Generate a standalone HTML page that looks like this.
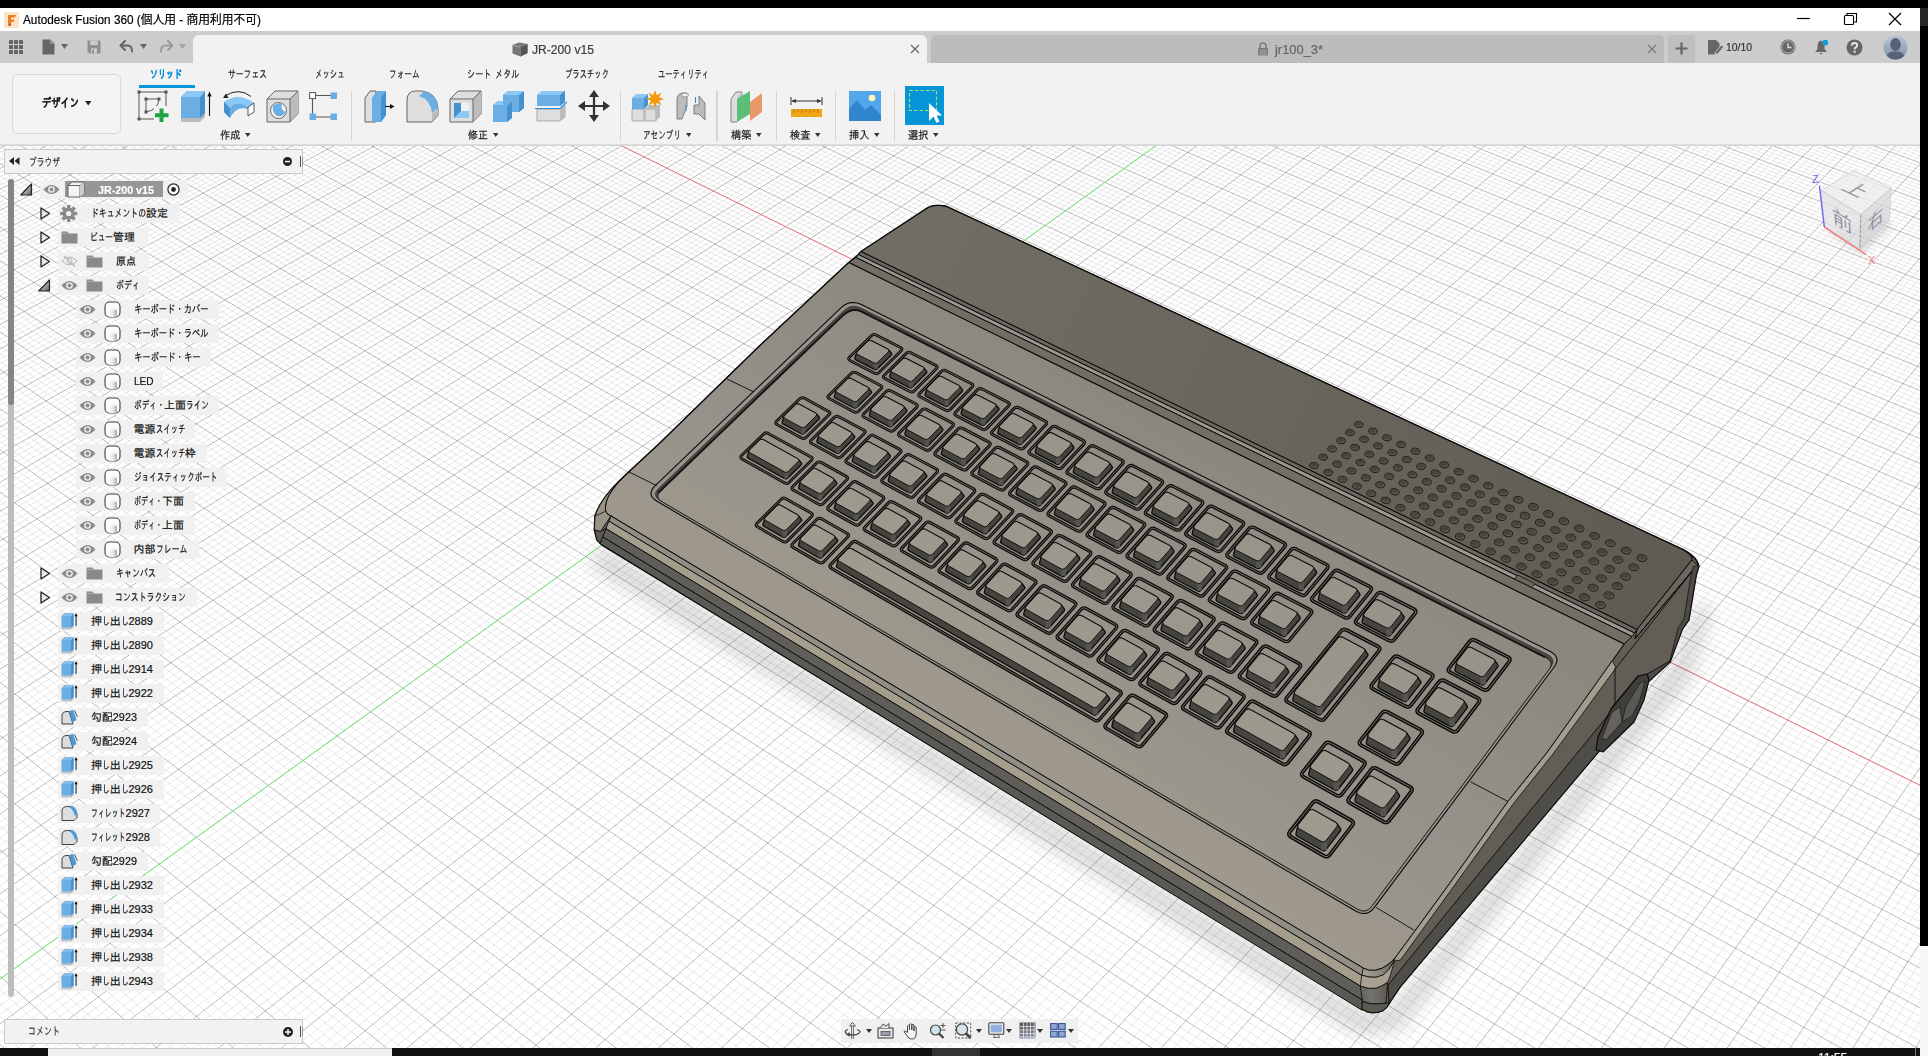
<!DOCTYPE html>
<html lang="ja"><head><meta charset="utf-8"><title>Autodesk Fusion 360</title>
<style>html,body{margin:0;padding:0}body{width:1928px;height:1056px;overflow:hidden;position:relative;background:#000;font-family:"Liberation Sans","Noto Sans CJK JP",sans-serif}
.t{position:absolute;white-space:nowrap;line-height:20px;height:20px;transform-origin:0 50%;letter-spacing:0;-webkit-text-stroke:0.2px currentColor}
#vp{position:absolute;left:0;top:0;width:1920px;height:1048px;overflow:hidden;background:#fff}
</style></head>
<body>
<svg width="0" height="0" style="position:absolute"><defs><linearGradient id="tg" x1="0" y1="0" x2="1" y2="1"><stop offset="0.3" stop-color="#ddd"/><stop offset="1" stop-color="#555"/></linearGradient><linearGradient id="bg1" x1="0" y1="0" x2="1" y2="0"><stop offset="0" stop-color="#fff"/><stop offset="0.55" stop-color="#e4e6ea"/><stop offset="1" stop-color="#a9adb6"/></linearGradient></defs></svg>
<div style="position:absolute;left:0px;top:0px;width:1928px;height:1056px;background:#000"></div>
<div style="position:absolute;left:1920px;top:0px;width:8px;height:26px;background:#262626"></div>
<div style="position:absolute;left:1920px;top:946px;width:8px;height:110px;background:#f7f7f7"></div>
<div style="position:absolute;left:0px;top:1048px;width:1920px;height:8px;background:#111"></div>
<div style="position:absolute;left:48px;top:1048px;width:344px;height:8px;background:#f0f0f0;border-top:1px solid #c8c8c8;box-sizing:border-box"></div>
<div style="position:absolute;left:932px;top:1048px;width:48px;height:8px;background:#333"></div>
<div style="position:absolute;left:1915px;top:1048px;width:1px;height:8px;background:#777"></div>
<div id="vp">
<svg width="1928" height="1056" viewBox="0 0 1928 1056" style="position:absolute;left:0;top:0">
<g shape-rendering="geometricPrecision">
<path d="M-803.4 471.5L801.7 -282.3M-800.3 474.7L805.2 -281.1M-797.2 477.8L808.8 -279.9M-794.0 481.0L812.3 -278.6M-787.7 487.3L819.4 -276.1M-784.5 490.5L823.0 -274.9M-781.3 493.7L826.5 -273.6M-778.1 496.9L830.1 -272.4M-771.6 503.3L837.3 -269.9M-768.4 506.5L840.9 -268.6M-765.1 509.7L844.5 -267.3M-761.9 513.0L848.1 -266.1M-755.3 519.5L855.3 -263.5M-752.1 522.8L859.0 -262.3M-748.8 526.1L862.6 -261.0M-745.5 529.4L866.3 -259.7M-738.8 536.0L873.6 -257.1M-735.5 539.4L877.2 -255.9M-732.1 542.7L880.9 -254.6M-728.8 546.0L884.6 -253.3M-722.0 552.8L892.0 -250.7M-718.6 556.2L895.7 -249.4M-715.2 559.6L899.4 -248.1M-711.8 563.0L903.1 -246.8M-704.9 569.8L910.6 -244.2M-701.5 573.3L914.3 -242.9M-698.0 576.7L918.1 -241.5M-694.5 580.2L921.8 -240.2M-687.6 587.1L929.4 -237.6M-684.1 590.6L933.2 -236.3M-680.5 594.1L936.9 -234.9M-677.0 597.7L940.7 -233.6M-669.9 604.7L948.4 -230.9M-666.4 608.3L952.2 -229.6M-662.8 611.9L956.0 -228.3M-659.2 615.4L959.8 -226.9M-652.0 622.6L967.5 -224.2M-648.4 626.2L971.4 -222.9M-644.7 629.9L975.2 -221.5M-641.1 633.5L979.1 -220.2M-633.8 640.8L986.9 -217.4M-630.1 644.5L990.8 -216.1M-626.4 648.2L994.7 -214.7M-622.7 651.9L998.6 -213.3M-615.2 659.3L1006.4 -210.6M-611.5 663.0L1010.4 -209.2M-607.7 666.8L1014.3 -207.8M-603.9 670.5L1018.3 -206.4M-596.4 678.1L1026.2 -203.7M-592.6 681.9L1030.2 -202.3M-588.7 685.7L1034.2 -200.9M-584.9 689.5L1038.2 -199.5M-577.2 697.2L1046.2 -196.7M-573.3 701.1L1050.2 -195.3M-569.4 705.0L1054.2 -193.8M-565.5 708.9L1058.2 -192.4M-557.7 716.7L1066.3 -189.6M-553.7 720.6L1070.4 -188.2M-549.8 724.6L1074.5 -186.7M-545.8 728.5L1078.5 -185.3M-537.8 736.5L1086.7 -182.5M-533.8 740.5L1090.8 -181.0M-529.8 744.5L1094.9 -179.6M-525.8 748.5L1099.0 -178.1M-517.6 756.6L1107.3 -175.2M-513.6 760.7L1111.5 -173.8M-509.5 764.8L1115.6 -172.3M-505.3 768.9L1119.8 -170.9M-497.1 777.1L1128.1 -167.9M-492.9 781.3L1132.3 -166.5M-488.8 785.4L1136.5 -165.0M-484.6 789.6L1140.7 -163.5M-476.2 798.0L1149.2 -160.6M-471.9 802.2L1153.4 -159.1M-467.7 806.5L1157.6 -157.6M-463.4 810.7L1161.9 -156.1M-454.9 819.3L1170.4 -153.1M-450.6 823.6L1174.7 -151.6M-446.2 827.9L1179.0 -150.1M-441.9 832.2L1183.3 -148.6M-433.2 840.9L1191.9 -145.6M-428.8 845.3L1196.2 -144.1M-424.4 849.7L1200.6 -142.6M-420.0 854.1L1204.9 -141.0M-411.1 862.9L1213.6 -138.0M-406.6 867.4L1218.0 -136.4M-402.1 871.8L1222.4 -134.9M-397.6 876.3L1226.8 -133.4M-388.6 885.4L1235.6 -130.3M-384.0 889.9L1240.0 -128.7M-379.5 894.4L1244.4 -127.2M-374.9 899.0L1248.9 -125.6M-365.7 908.2L1257.8 -122.5M-361.0 912.8L1262.2 -120.9M-356.4 917.5L1266.7 -119.4M-351.7 922.1L1271.2 -117.8M-342.3 931.5L1280.2 -114.6M-337.6 936.2L1284.7 -113.1M-332.9 940.9L1289.3 -111.5M-328.1 945.7L1293.8 -109.9M-318.5 955.2L1302.9 -106.7M-313.7 960.0L1307.5 -105.1M-308.9 964.9L1312.0 -103.5M-304.0 969.7L1316.6 -101.9M-294.3 979.4L1325.8 -98.7M-289.4 984.3L1330.4 -97.0M-284.5 989.2L1335.1 -95.4M-279.5 994.2L1339.7 -93.8M-269.6 1004.1L1349.0 -90.5M-264.6 1009.1L1353.7 -88.9M-259.5 1014.1L1358.4 -87.3M-254.5 1019.1L1363.1 -85.6M-244.4 1029.2L1372.5 -82.3M-239.3 1034.3L1377.2 -80.7M-234.1 1039.4L1381.9 -79.0M-229.0 1044.6L1386.7 -77.3M-218.7 1054.9L1396.2 -74.0M-213.5 1060.1L1401.0 -72.3M-208.2 1065.3L1405.7 -70.7M-203.0 1070.5L1410.5 -69.0M-192.4 1081.0L1420.2 -65.6M-187.1 1086.3L1425.0 -63.9M-181.8 1091.6L1429.8 -62.2M-176.4 1097.0L1434.7 -60.5M-165.7 1107.7L1444.4 -57.1M-160.3 1113.1L1449.3 -55.4M-154.8 1118.5L1454.2 -53.7M-149.4 1124.0L1459.1 -52.0M-138.4 1134.9L1469.0 -48.5M-132.9 1140.5L1473.9 -46.8M-127.3 1146.0L1478.8 -45.0M-121.7 1151.6L1483.8 -43.3M-110.5 1162.7L1493.8 -39.8M-104.9 1168.4L1498.8 -38.1M-99.2 1174.0L1503.8 -36.3M-93.5 1179.7L1508.8 -34.5M-82.1 1191.1L1518.9 -31.0M-76.3 1196.9L1523.9 -29.2M-70.5 1202.6L1529.0 -27.5M-64.7 1208.4L1534.1 -25.7M-53.0 1220.1L1544.3 -22.1M-47.2 1225.9L1549.4 -20.3M-41.2 1231.8L1554.5 -18.5M-35.3 1237.8L1559.7 -16.7M-23.4 1249.7L1570.0 -13.1M-17.4 1255.7L1575.1 -11.3M-11.3 1261.7L1580.3 -9.5M-5.3 1267.7L1585.5 -7.7M6.9 1279.9L1596.0 -4.0M13.1 1286.0L1601.2 -2.2M19.2 1292.2L1606.4 -0.3M25.4 1298.3L1611.7 1.5M37.9 1310.8L1622.3 5.2M44.2 1317.0L1627.6 7.1M50.5 1323.3L1632.9 8.9M56.8 1329.6L1638.2 10.8M69.5 1342.3L1648.9 14.5M75.9 1348.7L1654.3 16.4M82.4 1355.2L1659.6 18.3M88.9 1361.6L1665.0 20.2M101.9 1374.6L1675.8 24.0M108.4 1381.1L1681.3 25.9M115.0 1387.7L1686.7 27.8M121.6 1394.3L1692.2 29.7M134.9 1407.6L1703.1 33.5M141.7 1414.3L1708.6 35.5M148.4 1421.0L1714.1 37.4M155.2 1427.7L1719.6 39.3M168.8 1441.3L1730.7 43.2M175.6 1448.2L1736.3 45.2M182.5 1455.0L1741.8 47.1M189.4 1462.0L1747.4 49.1M203.4 1475.9L1758.6 53.0M210.4 1482.9L1764.3 55.0M217.4 1489.9L1769.9 57.0M224.5 1497.0L1775.6 58.9M238.8 1511.2L1786.9 62.9M246.0 1518.3L1792.6 64.9M253.2 1525.5L1798.3 66.9M260.4 1532.8L1804.0 68.9M275.0 1547.3L1815.5 72.9M282.4 1554.7L1821.3 75.0M289.8 1562.0L1827.1 77.0M297.2 1569.4L1832.9 79.0M312.1 1584.3L1844.5 83.1M319.7 1591.9L1850.4 85.1M327.2 1599.4L1856.2 87.2M334.8 1607.0L1862.1 89.3M350.1 1622.3L1873.9 93.4M357.9 1630.0L1879.8 95.5M365.6 1637.7L1885.7 97.5M373.4 1645.4L1891.7 99.6M389.1 1661.1L1903.6 103.8M397.0 1669.0L1909.6 105.9M404.9 1676.9L1915.6 108.0M412.9 1684.9L1921.6 110.1M429.0 1700.9L1933.7 114.3M437.1 1709.0L1939.7 116.5M445.2 1717.1L1945.8 118.6M453.4 1725.2L1951.9 120.7M469.9 1741.7L1964.2 125.0M478.2 1750.0L1970.3 127.2M486.5 1758.3L1976.5 129.3M494.9 1766.7L1982.6 131.5M511.8 1783.5L1995.0 135.8M520.3 1792.0L2001.3 138.0M528.9 1800.5L2007.5 140.2M537.5 1809.1L2013.7 142.4M554.8 1826.4L2026.3 146.8M563.5 1835.1L2032.6 149.0M572.3 1843.9L2038.9 151.2M581.1 1852.7L2045.3 153.4M598.9 1870.4L2058.0 157.9M607.9 1879.4L2064.4 160.1M616.9 1888.4L2070.8 162.4M626.0 1897.4L2077.2 164.6M644.2 1915.6L2090.1 169.2M653.4 1924.8L2096.6 171.4M662.7 1934.0L2103.0 173.7M672.0 1943.3L2109.5 176.0M690.7 1962.0L2122.6 180.5M700.2 1971.4L2129.2 182.8M709.7 1980.9L2135.7 185.1M719.2 1990.4L2142.3 187.5M738.5 2009.6L2155.5 192.1M748.2 2019.3L2162.2 194.4M757.9 2029.0L2168.9 196.8M767.8 2038.8L2175.5 199.1M787.6 2058.6L2188.9 203.8M797.5 2068.5L2195.7 206.2M807.6 2078.5L2202.4 208.5M817.6 2088.6L2209.2 210.9M838.0 2108.9L2222.8 215.7M848.2 2119.1L2229.6 218.0M858.6 2129.4L2236.4 220.4M868.9 2139.7L2243.3 222.8M889.8 2160.6L2257.1 227.7M900.4 2171.1L2264.0 230.1M911.0 2181.7L2270.9 232.5M921.7 2192.4L2277.9 235.0M943.2 2213.8L2291.8 239.9M954.0 2224.6L2298.9 242.3M964.9 2235.5L2305.9 244.8M975.9 2246.5L2312.9 247.2M998.1 2268.6L2327.1 252.2M1009.2 2279.7L2334.2 254.7M1020.5 2290.9L2341.3 257.2M1031.8 2302.2L2348.5 259.7M1054.6 2324.9L2362.8 264.7M1066.1 2336.4L2370.0 267.3M1077.7 2348.0L2377.3 269.8M1089.3 2359.6L2384.5 272.3M1112.8 2383.0L2399.1 277.4M1124.6 2394.8L2406.4 280.0M1136.5 2406.7L2413.7 282.6M1148.5 2418.7L2421.0 285.1M-798.5 464.6L1169.3 2416.1M-790.4 460.9L1177.9 2401.5M-782.4 457.1L1186.4 2387.1M-774.4 453.4L1194.9 2372.8M-758.5 445.9L1211.6 2344.4M-750.6 442.2L1219.9 2330.4M-742.8 438.5L1228.2 2316.5M-734.9 434.8L1236.3 2302.7M-719.3 427.5L1252.5 2275.3M-711.5 423.9L1260.5 2261.8M-703.8 420.3L1268.5 2248.4M-696.1 416.7L1276.3 2235.1M-680.8 409.5L1292.0 2208.7M-673.2 405.9L1299.7 2195.6M-665.6 402.4L1307.4 2182.6M-658.0 398.8L1315.0 2169.7M-643.0 391.8L1330.1 2144.3M-635.5 388.3L1337.5 2131.6M-628.0 384.8L1344.9 2119.1M-620.6 381.3L1352.3 2106.7M-605.8 374.4L1366.9 2082.0M-598.5 370.9L1374.1 2069.8M-591.1 367.5L1381.3 2057.7M-583.9 364.1L1388.4 2045.7M-569.3 357.3L1402.5 2021.8M-562.1 353.9L1409.5 2010.0M-554.9 350.5L1416.4 1998.3M-547.7 347.1L1423.3 1986.7M-533.5 340.5L1436.9 1963.6M-526.4 337.1L1443.7 1952.2M-519.3 333.8L1450.4 1940.8M-512.3 330.5L1457.1 1929.6M-498.3 323.9L1470.3 1907.2M-491.3 320.7L1476.8 1896.2M-484.3 317.4L1483.3 1885.2M-477.4 314.2L1489.8 1874.3M-463.6 307.7L1502.6 1852.6M-456.8 304.5L1508.9 1841.9M-450.0 301.3L1515.2 1831.3M-443.1 298.1L1521.5 1820.7M-429.6 291.8L1533.9 1799.7M-422.9 288.6L1540.0 1789.4M-416.2 285.5L1546.1 1779.0M-409.5 282.3L1552.2 1768.8M-396.2 276.1L1564.2 1748.5M-389.5 273.0L1570.2 1738.4M-382.9 269.9L1576.1 1728.4M-376.4 266.8L1582.0 1718.4M-363.3 260.7L1593.6 1698.7M-356.8 257.6L1599.4 1689.0M-350.3 254.6L1605.2 1679.2M-343.8 251.6L1610.9 1669.6M-330.9 245.5L1622.2 1650.5M-324.5 242.5L1627.8 1641.0M-318.1 239.5L1633.4 1631.6M-311.8 236.6L1638.9 1622.2M-299.1 230.6L1649.9 1603.6M-292.8 227.7L1655.4 1594.4M-286.5 224.7L1660.8 1585.2M-280.3 221.8L1666.2 1576.1M-267.8 216.0L1676.8 1558.1M-261.6 213.1L1682.1 1549.1M-255.5 210.2L1687.4 1540.3M-249.3 207.3L1692.6 1531.4M-237.0 201.5L1703.0 1513.9M-230.9 198.7L1708.1 1505.2M-224.9 195.8L1713.3 1496.5M-218.8 193.0L1718.3 1487.9M-206.8 187.4L1728.4 1470.9M-200.8 184.5L1733.4 1462.4M-194.8 181.7L1738.4 1454.0M-188.8 178.9L1743.3 1445.7M-177.0 173.4L1753.2 1429.1M-171.1 170.6L1758.0 1420.9M-165.2 167.9L1762.9 1412.7M-159.3 165.1L1767.7 1404.6M-147.6 159.6L1777.2 1388.4M-141.8 156.9L1781.9 1380.4M-136.0 154.2L1786.6 1372.5M-130.3 151.5L1791.3 1364.6M-118.8 146.1L1800.6 1348.9M-113.1 143.4L1805.2 1341.1M-107.4 140.8L1809.8 1333.3M-101.7 138.1L1814.4 1325.6M-90.4 132.8L1823.4 1310.4M-84.7 130.2L1827.9 1302.8M-79.1 127.5L1832.4 1295.2M-73.5 124.9L1836.8 1287.7M-62.4 119.7L1845.6 1272.8M-56.8 117.1L1850.0 1265.5M-51.3 114.5L1854.3 1258.1M-45.8 111.9L1858.6 1250.8M-34.8 106.8L1867.2 1236.3M-29.4 104.2L1871.5 1229.1M-23.9 101.7L1875.7 1221.9M-18.5 99.1L1879.9 1214.8M-7.7 94.1L1888.3 1200.7M-2.3 91.6L1892.4 1193.7M3.0 89.0L1896.6 1186.7M8.4 86.5L1900.7 1179.8M19.0 81.6L1908.8 1166.0M24.3 79.1L1912.9 1159.1M29.6 76.6L1916.9 1152.3M34.8 74.1L1920.9 1145.6M45.3 69.2L1928.9 1132.1M50.5 66.8L1932.8 1125.4M55.7 64.4L1936.7 1118.8M60.9 61.9L1940.6 1112.2M71.2 57.1L1948.4 1099.1M76.4 54.7L1952.2 1092.6M81.5 52.3L1956.1 1086.1M86.6 49.9L1959.9 1079.7M96.8 45.1L1967.5 1066.9M101.8 42.7L1971.2 1060.5M106.9 40.4L1974.9 1054.2M111.9 38.0L1978.7 1047.9M121.9 33.3L1986.1 1035.4M126.9 31.0L1989.7 1029.2M131.9 28.7L1993.4 1023.0M136.9 26.3L1997.0 1016.9M146.7 21.7L2004.2 1004.7M151.6 19.4L2007.8 998.7M156.5 17.1L2011.4 992.6M161.4 14.8L2014.9 986.6M171.2 10.3L2022.0 974.7M176.0 8.0L2025.5 968.8M180.8 5.7L2028.9 962.9M185.7 3.5L2032.4 957.1M195.2 -1.0L2039.3 945.4M200.0 -3.3L2042.7 939.6M204.8 -5.5L2046.1 933.9M209.5 -7.7L2049.5 928.2M219.0 -12.1L2056.2 916.8M223.7 -14.4L2059.6 911.1M228.4 -16.6L2062.9 905.5M233.1 -18.7L2066.2 899.9M242.4 -23.1L2072.8 888.8M247.0 -25.3L2076.1 883.3M251.7 -27.5L2079.3 877.8M256.3 -29.6L2082.5 872.3M265.5 -33.9L2089.0 861.5M270.0 -36.1L2092.2 856.1M274.6 -38.2L2095.3 850.7M279.1 -40.3L2098.5 845.3M288.2 -44.6L2104.8 834.7M292.7 -46.7L2107.9 829.4M297.2 -48.8L2111.0 824.2M301.7 -50.9L2114.1 818.9M310.6 -55.1L2120.3 808.5M315.1 -57.2L2123.3 803.4M319.5 -59.3L2126.4 798.2M324.0 -61.3L2129.4 793.1M332.8 -65.5L2135.4 782.9M337.2 -67.5L2138.4 777.9M341.5 -69.6L2141.4 772.9M345.9 -71.6L2144.4 767.9M354.6 -75.7L2150.2 757.9M358.9 -77.7L2153.2 752.9M363.2 -79.7L2156.1 748.0M367.5 -81.8L2159.0 743.1M376.1 -85.8L2164.7 733.4M380.4 -87.8L2167.6 728.5M384.7 -89.8L2170.5 723.7M388.9 -91.8L2173.3 718.9M397.4 -95.7L2179.0 709.4M401.6 -97.7L2181.8 704.6M405.8 -99.7L2184.6 699.9M410.0 -101.6L2187.3 695.2M418.3 -105.6L2192.9 685.9M422.5 -107.5L2195.6 681.2M426.6 -109.4L2198.3 676.6M430.7 -111.4L2201.1 672.0M439.0 -115.2L2206.5 662.8M443.1 -117.2L2209.2 658.3M447.2 -119.1L2211.9 653.7M451.3 -121.0L2214.5 649.2M459.4 -124.8L2219.8 640.3M463.4 -126.7L2222.5 635.8M467.5 -128.6L2225.1 631.4M471.5 -130.5L2227.7 626.9M479.5 -134.2L2232.9 618.2M483.5 -136.1L2235.5 613.8M487.5 -138.0L2238.1 609.4M491.5 -139.8L2240.6 605.1M499.4 -143.5L2245.7 596.5M503.3 -145.4L2248.3 592.2M507.3 -147.2L2250.8 587.9M511.2 -149.1L2253.3 583.7M519.0 -152.7L2258.3 575.3M522.9 -154.6L2260.8 571.1M526.8 -156.4L2263.3 566.9M530.6 -158.2L2265.7 562.7M538.3 -161.8L2270.6 554.4M542.2 -163.6L2273.1 550.3M546.0 -165.4L2275.5 546.2M549.8 -167.2L2277.9 542.1M557.5 -170.8L2282.7 534.0M561.2 -172.5L2285.1 530.0M565.0 -174.3L2287.5 525.9M568.8 -176.1L2289.8 521.9M576.3 -179.6L2294.6 514.0M580.1 -181.4L2296.9 510.0M583.8 -183.1L2299.2 506.1M587.5 -184.8L2301.6 502.1M594.9 -188.3L2306.2 494.3M598.6 -190.1L2308.5 490.4M602.3 -191.8L2310.8 486.6M606.0 -193.5L2313.0 482.7M613.3 -196.9L2317.6 475.0M617.0 -198.7L2319.8 471.2M620.6 -200.4L2322.1 467.4M624.3 -202.1L2324.3 463.6M631.5 -205.5L2328.8 456.1M635.1 -207.1L2331.0 452.4M638.7 -208.8L2333.2 448.6M642.3 -210.5L2335.4 444.9M649.4 -213.9L2339.8 437.5M653.0 -215.5L2341.9 433.9M656.6 -217.2L2344.1 430.2M660.1 -218.9L2346.3 426.5M667.2 -222.2L2350.6 419.3M670.7 -223.8L2352.7 415.7M674.2 -225.5L2354.8 412.1M677.7 -227.1L2356.9 408.5M684.7 -230.4L2361.2 401.4M688.1 -232.0L2363.3 397.8M691.6 -233.6L2365.3 394.3M695.1 -235.2L2367.4 390.8M701.9 -238.5L2371.6 383.8M705.4 -240.1L2373.6 380.3M708.8 -241.7L2375.7 376.9M712.2 -243.3L2377.7 373.4M719.0 -246.5L2381.8 366.5M722.4 -248.1L2383.8 363.1M725.8 -249.6L2385.8 359.7M729.2 -251.2L2387.8 356.3M735.9 -254.4L2391.8 349.6M739.2 -255.9L2393.8 346.2M742.6 -257.5L2395.8 342.9M745.9 -259.1L2397.8 339.5M752.6 -262.2L2401.7 332.9M755.9 -263.7L2403.6 329.6M759.2 -265.3L2405.6 326.3M762.5 -266.8L2407.5 323.0M769.0 -269.9L2411.4 316.5M772.3 -271.4L2413.3 313.3M775.6 -273.0L2415.2 310.0M778.8 -274.5L2417.1 306.8M785.3 -277.5L2420.9 300.4M788.5 -279.0L2422.8 297.2M791.8 -280.5L2424.7 294.0M795.0 -282.1L2426.5 290.9" stroke="#000" stroke-opacity="0.085" stroke-width="1" fill="none"/>
<path d="M-806.6 468.4L798.2 -283.6M-790.8 484.1L815.9 -277.4M-774.9 500.1L833.7 -271.1M-758.6 516.3L851.7 -264.8M-742.1 532.7L869.9 -258.4M-725.4 549.4L888.3 -252.0M-708.4 566.4L906.9 -245.5M-691.1 583.7L925.6 -238.9M-673.5 601.2L944.5 -232.3M-655.6 619.0L963.7 -225.6M-637.4 637.1L983.0 -218.8M-618.9 655.6L1002.5 -212.0M-600.2 674.3L1022.2 -205.0M-581.0 693.4L1042.2 -198.1M-561.6 712.8L1062.3 -191.0M-541.8 732.5L1082.6 -183.9M-521.7 752.6L1103.2 -176.7M-501.2 773.0L1123.9 -169.4M-480.4 793.8L1144.9 -162.0M-459.2 815.0L1166.2 -154.6M-437.5 836.5L1187.6 -147.1M-415.5 858.5L1209.3 -139.5M-393.1 880.8L1231.2 -131.8M-370.3 903.6L1253.3 -124.1M-347.0 926.8L1275.7 -116.2M-323.3 950.5L1298.3 -108.3M-299.2 974.5L1321.2 -100.3M-274.6 999.1L1344.4 -92.2M-249.4 1024.2L1367.8 -84.0M-223.8 1049.7L1391.4 -75.7M-197.7 1075.8L1415.3 -67.3M-171.1 1102.3L1439.5 -58.8M-143.9 1129.5L1464.0 -50.2M-116.1 1157.1L1488.8 -41.6M-87.8 1185.4L1513.8 -32.8M-58.9 1214.2L1539.2 -23.9M-29.4 1243.7L1564.8 -14.9M0.8 1273.8L1590.7 -5.8M31.6 1304.5L1617.0 3.4M63.1 1336.0L1643.5 12.7M95.3 1368.1L1670.4 22.1M128.3 1400.9L1697.6 31.6M161.9 1434.5L1725.1 41.3M196.4 1468.9L1753.0 51.0M231.6 1504.0L1781.2 60.9M267.7 1540.0L1809.8 70.9M304.6 1576.9L1838.7 81.1M342.5 1614.6L1868.0 91.3M381.2 1653.3L1897.6 101.7M420.9 1692.9L1927.6 112.2M461.6 1733.4L1958.0 122.9M503.3 1775.1L1988.8 133.7M546.1 1817.7L2020.0 144.6M590.0 1861.5L2051.6 155.7M635.1 1906.5L2083.6 166.9M681.3 1952.6L2116.1 178.3M728.8 2000.0L2148.9 189.8M777.6 2048.7L2182.2 201.4M827.8 2098.7L2216.0 213.3M879.4 2150.1L2250.2 225.3M932.4 2203.1L2284.9 237.4M987.0 2257.5L2320.0 249.7M1043.1 2313.5L2355.6 262.2M1101.0 2371.2L2391.8 274.9M1160.6 2430.7L2428.4 287.7M-806.6 468.4L1160.6 2430.7M-766.5 449.6L1203.3 2358.5M-727.1 431.2L1244.5 2289.0M-688.4 413.1L1284.2 2221.8M-650.5 395.3L1322.6 2157.0M-613.2 377.8L1359.6 2094.3M-576.6 360.6L1395.5 2033.7M-540.6 343.8L1430.1 1975.1M-505.3 327.2L1463.7 1918.4M-470.5 310.9L1496.2 1863.4M-436.4 294.9L1527.7 1810.2M-402.8 279.2L1558.2 1758.6M-369.8 263.8L1587.8 1708.6M-337.3 248.5L1616.6 1660.0M-305.4 233.6L1644.4 1612.9M-274.0 218.9L1671.5 1567.1M-243.2 204.4L1697.8 1522.6M-212.8 190.2L1723.4 1479.4M-182.9 176.2L1748.3 1437.4M-153.5 162.4L1772.4 1396.5M-124.5 148.8L1796.0 1356.7M-96.0 135.5L1818.9 1318.0M-67.9 122.3L1841.2 1280.3M-40.3 109.4L1862.9 1243.5M-13.1 96.6L1884.1 1207.7M13.7 84.0L1904.8 1172.8M40.1 71.7L1924.9 1138.8M66.1 59.5L1944.5 1105.6M91.7 47.5L1963.7 1073.2M116.9 35.7L1982.4 1041.6M141.8 24.0L2000.6 1010.8M166.3 12.5L2018.5 980.7M190.5 1.2L2035.9 951.2M214.3 -9.9L2052.9 922.5M237.7 -20.9L2069.5 894.4M260.9 -31.8L2085.8 866.9M283.7 -42.5L2101.7 840.0M306.2 -53.0L2117.2 813.7M328.4 -63.4L2132.4 788.0M350.3 -73.7L2147.3 762.9M371.8 -83.8L2161.9 738.2M393.1 -93.8L2176.1 714.1M414.1 -103.6L2190.1 690.5M434.9 -113.3L2203.8 667.4M455.3 -122.9L2217.2 644.7M475.5 -132.4L2230.3 622.5M495.4 -141.7L2243.2 600.8M515.1 -150.9L2255.8 579.5M534.5 -160.0L2268.2 558.6M553.7 -169.0L2280.3 538.1M572.6 -177.8L2292.2 517.9M591.2 -186.6L2303.9 498.2M609.7 -195.2L2315.3 478.9M627.9 -203.8L2326.6 459.9M645.9 -212.2L2337.6 441.2M663.6 -220.5L2348.4 422.9M681.2 -228.7L2359.1 404.9M698.5 -236.8L2369.5 387.3M715.6 -244.9L2379.7 370.0M732.5 -252.8L2389.8 352.9M749.2 -260.6L2399.7 336.2M765.7 -268.4L2409.4 319.8M782.1 -276.0L2419.0 303.6M798.2 -283.6L2428.4 287.7" stroke="#000" stroke-opacity="0.25" stroke-width="1" fill="none"/>
<line x1="260.9" y1="-31.8" x2="2085.8" y2="866.9" stroke="#f66" stroke-width="1.0" stroke-opacity="0.8"/>
<line x1="-171.1" y1="1102.3" x2="1439.5" y2="-58.8" stroke="#6e6" stroke-width="1.0" stroke-opacity="0.85"/>
<defs>
<linearGradient id="gBack" gradientUnits="userSpaceOnUse" x1="900" y1="230" x2="1680" y2="600"><stop offset="0" stop-color="#726d64"/><stop offset="0.45" stop-color="#6a655d"/><stop offset="1" stop-color="#5f5b53"/></linearGradient>
<linearGradient id="gTop" gradientUnits="userSpaceOnUse" x1="1240" y1="450" x2="1000" y2="860"><stop offset="0" stop-color="#8b877f"/><stop offset="0.5" stop-color="#96918a"/><stop offset="1" stop-color="#a59e8f"/></linearGradient>
<linearGradient id="gPlate" gradientUnits="userSpaceOnUse" x1="1240" y1="480" x2="1000" y2="860"><stop offset="0" stop-color="#8e8a82"/><stop offset="0.5" stop-color="#98938a"/><stop offset="1" stop-color="#a39c8e"/></linearGradient>
<linearGradient id="gKey" gradientUnits="userSpaceOnUse" x1="1240" y1="480" x2="1000" y2="860"><stop offset="0" stop-color="#979389"/><stop offset="1" stop-color="#a59f92"/></linearGradient>
<filter id="blur6" x="-20%" y="-20%" width="140%" height="140%"><feGaussianBlur stdDeviation="9"/></filter>
<filter id="blur1"><feGaussianBlur stdDeviation="0.8"/></filter><filter id="blur3" x="-30%" y="-30%" width="160%" height="160%"><feGaussianBlur stdDeviation="3"/></filter>
</defs>
<polygon points="600.0,545.0 1365.0,1012.0 1392.0,1005.0 1672.0,664.0 1700.0,600.0 1712.0,610.0 1690.0,680.0 1400.0,1030.0 1360.0,1036.0 590.0,566.0" fill="#000" opacity="0.14" filter="url(#blur6)"/>
<polygon points="926.2,208.8 926.2,208.8 929.1,207.2 932.3,206.1 935.7,205.5 939.4,205.5 943.3,205.9 947.5,206.9 1683.8,550.0 1683.8,550.0 1688.0,552.5 1691.5,555.1 1694.4,557.8 1696.5,560.6 1698.0,563.4 1698.8,566.2 1696.2,575.0 1688.8,620.0 1682.5,628.8 1670.0,662.0 1647.0,683.0 1600.0,750.0 1400.0,987.0 1389.0,1003.6 1386.5,1007.5 1383.0,1010.5 1378.0,1012.2 1372.4,1012.7 1367.0,1011.6 1361.8,1009.0 602.0,545.0 597.0,540.0 594.4,530.0 595.0,516.0 595.0,516.0 597.2,510.4 600.2,504.7 604.1,498.6 609.0,492.3 614.7,485.8 621.3,479.0 628.8,472.0 660.0,443.0 700.0,404.0 760.0,345.5 848.8,262.5 858.5,254.6 861.0,251.6" fill="#625e56" stroke="#0a0a0a" stroke-width="1.6" stroke-linejoin="round" />
<polygon points="926.2,208.8 926.2,208.8 929.1,207.2 932.3,206.1 935.7,205.5 939.4,205.5 943.3,205.9 947.5,206.9 1683.8,550.0 1683.8,550.0 1687.7,552.7 1690.4,555.2 1691.8,557.7 1691.9,560.0 1637.0,629.5 861.0,251.6" fill="url(#gBack)" stroke="#0a0a0a" stroke-width="1.1" stroke-linejoin="round" />
<polygon points="1691.9,560.0 1698.8,566.2 1696.2,575.0 1691.9,571.3 1635.0,638.8 1637.0,629.5" fill="#6b675f" stroke="#0a0a0a" stroke-width="1" stroke-linejoin="round" />
<line x1="1691.9" y1="571.3" x2="1635.0" y2="638.8" stroke="#0a0a0a" stroke-width="1" />
<polygon points="861.0,251.6 1637.0,629.5 1634.5,633.0 858.5,254.6" fill="#6b665d" stroke="#0a0a0a" stroke-width="1.0" stroke-linejoin="round" />
<polygon points="858.5,254.6 1634.5,633.0 1632.0,636.5 856.0,257.5" fill="#9a978e" stroke="#0a0a0a" stroke-width="1.0" stroke-linejoin="round" />
<polygon points="856.0,257.5 1632.0,636.5 1624.2,644.0 848.8,262.5" fill="#726e65" stroke="#0a0a0a" stroke-width="1.0" stroke-linejoin="round" />
<polygon points="848.8,262.5 760.0,345.5 700.0,404.0 660.0,443.0 628.8,472.0 622.0,478.4 616.3,484.6 611.9,490.4 608.5,496.0 606.4,501.3 605.4,506.3 605.5,511.0 607.5,514.2 611.0,516.0 1363.3,968.2 1369.0,970.2 1375.5,970.3 1382.0,968.4 1387.6,965.0 1391.5,962.0 1394.4,959.0 1445.0,890.0 1508.0,801.5 1547.5,752.0 1612.5,660.5 1624.2,644.0" fill="url(#gTop)" stroke="#0a0a0a" stroke-width="1.1" stroke-linejoin="round" />
<polygon points="611.0,516.0 1363.3,968.2 1363.1,976.2 608.9,521.2" fill="#908f85" stroke="#0a0a0a" stroke-width="0.9" stroke-linejoin="round" />
<polygon points="608.9,521.2 1363.1,976.2 1362.7,987.5 605.9,528.6" fill="#a69e8d" stroke="#0a0a0a" stroke-width="0.9" stroke-linejoin="round" />
<polygon points="605.9,528.6 1362.7,987.5 1362.3,1000.1 602.6,536.9" fill="#5f5e58" stroke="#0a0a0a" stroke-width="0.9" stroke-linejoin="round" />
<polygon points="602.6,536.9 1362.3,1000.1 1362.0,1010.2 600.0,543.5" fill="#5a5a54" stroke="#0a0a0a" stroke-width="0.9" stroke-linejoin="round" />
<polygon points="628.8,472.0 621.3,479.0 614.7,485.8 609.0,492.3 604.1,498.6 600.2,504.7 597.2,510.4 595.0,516.0 594.4,530.0 600.5,531.5 611.0,516.0 611.0,516.0 607.5,514.2 605.5,511.0 605.4,506.3 606.4,501.3 608.5,496.0 611.9,490.4 616.3,484.6 622.0,478.4 628.8,472.0" fill="#9a9486" stroke="#0a0a0a" stroke-width="0.9" stroke-linejoin="round" />
<polygon points="594.4,530.0 600.5,531.5 605.9,528.6 600.0,543.5 597.0,540.0" fill="#5b5952" stroke="#0a0a0a" stroke-width="0.8" stroke-linejoin="round" />
<line x1="595.0" y1="516.0" x2="605.2" y2="511.5" stroke="#0a0a0a" stroke-width="0.8" />
<defs><linearGradient id="gFil" gradientUnits="userSpaceOnUse" x1="1362" y1="972" x2="1392" y2="965"><stop offset="0" stop-color="#a5a398"/><stop offset="0.5" stop-color="#8c8a80"/><stop offset="1" stop-color="#6a6861"/></linearGradient><linearGradient id="gCor" gradientUnits="userSpaceOnUse" x1="1362" y1="995" x2="1388" y2="992"><stop offset="0" stop-color="#66655f"/><stop offset="0.35" stop-color="#74736c"/><stop offset="1" stop-color="#5c5a53"/></linearGradient></defs>
<polygon points="1363.3,968.2 1369.0,970.2 1375.5,970.3 1382.0,968.4 1387.6,965.0 1391.5,962.0 1394.4,959.0 1394.4,961.0 1388.5,970.0 1383.0,975.0 1376.0,977.3 1369.0,977.0 1361.8,975.2" fill="url(#gFil)" stroke="#0a0a0a" stroke-width="0.8" stroke-linejoin="round" />
<polygon points="1361.8,975.2 1369.0,977.0 1376.0,977.3 1383.0,975.0 1388.5,970.0 1394.4,961.0 1390.5,975.0 1387.6,982.4 1382.0,985.8 1376.0,988.3 1368.0,988.4 1360.3,986.2" fill="#a8a191" stroke="#0a0a0a" stroke-width="0.8" stroke-linejoin="round" />
<polygon points="1360.3,986.2 1368.0,988.4 1376.0,988.3 1382.0,985.8 1387.6,982.4 1386.0,1002.9 1382.0,1003.6 1376.0,1004.0 1369.0,1003.4 1362.6,1001.4" fill="url(#gCor)" stroke="#0a0a0a" stroke-width="0.8" stroke-linejoin="round" />
<polygon points="1362.6,1001.4 1369.0,1003.4 1376.0,1004.0 1382.0,1003.6 1386.0,1002.9 1389.0,1003.6 1386.5,1007.5 1383.0,1010.5 1378.0,1012.2 1372.4,1012.7 1367.0,1011.6 1361.8,1009.0" fill="#5a5851" stroke="#0a0a0a" stroke-width="0.8" stroke-linejoin="round" />
<polygon points="1394.4,959.0 1445.0,890.0 1508.0,801.5 1547.5,752.0 1612.5,660.5 1615.0,666.0 1616.0,668.0 1553.0,754.0 1513.5,803.5 1450.0,891.5 1400.5,960.0 1394.4,961.0" fill="#a39d8e" stroke="#0a0a0a" stroke-width="0.8" stroke-linejoin="round" />
<polygon points="1388.0,985.0 1614.0,708.0 1644.0,676.0 1670.0,661.0 1670.0,662.0 1647.0,683.0 1600.0,750.0 1400.0,987.0 1389.0,1003.6" fill="#4f4d47" stroke="#0a0a0a" stroke-width="0.9" stroke-linejoin="round" />
<polygon points="1698.8,566.2 1696.2,575.0 1688.8,620.0 1682.5,628.8 1670.0,662.0 1670.0,661.0 1678.0,628.0 1684.0,619.0 1691.0,575.0 1693.5,566.0" fill="#4d4b45" stroke="#0a0a0a" stroke-width="0.7" stroke-linejoin="round" />
<line x1="1692.0" y1="571.5" x2="1616.0" y2="668.0" stroke="#0a0a0a" stroke-width="0.9" />
<line x1="1615.0" y1="668.0" x2="1615.0" y2="706.0" stroke="#0a0a0a" stroke-width="0.9" />
<polygon points="1638.0,676.0 1647.0,674.0 1649.0,680.0 1644.0,700.0 1634.0,722.0 1603.0,752.0 1596.0,750.0 1598.0,737.0 1611.0,709.0" fill="#3f3e3a" stroke="#0a0a0a" stroke-width="1.2" stroke-linejoin="round" />
<polygon points="1640.0,683.0 1645.0,681.0 1640.0,700.0 1632.0,716.0 1622.0,722.0 1626.0,706.0" fill="#5a5852" stroke="#111" stroke-width="0.6" stroke-linejoin="round" />
<polygon points="1612.0,712.0 1620.0,707.0 1622.0,722.0 1606.0,740.0 1602.0,738.0" fill="#66635c" stroke="#111" stroke-width="0.6" stroke-linejoin="round" />
<polygon points="840.9,307.9 844.1,305.3 847.4,303.5 850.9,302.6 854.4,302.5 858.1,303.2 861.9,304.7 1550.0,651.3 1553.3,653.3 1555.6,655.7 1556.8,658.2 1556.8,661.1 1555.9,664.2 1553.8,667.5 1374.6,907.2 1371.9,910.2 1369.0,912.2 1365.9,913.4 1362.7,913.5 1359.2,912.7 1355.6,911.0 657.0,501.3 653.8,499.0 651.8,496.6 651.0,494.1 651.2,491.4 652.6,488.6 655.2,485.7" fill="#96948c" stroke="#0a0a0a" stroke-width="1.1" stroke-linejoin="round" />
<polygon points="844.0,310.6 846.6,308.5 849.3,307.1 852.0,306.4 854.9,306.3 857.9,306.9 861.0,308.1 1547.4,654.5 1550.1,656.1 1551.9,658.0 1552.9,660.1 1552.9,662.4 1552.1,664.9 1550.5,667.6 1372.2,905.7 1370.1,908.1 1367.7,909.8 1365.3,910.7 1362.6,910.8 1359.8,910.2 1356.9,908.8 660.4,500.7 657.8,498.9 656.2,497.0 655.5,494.9 655.7,492.8 656.8,490.5 658.9,488.2" fill="#4a4843" stroke="#2a2926" stroke-width="0.7" stroke-linejoin="round" />
<polygon points="844.7,313.7 847.2,311.7 849.7,310.4 852.4,309.7 855.1,309.6 857.9,310.1 860.9,311.3 1545.8,657.5 1548.3,659.1 1550.0,660.9 1551.0,662.9 1551.0,665.1 1550.3,667.4 1548.7,670.0 1371.9,906.1 1369.9,908.4 1367.6,910.0 1365.3,910.8 1362.8,911.0 1360.1,910.4 1357.3,909.0 662.6,502.0 660.1,500.3 658.6,498.4 657.9,496.5 658.1,494.4 659.2,492.3 661.1,490.0" fill="url(#gPlate)" stroke="#1a1917" stroke-width="0.9" stroke-linejoin="round" />
<polyline points="658.8,492.3 842.2,316.1 845.5,313.4 848.7,311.5 851.8,310.3 854.9,309.9 858.0,310.3 861.1,311.4 1544.4,656.8" fill="none" stroke="#151412" stroke-width="1.9" stroke-linejoin="round" stroke-linecap="round" />
<line x1="727.0" y1="379.0" x2="753.0" y2="391.5" stroke="#0a0a0a" stroke-width="0.9" />
<line x1="629.0" y1="472.0" x2="656.5" y2="485.5" stroke="#0a0a0a" stroke-width="0.9" />
<line x1="1470.6" y1="781.8" x2="1508.0" y2="801.5" stroke="#0a0a0a" stroke-width="0.9" />
<line x1="1376.2" y1="907.5" x2="1413.8" y2="930.0" stroke="#0a0a0a" stroke-width="0.9" />
<polygon points="871.6,335.6 873.0,334.7 874.4,334.5 876.0,335.0 900.7,347.5 901.8,348.4 902.0,349.5 901.2,350.7 879.0,372.6 877.6,373.5 876.2,373.7 874.6,373.2 849.9,360.4 848.8,359.5 848.6,358.4 849.5,357.2" fill="none" stroke="#0e0d0c" stroke-width="2.83" stroke-linejoin="round"/>
<polygon points="871.6,335.6 873.0,334.7 874.4,334.5 876.0,335.0 900.7,347.5 901.8,348.4 902.0,349.5 901.2,350.7 879.0,372.6 877.6,373.5 876.2,373.7 874.6,373.2 849.9,360.4 848.8,359.5 848.6,358.4 849.5,357.2" fill="none" stroke="#8a867c" stroke-width="0.64" stroke-linejoin="round"/>
<polygon points="854.9,358.3 856.6,352.7 857.4,351.5 867.6,341.6 868.9,340.7 870.3,340.5 871.7,340.9 887.7,349.1 888.8,350.0 891.6,353.5 891.7,354.3 891.1,355.3 877.5,368.7 876.4,369.4 875.3,369.6 874.0,369.2 855.9,359.8 855.0,359.1" fill="#45443f" stroke="#0c0c0b" stroke-width="1.3" stroke-linejoin="round" />
<polygon points="873.9,363.0 878.3,362.4 877.9,368.8 873.9,369.3" fill="#56544e" />
<polygon points="867.6,341.6 868.9,340.7 870.3,340.5 871.7,340.9 887.7,349.1 888.8,350.0 888.9,350.9 888.2,352.1 877.9,362.2 876.6,363.0 875.3,363.3 873.8,362.8 857.8,354.5 856.7,353.7 856.6,352.7 857.4,351.5" fill="url(#gKey)" stroke="#121110" stroke-width="1.0" stroke-linejoin="round" />
<polygon points="906.3,353.4 907.6,352.4 909.1,352.2 910.7,352.7 935.8,365.4 937.0,366.4 937.2,367.5 936.3,368.7 914.3,390.8 912.9,391.8 911.4,392.0 909.8,391.5 884.7,378.4 883.5,377.5 883.4,376.4 884.2,375.2" fill="none" stroke="#0e0d0c" stroke-width="2.88" stroke-linejoin="round"/>
<polygon points="906.3,353.4 907.6,352.4 909.1,352.2 910.7,352.7 935.8,365.4 937.0,366.4 937.2,367.5 936.3,368.7 914.3,390.8 912.9,391.8 911.4,392.0 909.8,391.5 884.7,378.4 883.5,377.5 883.4,376.4 884.2,375.2" fill="none" stroke="#8a867c" stroke-width="0.65" stroke-linejoin="round"/>
<polygon points="889.7,376.3 891.3,370.6 892.1,369.5 902.3,359.4 903.6,358.5 905.0,358.3 906.5,358.7 922.8,367.0 923.8,367.9 926.7,371.5 926.8,372.4 926.2,373.3 912.6,386.9 911.5,387.7 910.4,387.8 909.1,387.5 890.7,377.9 889.8,377.2" fill="#45443f" stroke="#0c0c0b" stroke-width="1.3" stroke-linejoin="round" />
<polygon points="908.9,381.1 913.5,380.6 913.1,387.1 909.0,387.6" fill="#56544e" />
<polygon points="902.3,359.4 903.6,358.5 905.0,358.3 906.5,358.7 922.8,367.0 923.8,367.9 924.0,368.9 923.2,370.1 913.0,380.3 911.8,381.2 910.4,381.4 908.9,380.9 892.6,372.5 891.5,371.6 891.3,370.6 892.1,369.5" fill="url(#gKey)" stroke="#121110" stroke-width="1.0" stroke-linejoin="round" />
<polygon points="941.5,371.4 942.9,370.4 944.5,370.2 946.1,370.7 971.6,383.7 972.8,384.6 973.0,385.8 972.2,387.0 950.2,409.4 948.8,410.4 947.3,410.7 945.7,410.2 920.1,396.8 918.9,395.9 918.7,394.8 919.5,393.5" fill="none" stroke="#0e0d0c" stroke-width="2.93" stroke-linejoin="round"/>
<polygon points="941.5,371.4 942.9,370.4 944.5,370.2 946.1,370.7 971.6,383.7 972.8,384.6 973.0,385.8 972.2,387.0 950.2,409.4 948.8,410.4 947.3,410.7 945.7,410.2 920.1,396.8 918.9,395.9 918.7,394.8 919.5,393.5" fill="none" stroke="#8a867c" stroke-width="0.67" stroke-linejoin="round"/>
<polygon points="925.1,394.7 926.7,388.9 927.5,387.7 937.6,377.5 938.9,376.6 940.4,376.3 941.9,376.8 958.5,385.3 959.6,386.2 962.5,389.9 962.6,390.7 961.9,391.7 948.4,405.5 947.3,406.2 946.2,406.4 944.9,406.0 926.1,396.3 925.2,395.6" fill="#45443f" stroke="#0c0c0b" stroke-width="1.3" stroke-linejoin="round" />
<polygon points="944.6,399.6 949.3,399.0 948.9,405.6 944.8,406.2" fill="#56544e" />
<polygon points="937.6,377.5 938.9,376.6 940.4,376.3 941.9,376.8 958.5,385.3 959.6,386.2 959.7,387.2 959.0,388.4 948.8,398.7 947.5,399.6 946.1,399.9 944.6,399.4 928.0,390.8 926.9,389.9 926.7,388.9 927.5,387.7" fill="url(#gKey)" stroke="#121110" stroke-width="1.0" stroke-linejoin="round" />
<polygon points="977.5,389.8 978.9,388.8 980.4,388.5 982.1,389.0 1008.1,402.3 1009.3,403.3 1009.5,404.4 1008.7,405.7 986.8,428.4 985.4,429.4 983.9,429.7 982.2,429.1 956.1,415.6 954.9,414.6 954.7,413.5 955.6,412.2" fill="none" stroke="#0e0d0c" stroke-width="2.99" stroke-linejoin="round"/>
<polygon points="977.5,389.8 978.9,388.8 980.4,388.5 982.1,389.0 1008.1,402.3 1009.3,403.3 1009.5,404.4 1008.7,405.7 986.8,428.4 985.4,429.4 983.9,429.7 982.2,429.1 956.1,415.6 954.9,414.6 954.7,413.5 955.6,412.2" fill="none" stroke="#8a867c" stroke-width="0.68" stroke-linejoin="round"/>
<polygon points="961.1,413.4 962.8,407.5 963.6,406.3 973.6,396.0 975.0,395.0 976.4,394.8 977.9,395.3 994.8,403.9 996.0,404.8 998.9,408.5 999.0,409.4 998.4,410.5 984.9,424.4 983.8,425.2 982.6,425.4 981.3,425.0 962.2,415.1 961.2,414.3" fill="#45443f" stroke="#0c0c0b" stroke-width="1.3" stroke-linejoin="round" />
<polygon points="981.0,418.4 985.7,417.8 985.4,424.6 981.2,425.1" fill="#56544e" />
<polygon points="973.6,396.0 975.0,395.0 976.4,394.8 977.9,395.3 994.8,403.9 996.0,404.8 996.1,405.9 995.3,407.1 985.3,417.5 984.0,418.4 982.5,418.7 981.0,418.2 964.1,409.5 962.9,408.5 962.8,407.5 963.6,406.3" fill="url(#gKey)" stroke="#121110" stroke-width="1.0" stroke-linejoin="round" />
<polygon points="1014.1,408.5 1015.5,407.5 1017.1,407.2 1018.8,407.7 1045.3,421.2 1046.5,422.2 1046.7,423.4 1045.9,424.7 1024.1,447.7 1022.7,448.8 1021.1,449.0 1019.4,448.5 992.8,434.7 991.6,433.7 991.4,432.5 992.3,431.2" fill="none" stroke="#0e0d0c" stroke-width="3.04" stroke-linejoin="round"/>
<polygon points="1014.1,408.5 1015.5,407.5 1017.1,407.2 1018.8,407.7 1045.3,421.2 1046.5,422.2 1046.7,423.4 1045.9,424.7 1024.1,447.7 1022.7,448.8 1021.1,449.0 1019.4,448.5 992.8,434.7 991.6,433.7 991.4,432.5 992.3,431.2" fill="none" stroke="#8a867c" stroke-width="0.69" stroke-linejoin="round"/>
<polygon points="997.8,432.5 999.5,426.4 1000.3,425.2 1010.3,414.8 1011.6,413.8 1013.1,413.6 1014.7,414.0 1031.9,422.8 1033.0,423.8 1036.0,427.6 1036.1,428.5 1035.5,429.5 1022.0,443.6 1020.9,444.5 1019.7,444.7 1018.4,444.3 998.9,434.2 998.0,433.4" fill="#45443f" stroke="#0c0c0b" stroke-width="1.3" stroke-linejoin="round" />
<polygon points="1018.1,437.5 1022.9,437.0 1022.6,443.8 1018.3,444.4" fill="#56544e" />
<polygon points="1010.3,414.8 1011.6,413.8 1013.1,413.6 1014.7,414.0 1031.9,422.8 1033.0,423.8 1033.2,424.9 1032.4,426.1 1022.4,436.6 1021.1,437.6 1019.6,437.8 1018.0,437.4 1000.8,428.5 999.7,427.5 999.5,426.4 1000.3,425.2" fill="url(#gKey)" stroke="#121110" stroke-width="1.0" stroke-linejoin="round" />
<polygon points="1051.4,427.6 1052.8,426.5 1054.4,426.2 1056.1,426.8 1083.2,440.5 1084.4,441.5 1084.6,442.7 1083.8,444.1 1062.1,467.4 1060.6,468.5 1059.1,468.7 1057.4,468.2 1030.3,454.1 1029.0,453.1 1028.8,451.9 1029.7,450.5" fill="none" stroke="#0e0d0c" stroke-width="3.10" stroke-linejoin="round"/>
<polygon points="1051.4,427.6 1052.8,426.5 1054.4,426.2 1056.1,426.8 1083.2,440.5 1084.4,441.5 1084.6,442.7 1083.8,444.1 1062.1,467.4 1060.6,468.5 1059.1,468.7 1057.4,468.2 1030.3,454.1 1029.0,453.1 1028.8,451.9 1029.7,450.5" fill="none" stroke="#8a867c" stroke-width="0.71" stroke-linejoin="round"/>
<polygon points="1035.2,451.9 1036.9,445.8 1037.7,444.5 1047.6,433.9 1049.0,432.9 1050.5,432.7 1052.1,433.2 1069.6,442.1 1070.8,443.1 1073.7,447.0 1073.9,447.9 1073.3,449.0 1059.9,463.3 1058.8,464.1 1057.6,464.3 1056.2,463.9 1036.4,453.6 1035.4,452.8" fill="#45443f" stroke="#0c0c0b" stroke-width="1.3" stroke-linejoin="round" />
<polygon points="1055.9,457.1 1060.8,456.5 1060.5,463.5 1056.1,464.1" fill="#56544e" />
<polygon points="1047.6,433.9 1049.0,432.9 1050.5,432.7 1052.1,433.2 1069.6,442.1 1070.8,443.1 1071.0,444.2 1070.2,445.5 1060.2,456.1 1058.9,457.1 1057.4,457.4 1055.8,456.9 1038.3,447.8 1037.1,446.9 1036.9,445.8 1037.7,444.5" fill="url(#gKey)" stroke="#121110" stroke-width="1.0" stroke-linejoin="round" />
<polygon points="1089.4,447.0 1090.9,445.9 1092.5,445.6 1094.2,446.2 1121.8,460.2 1123.1,461.2 1123.3,462.4 1122.4,463.9 1100.8,487.5 1099.4,488.6 1097.8,488.8 1096.0,488.3 1068.4,473.9 1067.1,472.9 1066.9,471.7 1067.8,470.3" fill="none" stroke="#0e0d0c" stroke-width="3.16" stroke-linejoin="round"/>
<polygon points="1089.4,447.0 1090.9,445.9 1092.5,445.6 1094.2,446.2 1121.8,460.2 1123.1,461.2 1123.3,462.4 1122.4,463.9 1100.8,487.5 1099.4,488.6 1097.8,488.8 1096.0,488.3 1068.4,473.9 1067.1,472.9 1066.9,471.7 1067.8,470.3" fill="none" stroke="#8a867c" stroke-width="0.72" stroke-linejoin="round"/>
<polygon points="1073.3,471.7 1075.0,465.4 1075.8,464.1 1085.7,453.5 1087.1,452.5 1088.6,452.2 1090.2,452.7 1108.1,461.8 1109.3,462.8 1112.3,466.8 1112.4,467.7 1111.8,468.8 1098.5,483.3 1097.4,484.1 1096.1,484.4 1094.8,483.9 1074.5,473.5 1073.5,472.6" fill="#45443f" stroke="#0c0c0b" stroke-width="1.3" stroke-linejoin="round" />
<polygon points="1094.4,477.0 1099.4,476.4 1099.1,483.5 1094.6,484.1" fill="#56544e" />
<polygon points="1085.7,453.5 1087.1,452.5 1088.6,452.2 1090.2,452.7 1108.1,461.8 1109.3,462.8 1109.5,463.9 1108.7,465.3 1098.8,476.0 1097.4,477.0 1096.0,477.3 1094.3,476.8 1076.4,467.5 1075.2,466.6 1075.0,465.4 1075.8,464.1" fill="url(#gKey)" stroke="#121110" stroke-width="1.0" stroke-linejoin="round" />
<polygon points="1128.1,466.8 1129.6,465.7 1131.3,465.4 1133.0,465.9 1161.1,480.3 1162.4,481.3 1162.7,482.5 1161.8,484.0 1140.3,507.9 1138.8,509.0 1137.2,509.3 1135.4,508.8 1107.3,494.2 1106.0,493.1 1105.7,491.8 1106.6,490.4" fill="none" stroke="#0e0d0c" stroke-width="3.22" stroke-linejoin="round"/>
<polygon points="1128.1,466.8 1129.6,465.7 1131.3,465.4 1133.0,465.9 1161.1,480.3 1162.4,481.3 1162.7,482.5 1161.8,484.0 1140.3,507.9 1138.8,509.0 1137.2,509.3 1135.4,508.8 1107.3,494.2 1106.0,493.1 1105.7,491.8 1106.6,490.4" fill="none" stroke="#8a867c" stroke-width="0.73" stroke-linejoin="round"/>
<polygon points="1112.2,491.9 1113.9,485.5 1114.7,484.1 1124.5,473.4 1125.9,472.3 1127.4,472.1 1129.1,472.6 1147.3,481.9 1148.5,482.9 1151.5,486.9 1151.7,487.9 1151.0,489.0 1137.8,503.7 1136.7,504.6 1135.4,504.8 1134.0,504.4 1113.4,493.7 1112.4,492.8" fill="#45443f" stroke="#0c0c0b" stroke-width="1.3" stroke-linejoin="round" />
<polygon points="1133.6,497.3 1138.7,496.7 1138.5,503.9 1133.9,504.5" fill="#56544e" />
<polygon points="1124.5,473.4 1125.9,472.3 1127.4,472.1 1129.1,472.6 1147.3,481.9 1148.5,482.9 1148.7,484.0 1147.9,485.4 1138.1,496.3 1136.7,497.3 1135.2,497.6 1133.6,497.1 1115.3,487.6 1114.1,486.7 1113.9,485.5 1114.7,484.1" fill="url(#gKey)" stroke="#121110" stroke-width="1.0" stroke-linejoin="round" />
<polygon points="1167.6,487.0 1169.1,485.9 1170.8,485.6 1172.6,486.1 1201.2,500.7 1202.6,501.8 1202.8,503.0 1201.9,504.5 1180.6,528.8 1179.1,529.9 1177.4,530.2 1175.6,529.7 1146.9,514.8 1145.6,513.7 1145.3,512.4 1146.2,510.9" fill="none" stroke="#0e0d0c" stroke-width="3.29" stroke-linejoin="round"/>
<polygon points="1167.6,487.0 1169.1,485.9 1170.8,485.6 1172.6,486.1 1201.2,500.7 1202.6,501.8 1202.8,503.0 1201.9,504.5 1180.6,528.8 1179.1,529.9 1177.4,530.2 1175.6,529.7 1146.9,514.8 1145.6,513.7 1145.3,512.4 1146.2,510.9" fill="none" stroke="#8a867c" stroke-width="0.75" stroke-linejoin="round"/>
<polygon points="1151.8,512.4 1153.5,505.9 1154.3,504.5 1164.0,493.7 1165.4,492.6 1167.0,492.3 1168.7,492.8 1187.2,502.3 1188.5,503.3 1191.6,507.5 1191.7,508.5 1191.1,509.6 1178.0,524.5 1176.8,525.4 1175.5,525.6 1174.1,525.2 1153.1,514.3 1152.0,513.4" fill="#45443f" stroke="#0c0c0b" stroke-width="1.3" stroke-linejoin="round" />
<polygon points="1173.6,517.9 1178.8,517.3 1178.6,524.7 1174.0,525.3" fill="#56544e" />
<polygon points="1164.0,493.7 1165.4,492.6 1167.0,492.3 1168.7,492.8 1187.2,502.3 1188.5,503.3 1188.7,504.5 1187.9,505.9 1178.2,516.9 1176.8,518.0 1175.3,518.3 1173.6,517.8 1155.0,508.1 1153.7,507.1 1153.5,505.9 1154.3,504.5" fill="url(#gKey)" stroke="#121110" stroke-width="1.0" stroke-linejoin="round" />
<polygon points="1207.9,507.6 1209.4,506.4 1211.1,506.1 1212.9,506.7 1242.1,521.5 1243.5,522.6 1243.7,523.9 1242.9,525.5 1221.6,550.0 1220.1,551.2 1218.4,551.5 1216.6,551.0 1187.3,535.8 1186.0,534.7 1185.7,533.3 1186.6,531.8" fill="none" stroke="#0e0d0c" stroke-width="3.35" stroke-linejoin="round"/>
<polygon points="1207.9,507.6 1209.4,506.4 1211.1,506.1 1212.9,506.7 1242.1,521.5 1243.5,522.6 1243.7,523.9 1242.9,525.5 1221.6,550.0 1220.1,551.2 1218.4,551.5 1216.6,551.0 1187.3,535.8 1186.0,534.7 1185.7,533.3 1186.6,531.8" fill="none" stroke="#8a867c" stroke-width="0.76" stroke-linejoin="round"/>
<polygon points="1192.2,533.4 1193.9,526.8 1194.7,525.4 1204.4,514.4 1205.8,513.3 1207.4,513.0 1209.1,513.5 1228.0,523.2 1229.3,524.2 1232.4,528.4 1232.6,529.5 1231.9,530.7 1218.9,545.7 1217.7,546.6 1216.4,546.9 1214.9,546.4 1193.5,535.3 1192.4,534.4" fill="#45443f" stroke="#0c0c0b" stroke-width="1.3" stroke-linejoin="round" />
<polygon points="1214.4,539.0 1219.7,538.4 1219.6,546.0 1214.8,546.6" fill="#56544e" />
<polygon points="1204.4,514.4 1205.8,513.3 1207.4,513.0 1209.1,513.5 1228.0,523.2 1229.3,524.2 1229.5,525.4 1228.7,526.9 1219.1,538.0 1217.7,539.1 1216.1,539.4 1214.4,538.9 1195.4,529.1 1194.1,528.0 1193.9,526.8 1194.7,525.4" fill="url(#gKey)" stroke="#121110" stroke-width="1.0" stroke-linejoin="round" />
<polygon points="1248.9,528.6 1250.5,527.4 1252.2,527.1 1254.1,527.6 1283.8,542.8 1285.2,543.9 1285.5,545.3 1284.6,546.8 1263.5,571.7 1262.0,572.9 1260.3,573.3 1258.4,572.7 1228.5,557.2 1227.1,556.1 1226.9,554.7 1227.8,553.1" fill="none" stroke="#0e0d0c" stroke-width="3.42" stroke-linejoin="round"/>
<polygon points="1248.9,528.6 1250.5,527.4 1252.2,527.1 1254.1,527.6 1283.8,542.8 1285.2,543.9 1285.5,545.3 1284.6,546.8 1263.5,571.7 1262.0,572.9 1260.3,573.3 1258.4,572.7 1228.5,557.2 1227.1,556.1 1226.9,554.7 1227.8,553.1" fill="none" stroke="#8a867c" stroke-width="0.78" stroke-linejoin="round"/>
<polygon points="1233.4,554.8 1235.1,548.1 1235.9,546.6 1245.5,535.5 1246.9,534.3 1248.5,534.0 1250.3,534.6 1269.6,544.4 1270.9,545.5 1274.0,549.8 1274.2,550.9 1273.5,552.1 1260.6,567.3 1259.4,568.3 1258.1,568.5 1256.6,568.1 1234.7,556.7 1233.6,555.9" fill="#45443f" stroke="#0c0c0b" stroke-width="1.3" stroke-linejoin="round" />
<polygon points="1256.1,560.6 1261.5,559.9 1261.3,567.6 1256.5,568.2" fill="#56544e" />
<polygon points="1245.5,535.5 1246.9,534.3 1248.5,534.0 1250.3,534.6 1269.6,544.4 1270.9,545.5 1271.1,546.7 1270.3,548.2 1260.8,559.4 1259.3,560.6 1257.8,560.9 1256.0,560.4 1236.7,550.4 1235.4,549.3 1235.1,548.1 1235.9,546.6" fill="url(#gKey)" stroke="#121110" stroke-width="1.0" stroke-linejoin="round" />
<polygon points="1290.8,550.0 1292.4,548.8 1294.1,548.4 1296.0,549.0 1326.4,564.5 1327.8,565.6 1328.1,567.0 1327.2,568.6 1306.2,593.8 1304.7,595.1 1303.0,595.5 1301.1,594.9 1270.6,579.0 1269.2,577.9 1268.9,576.5 1269.8,574.9" fill="none" stroke="#0e0d0c" stroke-width="3.49" stroke-linejoin="round"/>
<polygon points="1290.8,550.0 1292.4,548.8 1294.1,548.4 1296.0,549.0 1326.4,564.5 1327.8,565.6 1328.1,567.0 1327.2,568.6 1306.2,593.8 1304.7,595.1 1303.0,595.5 1301.1,594.9 1270.6,579.0 1269.2,577.9 1268.9,576.5 1269.8,574.9" fill="none" stroke="#8a867c" stroke-width="0.79" stroke-linejoin="round"/>
<polygon points="1275.4,576.6 1277.1,569.7 1278.0,568.2 1287.4,557.0 1288.9,555.8 1290.5,555.5 1292.3,556.0 1312.0,566.1 1313.3,567.2 1316.5,571.6 1316.7,572.7 1316.0,574.0 1303.1,589.4 1301.9,590.4 1300.6,590.6 1299.1,590.2 1276.8,578.6 1275.7,577.7" fill="#45443f" stroke="#0c0c0b" stroke-width="1.3" stroke-linejoin="round" />
<polygon points="1298.5,582.5 1304.0,581.9 1303.9,589.7 1299.0,590.3" fill="#56544e" />
<polygon points="1287.4,557.0 1288.9,555.8 1290.5,555.5 1292.3,556.0 1312.0,566.1 1313.3,567.2 1313.6,568.5 1312.8,570.0 1303.3,581.3 1301.9,582.5 1300.2,582.9 1298.5,582.3 1278.7,572.1 1277.4,571.0 1277.1,569.7 1278.0,568.2" fill="url(#gKey)" stroke="#121110" stroke-width="1.0" stroke-linejoin="round" />
<polygon points="1333.5,571.9 1335.1,570.6 1336.8,570.2 1338.8,570.8 1369.8,586.6 1371.2,587.8 1371.5,589.2 1370.7,590.8 1349.8,616.4 1348.3,617.7 1346.5,618.1 1344.6,617.5 1313.5,601.3 1312.0,600.2 1311.7,598.7 1312.6,597.1" fill="none" stroke="#0e0d0c" stroke-width="3.56" stroke-linejoin="round"/>
<polygon points="1333.5,571.9 1335.1,570.6 1336.8,570.2 1338.8,570.8 1369.8,586.6 1371.2,587.8 1371.5,589.2 1370.7,590.8 1349.8,616.4 1348.3,617.7 1346.5,618.1 1344.6,617.5 1313.5,601.3 1312.0,600.2 1311.7,598.7 1312.6,597.1" fill="none" stroke="#8a867c" stroke-width="0.81" stroke-linejoin="round"/>
<polygon points="1318.3,598.9 1320.0,591.9 1320.8,590.3 1330.2,579.0 1331.7,577.8 1333.3,577.4 1335.2,578.0 1355.2,588.2 1356.6,589.3 1359.8,593.9 1360.0,595.0 1359.3,596.3 1346.6,611.9 1345.4,612.9 1344.0,613.2 1342.5,612.7 1319.7,600.9 1318.5,600.0" fill="#45443f" stroke="#0c0c0b" stroke-width="1.3" stroke-linejoin="round" />
<polygon points="1341.8,604.9 1347.5,604.3 1347.4,612.2 1342.4,612.9" fill="#56544e" />
<polygon points="1330.2,579.0 1331.7,577.8 1333.3,577.4 1335.2,578.0 1355.2,588.2 1356.6,589.3 1356.9,590.7 1356.1,592.2 1346.7,603.7 1345.2,604.9 1343.6,605.3 1341.8,604.7 1321.6,594.3 1320.3,593.2 1320.0,591.9 1320.8,590.3" fill="url(#gKey)" stroke="#121110" stroke-width="1.0" stroke-linejoin="round" />
<polygon points="1377.1,594.2 1378.7,592.8 1380.5,592.5 1382.5,593.1 1414.1,609.2 1415.6,610.4 1415.9,611.8 1415.0,613.5 1394.3,639.5 1392.8,640.8 1391.0,641.2 1389.0,640.6 1357.3,624.1 1355.8,622.9 1355.5,621.4 1356.4,619.7" fill="none" stroke="#0e0d0c" stroke-width="3.63" stroke-linejoin="round"/>
<polygon points="1377.1,594.2 1378.7,592.8 1380.5,592.5 1382.5,593.1 1414.1,609.2 1415.6,610.4 1415.9,611.8 1415.0,613.5 1394.3,639.5 1392.8,640.8 1391.0,641.2 1389.0,640.6 1357.3,624.1 1355.8,622.9 1355.5,621.4 1356.4,619.7" fill="none" stroke="#8a867c" stroke-width="0.83" stroke-linejoin="round"/>
<polygon points="1362.1,621.6 1363.8,614.4 1364.6,612.9 1373.9,601.4 1375.4,600.1 1377.0,599.8 1378.9,600.3 1399.4,610.8 1400.8,612.0 1404.0,616.6 1404.2,617.7 1403.5,619.0 1390.9,634.9 1389.7,635.9 1388.3,636.2 1386.7,635.7 1363.5,623.7 1362.3,622.7" fill="#45443f" stroke="#0c0c0b" stroke-width="1.3" stroke-linejoin="round" />
<polygon points="1386.1,627.8 1391.8,627.1 1391.8,635.2 1386.6,635.9" fill="#56544e" />
<polygon points="1373.9,601.4 1375.4,600.1 1377.0,599.8 1378.9,600.3 1399.4,610.8 1400.8,612.0 1401.1,613.3 1400.3,614.9 1391.0,626.5 1389.5,627.8 1387.9,628.1 1386.0,627.6 1365.4,616.9 1364.0,615.8 1363.8,614.4 1364.6,612.9" fill="url(#gKey)" stroke="#121110" stroke-width="1.0" stroke-linejoin="round" />
<polygon points="1469.6,641.5 1471.2,640.1 1473.1,639.7 1475.1,640.3 1508.1,657.1 1509.7,658.3 1510.0,659.9 1509.2,661.7 1488.8,688.4 1487.2,689.8 1485.4,690.2 1483.3,689.6 1450.2,672.4 1448.6,671.1 1448.3,669.6 1449.2,667.8" fill="none" stroke="#0e0d0c" stroke-width="3.79" stroke-linejoin="round"/>
<polygon points="1469.6,641.5 1471.2,640.1 1473.1,639.7 1475.1,640.3 1508.1,657.1 1509.7,658.3 1510.0,659.9 1509.2,661.7 1488.8,688.4 1487.2,689.8 1485.4,690.2 1483.3,689.6 1450.2,672.4 1448.6,671.1 1448.3,669.6 1449.2,667.8" fill="none" stroke="#8a867c" stroke-width="0.86" stroke-linejoin="round"/>
<polygon points="1455.0,669.8 1456.6,662.4 1457.5,660.7 1466.5,649.0 1468.0,647.6 1469.8,647.2 1471.7,647.8 1493.1,658.8 1494.6,659.9 1497.8,664.8 1498.1,666.0 1497.4,667.4 1485.0,683.6 1483.8,684.8 1482.3,685.1 1480.7,684.6 1456.4,672.0 1455.2,671.0" fill="#45443f" stroke="#0c0c0b" stroke-width="1.3" stroke-linejoin="round" />
<polygon points="1479.9,676.3 1485.9,675.6 1486.0,684.1 1480.6,684.8" fill="#56544e" />
<polygon points="1466.5,649.0 1468.0,647.6 1469.8,647.2 1471.7,647.8 1493.1,658.8 1494.6,659.9 1494.9,661.4 1494.1,663.1 1485.0,674.9 1483.5,676.3 1481.8,676.7 1479.9,676.1 1458.4,665.0 1456.9,663.8 1456.6,662.4 1457.5,660.7" fill="url(#gKey)" stroke="#121110" stroke-width="1.0" stroke-linejoin="round" />
<polygon points="851.3,373.2 852.7,372.3 854.2,372.1 855.8,372.6 880.6,385.5 881.8,386.5 881.9,387.5 881.1,388.8 858.5,411.2 857.1,412.1 855.7,412.4 854.1,411.9 829.2,398.6 828.1,397.7 827.9,396.6 828.7,395.4" fill="none" stroke="#0e0d0c" stroke-width="2.86" stroke-linejoin="round"/>
<polygon points="851.3,373.2 852.7,372.3 854.2,372.1 855.8,372.6 880.6,385.5 881.8,386.5 881.9,387.5 881.1,388.8 858.5,411.2 857.1,412.1 855.7,412.4 854.1,411.9 829.2,398.6 828.1,397.7 827.9,396.6 828.7,395.4" fill="none" stroke="#8a867c" stroke-width="0.65" stroke-linejoin="round"/>
<polygon points="834.3,396.5 836.0,390.7 836.8,389.6 847.2,379.3 848.5,378.5 849.9,378.2 851.4,378.7 867.5,387.2 868.5,388.0 871.4,391.6 871.6,392.5 870.9,393.4 857.0,407.2 855.9,407.9 854.8,408.1 853.5,407.7 835.3,398.0 834.4,397.3" fill="#45443f" stroke="#0c0c0b" stroke-width="1.3" stroke-linejoin="round" />
<polygon points="853.4,401.4 857.9,400.8 857.5,407.3 853.4,407.9" fill="#56544e" />
<polygon points="847.2,379.3 848.5,378.5 849.9,378.2 851.4,378.7 867.5,387.2 868.5,388.0 868.7,389.0 867.9,390.2 857.5,400.6 856.2,401.5 854.8,401.7 853.3,401.2 837.2,392.6 836.1,391.8 836.0,390.7 836.8,389.6" fill="url(#gKey)" stroke="#121110" stroke-width="1.0" stroke-linejoin="round" />
<polygon points="886.2,391.5 887.6,390.6 889.1,390.3 890.7,390.8 916.0,404.0 917.2,405.0 917.4,406.1 916.6,407.4 894.0,430.1 892.6,431.0 891.1,431.3 889.5,430.7 864.2,417.2 863.0,416.3 862.9,415.2 863.7,413.9" fill="none" stroke="#0e0d0c" stroke-width="2.92" stroke-linejoin="round"/>
<polygon points="886.2,391.5 887.6,390.6 889.1,390.3 890.7,390.8 916.0,404.0 917.2,405.0 917.4,406.1 916.6,407.4 894.0,430.1 892.6,431.0 891.1,431.3 889.5,430.7 864.2,417.2 863.0,416.3 862.9,415.2 863.7,413.9" fill="none" stroke="#8a867c" stroke-width="0.66" stroke-linejoin="round"/>
<polygon points="869.3,415.1 871.0,409.3 871.8,408.1 882.2,397.7 883.5,396.8 884.9,396.6 886.4,397.1 902.8,405.7 903.9,406.6 906.8,410.2 906.9,411.1 906.3,412.1 892.4,426.0 891.3,426.8 890.1,426.9 888.9,426.5 870.3,416.7 869.4,415.9" fill="#45443f" stroke="#0c0c0b" stroke-width="1.3" stroke-linejoin="round" />
<polygon points="888.7,420.1 893.3,419.6 892.9,426.2 888.8,426.7" fill="#56544e" />
<polygon points="882.2,397.7 883.5,396.8 884.9,396.6 886.4,397.1 902.8,405.7 903.9,406.6 904.0,407.6 903.3,408.8 892.8,419.3 891.5,420.2 890.1,420.4 888.6,419.9 872.2,411.2 871.1,410.3 871.0,409.3 871.8,408.1" fill="url(#gKey)" stroke="#121110" stroke-width="1.0" stroke-linejoin="round" />
<polygon points="921.8,410.1 923.2,409.2 924.7,408.9 926.4,409.4 952.1,422.9 953.3,423.9 953.5,425.0 952.7,426.3 930.2,449.3 928.8,450.3 927.3,450.5 925.7,450.0 899.9,436.2 898.7,435.3 898.5,434.1 899.3,432.8" fill="none" stroke="#0e0d0c" stroke-width="2.97" stroke-linejoin="round"/>
<polygon points="921.8,410.1 923.2,409.2 924.7,408.9 926.4,409.4 952.1,422.9 953.3,423.9 953.5,425.0 952.7,426.3 930.2,449.3 928.8,450.3 927.3,450.5 925.7,450.0 899.9,436.2 898.7,435.3 898.5,434.1 899.3,432.8" fill="none" stroke="#8a867c" stroke-width="0.68" stroke-linejoin="round"/>
<polygon points="904.9,434.0 906.6,428.1 907.4,426.9 917.8,416.4 919.1,415.5 920.5,415.3 922.1,415.8 938.8,424.5 939.9,425.4 942.8,429.2 942.9,430.0 942.3,431.0 928.5,445.2 927.4,446.0 926.2,446.1 924.9,445.7 906.0,435.7 905.1,434.9" fill="#45443f" stroke="#0c0c0b" stroke-width="1.3" stroke-linejoin="round" />
<polygon points="924.7,439.2 929.4,438.6 929.0,445.4 924.8,445.9" fill="#56544e" />
<polygon points="917.8,416.4 919.1,415.5 920.5,415.3 922.1,415.8 938.8,424.5 939.9,425.4 940.0,426.5 939.3,427.7 928.9,438.3 927.6,439.2 926.2,439.5 924.6,439.0 907.9,430.1 906.8,429.2 906.6,428.1 907.4,426.9" fill="url(#gKey)" stroke="#121110" stroke-width="1.0" stroke-linejoin="round" />
<polygon points="958.0,429.1 959.4,428.1 961.0,427.9 962.7,428.4 988.9,442.1 990.1,443.1 990.3,444.2 989.5,445.6 967.1,468.9 965.7,469.9 964.2,470.1 962.5,469.6 936.2,455.6 935.0,454.6 934.8,453.4 935.6,452.1" fill="none" stroke="#0e0d0c" stroke-width="3.03" stroke-linejoin="round"/>
<polygon points="958.0,429.1 959.4,428.1 961.0,427.9 962.7,428.4 988.9,442.1 990.1,443.1 990.3,444.2 989.5,445.6 967.1,468.9 965.7,469.9 964.2,470.1 962.5,469.6 936.2,455.6 935.0,454.6 934.8,453.4 935.6,452.1" fill="none" stroke="#8a867c" stroke-width="0.69" stroke-linejoin="round"/>
<polygon points="941.3,453.4 943.0,447.3 943.8,446.1 954.0,435.5 955.4,434.6 956.8,434.3 958.4,434.8 975.4,443.7 976.5,444.7 979.5,448.5 979.7,449.4 979.0,450.4 965.2,464.7 964.1,465.5 962.9,465.7 961.6,465.3 942.3,455.1 941.4,454.3" fill="#45443f" stroke="#0c0c0b" stroke-width="1.3" stroke-linejoin="round" />
<polygon points="961.3,458.6 966.1,458.0 965.8,464.9 961.5,465.4" fill="#56544e" />
<polygon points="954.0,435.5 955.4,434.6 956.8,434.3 958.4,434.8 975.4,443.7 976.5,444.7 976.7,445.8 975.9,447.0 965.6,457.7 964.3,458.7 962.9,458.9 961.3,458.4 944.3,449.4 943.1,448.4 943.0,447.3 943.8,446.1" fill="url(#gKey)" stroke="#121110" stroke-width="1.0" stroke-linejoin="round" />
<polygon points="994.9,448.5 996.4,447.4 997.9,447.2 999.6,447.7 1026.4,461.7 1027.6,462.7 1027.8,463.9 1027.0,465.2 1004.7,488.8 1003.3,489.9 1001.7,490.1 1000.0,489.6 973.2,475.3 972.0,474.3 971.8,473.1 972.6,471.8" fill="none" stroke="#0e0d0c" stroke-width="3.09" stroke-linejoin="round"/>
<polygon points="994.9,448.5 996.4,447.4 997.9,447.2 999.6,447.7 1026.4,461.7 1027.6,462.7 1027.8,463.9 1027.0,465.2 1004.7,488.8 1003.3,489.9 1001.7,490.1 1000.0,489.6 973.2,475.3 972.0,474.3 971.8,473.1 972.6,471.8" fill="none" stroke="#8a867c" stroke-width="0.70" stroke-linejoin="round"/>
<polygon points="978.3,473.1 980.0,466.9 980.8,465.7 991.0,454.9 992.3,454.0 993.8,453.7 995.4,454.2 1012.8,463.3 1013.9,464.3 1016.9,468.1 1017.1,469.1 1016.4,470.1 1002.7,484.6 1001.6,485.4 1000.4,485.6 999.0,485.2 979.4,474.8 978.4,474.0" fill="#45443f" stroke="#0c0c0b" stroke-width="1.3" stroke-linejoin="round" />
<polygon points="998.7,478.4 1003.6,477.8 1003.3,484.8 998.9,485.4" fill="#56544e" />
<polygon points="991.0,454.9 992.3,454.0 993.8,453.7 995.4,454.2 1012.8,463.3 1013.9,464.3 1014.1,465.4 1013.3,466.7 1003.1,477.5 1001.7,478.5 1000.3,478.7 998.7,478.2 981.3,469.0 980.1,468.0 980.0,466.9 980.8,465.7" fill="url(#gKey)" stroke="#121110" stroke-width="1.0" stroke-linejoin="round" />
<polygon points="1032.5,468.2 1034.0,467.1 1035.6,466.8 1037.3,467.4 1064.6,481.6 1065.8,482.6 1066.1,483.9 1065.2,485.2 1043.0,509.2 1041.6,510.3 1040.0,510.5 1038.3,510.0 1010.9,495.4 1009.7,494.4 1009.5,493.2 1010.3,491.8" fill="none" stroke="#0e0d0c" stroke-width="3.14" stroke-linejoin="round"/>
<polygon points="1032.5,468.2 1034.0,467.1 1035.6,466.8 1037.3,467.4 1064.6,481.6 1065.8,482.6 1066.1,483.9 1065.2,485.2 1043.0,509.2 1041.6,510.3 1040.0,510.5 1038.3,510.0 1010.9,495.4 1009.7,494.4 1009.5,493.2 1010.3,491.8" fill="none" stroke="#8a867c" stroke-width="0.71" stroke-linejoin="round"/>
<polygon points="1016.0,493.1 1017.7,486.9 1018.5,485.6 1028.7,474.8 1030.0,473.7 1031.5,473.5 1033.1,474.0 1050.8,483.3 1052.0,484.2 1055.0,488.2 1055.2,489.1 1054.5,490.2 1040.9,504.9 1039.7,505.7 1038.5,506.0 1037.2,505.5 1017.1,494.9 1016.1,494.1" fill="#45443f" stroke="#0c0c0b" stroke-width="1.3" stroke-linejoin="round" />
<polygon points="1036.8,498.6 1041.8,498.0 1041.5,505.1 1037.0,505.7" fill="#56544e" />
<polygon points="1028.7,474.8 1030.0,473.7 1031.5,473.5 1033.1,474.0 1050.8,483.3 1052.0,484.2 1052.2,485.4 1051.4,486.7 1041.2,497.6 1039.9,498.6 1038.4,498.9 1036.8,498.4 1019.1,489.0 1017.9,488.0 1017.7,486.9 1018.5,485.6" fill="url(#gKey)" stroke="#121110" stroke-width="1.0" stroke-linejoin="round" />
<polygon points="1070.9,488.3 1072.3,487.2 1074.0,486.9 1075.7,487.4 1103.5,501.9 1104.8,503.0 1105.0,504.2 1104.2,505.7 1082.1,529.9 1080.6,531.0 1079.0,531.3 1077.3,530.8 1049.4,515.9 1048.1,514.8 1047.9,513.6 1048.8,512.2" fill="none" stroke="#0e0d0c" stroke-width="3.21" stroke-linejoin="round"/>
<polygon points="1070.9,488.3 1072.3,487.2 1074.0,486.9 1075.7,487.4 1103.5,501.9 1104.8,503.0 1105.0,504.2 1104.2,505.7 1082.1,529.9 1080.6,531.0 1079.0,531.3 1077.3,530.8 1049.4,515.9 1048.1,514.8 1047.9,513.6 1048.8,512.2" fill="none" stroke="#8a867c" stroke-width="0.73" stroke-linejoin="round"/>
<polygon points="1054.4,513.6 1056.1,507.2 1057.0,505.9 1067.0,494.9 1068.4,493.9 1069.9,493.6 1071.6,494.2 1089.6,503.6 1090.8,504.6 1093.9,508.6 1094.0,509.6 1093.4,510.7 1079.8,525.6 1078.7,526.4 1077.4,526.7 1076.0,526.2 1055.6,515.4 1054.6,514.6" fill="#45443f" stroke="#0c0c0b" stroke-width="1.3" stroke-linejoin="round" />
<polygon points="1075.6,519.2 1080.7,518.6 1080.4,525.8 1075.9,526.4" fill="#56544e" />
<polygon points="1067.0,494.9 1068.4,493.9 1069.9,493.6 1071.6,494.2 1089.6,503.6 1090.8,504.6 1091.0,505.8 1090.2,507.1 1080.1,518.2 1078.8,519.2 1077.2,519.5 1075.6,519.0 1057.5,509.4 1056.3,508.4 1056.1,507.2 1057.0,505.9" fill="url(#gKey)" stroke="#121110" stroke-width="1.0" stroke-linejoin="round" />
<polygon points="1109.9,508.7 1111.4,507.6 1113.1,507.3 1114.9,507.9 1143.2,522.7 1144.5,523.7 1144.8,525.0 1143.9,526.5 1121.9,551.1 1120.4,552.2 1118.8,552.5 1117.0,551.9 1088.6,536.8 1087.3,535.7 1087.1,534.4 1087.9,533.0" fill="none" stroke="#0e0d0c" stroke-width="3.27" stroke-linejoin="round"/>
<polygon points="1109.9,508.7 1111.4,507.6 1113.1,507.3 1114.9,507.9 1143.2,522.7 1144.5,523.7 1144.8,525.0 1143.9,526.5 1121.9,551.1 1120.4,552.2 1118.8,552.5 1117.0,551.9 1088.6,536.8 1087.3,535.7 1087.1,534.4 1087.9,533.0" fill="none" stroke="#8a867c" stroke-width="0.74" stroke-linejoin="round"/>
<polygon points="1093.6,534.4 1095.3,528.0 1096.2,526.6 1106.2,515.5 1107.6,514.5 1109.1,514.2 1110.8,514.7 1129.2,524.3 1130.4,525.3 1133.5,529.5 1133.7,530.5 1133.0,531.6 1119.5,546.7 1118.3,547.6 1117.1,547.8 1115.7,547.3 1094.8,536.3 1093.8,535.4" fill="#45443f" stroke="#0c0c0b" stroke-width="1.3" stroke-linejoin="round" />
<polygon points="1115.2,540.1 1120.4,539.5 1120.2,546.9 1115.5,547.5" fill="#56544e" />
<polygon points="1106.2,515.5 1107.6,514.5 1109.1,514.2 1110.8,514.7 1129.2,524.3 1130.4,525.3 1130.6,526.5 1129.8,527.9 1119.8,539.1 1118.4,540.2 1116.9,540.5 1115.2,539.9 1096.8,530.2 1095.6,529.2 1095.3,528.0 1096.2,526.6" fill="url(#gKey)" stroke="#121110" stroke-width="1.0" stroke-linejoin="round" />
<polygon points="1149.8,529.6 1151.3,528.5 1153.0,528.1 1154.8,528.7 1183.7,543.8 1185.0,544.9 1185.3,546.2 1184.4,547.7 1162.6,572.6 1161.1,573.8 1159.4,574.1 1157.6,573.5 1128.6,558.1 1127.3,557.0 1127.0,555.7 1127.9,554.2" fill="none" stroke="#0e0d0c" stroke-width="3.33" stroke-linejoin="round"/>
<polygon points="1149.8,529.6 1151.3,528.5 1153.0,528.1 1154.8,528.7 1183.7,543.8 1185.0,544.9 1185.3,546.2 1184.4,547.7 1162.6,572.6 1161.1,573.8 1159.4,574.1 1157.6,573.5 1128.6,558.1 1127.3,557.0 1127.0,555.7 1127.9,554.2" fill="none" stroke="#8a867c" stroke-width="0.76" stroke-linejoin="round"/>
<polygon points="1133.6,555.7 1135.3,549.1 1136.1,547.7 1146.1,536.5 1147.5,535.4 1149.1,535.1 1150.8,535.7 1169.5,545.5 1170.8,546.5 1173.9,550.7 1174.1,551.7 1173.4,552.9 1160.0,568.2 1158.8,569.1 1157.5,569.3 1156.1,568.9 1134.8,557.6 1133.8,556.7" fill="#45443f" stroke="#0c0c0b" stroke-width="1.3" stroke-linejoin="round" />
<polygon points="1155.6,561.5 1160.9,560.9 1160.7,568.4 1155.9,569.1" fill="#56544e" />
<polygon points="1146.1,536.5 1147.5,535.4 1149.1,535.1 1150.8,535.7 1169.5,545.5 1170.8,546.5 1171.0,547.7 1170.2,549.2 1160.2,560.5 1158.8,561.6 1157.3,561.9 1155.6,561.3 1136.8,551.4 1135.5,550.3 1135.3,549.1 1136.1,547.7" fill="url(#gKey)" stroke="#121110" stroke-width="1.0" stroke-linejoin="round" />
<polygon points="1190.4,550.9 1191.9,549.7 1193.6,549.4 1195.5,550.0 1225.0,565.4 1226.4,566.5 1226.6,567.8 1225.7,569.4 1204.0,594.6 1202.5,595.9 1200.8,596.2 1199.0,595.6 1169.4,579.8 1168.0,578.7 1167.8,577.4 1168.6,575.8" fill="none" stroke="#0e0d0c" stroke-width="3.40" stroke-linejoin="round"/>
<polygon points="1190.4,550.9 1191.9,549.7 1193.6,549.4 1195.5,550.0 1225.0,565.4 1226.4,566.5 1226.6,567.8 1225.7,569.4 1204.0,594.6 1202.5,595.9 1200.8,596.2 1199.0,595.6 1169.4,579.8 1168.0,578.7 1167.8,577.4 1168.6,575.8" fill="none" stroke="#8a867c" stroke-width="0.77" stroke-linejoin="round"/>
<polygon points="1174.4,577.4 1176.1,570.7 1176.9,569.2 1186.8,557.9 1188.2,556.8 1189.8,556.5 1191.5,557.0 1210.6,567.0 1211.9,568.1 1215.1,572.4 1215.3,573.4 1214.6,574.7 1201.3,590.1 1200.1,591.1 1198.8,591.3 1197.3,590.8 1175.6,579.3 1174.6,578.5" fill="#45443f" stroke="#0c0c0b" stroke-width="1.3" stroke-linejoin="round" />
<polygon points="1196.8,583.4 1202.2,582.7 1202.0,590.4 1197.2,591.0" fill="#56544e" />
<polygon points="1186.8,557.9 1188.2,556.8 1189.8,556.5 1191.5,557.0 1210.6,567.0 1211.9,568.1 1212.2,569.4 1211.4,570.8 1201.5,582.3 1200.1,583.4 1198.5,583.7 1196.8,583.1 1177.6,573.0 1176.3,571.9 1176.1,570.7 1176.9,569.2" fill="url(#gKey)" stroke="#121110" stroke-width="1.0" stroke-linejoin="round" />
<polygon points="1231.8,572.6 1233.4,571.4 1235.1,571.1 1237.0,571.7 1267.1,587.3 1268.5,588.5 1268.8,589.9 1267.9,591.5 1246.3,617.1 1244.8,618.3 1243.1,618.7 1241.2,618.1 1211.0,602.0 1209.6,600.8 1209.3,599.5 1210.2,597.9" fill="none" stroke="#0e0d0c" stroke-width="3.47" stroke-linejoin="round"/>
<polygon points="1231.8,572.6 1233.4,571.4 1235.1,571.1 1237.0,571.7 1267.1,587.3 1268.5,588.5 1268.8,589.9 1267.9,591.5 1246.3,617.1 1244.8,618.3 1243.1,618.7 1241.2,618.1 1211.0,602.0 1209.6,600.8 1209.3,599.5 1210.2,597.9" fill="none" stroke="#8a867c" stroke-width="0.79" stroke-linejoin="round"/>
<polygon points="1216.0,599.5 1217.7,592.7 1218.5,591.2 1228.3,579.8 1229.7,578.6 1231.4,578.3 1233.1,578.8 1252.6,589.0 1253.9,590.1 1257.1,594.5 1257.3,595.6 1256.6,596.8 1243.4,612.5 1242.2,613.5 1240.9,613.7 1239.4,613.3 1217.3,601.5 1216.2,600.6" fill="#45443f" stroke="#0c0c0b" stroke-width="1.3" stroke-linejoin="round" />
<polygon points="1238.8,605.6 1244.3,605.0 1244.2,612.8 1239.2,613.4" fill="#56544e" />
<polygon points="1228.3,579.8 1229.7,578.6 1231.4,578.3 1233.1,578.8 1252.6,589.0 1253.9,590.1 1254.2,591.4 1253.4,592.9 1243.6,604.5 1242.2,605.7 1240.6,606.0 1238.8,605.4 1219.2,595.1 1217.9,594.0 1217.7,592.7 1218.5,591.2" fill="url(#gKey)" stroke="#121110" stroke-width="1.0" stroke-linejoin="round" />
<polygon points="1274.1,594.8 1275.7,593.5 1277.4,593.2 1279.4,593.8 1310.1,609.8 1311.5,611.0 1311.8,612.4 1310.9,614.0 1289.5,640.0 1287.9,641.3 1286.2,641.6 1284.2,641.0 1253.5,624.6 1252.0,623.4 1251.7,622.0 1252.6,620.4" fill="none" stroke="#0e0d0c" stroke-width="3.54" stroke-linejoin="round"/>
<polygon points="1274.1,594.8 1275.7,593.5 1277.4,593.2 1279.4,593.8 1310.1,609.8 1311.5,611.0 1311.8,612.4 1310.9,614.0 1289.5,640.0 1287.9,641.3 1286.2,641.6 1284.2,641.0 1253.5,624.6 1252.0,623.4 1251.7,622.0 1252.6,620.4" fill="none" stroke="#8a867c" stroke-width="0.80" stroke-linejoin="round"/>
<polygon points="1258.4,622.1 1260.1,615.1 1261.0,613.6 1270.6,602.0 1272.1,600.8 1273.7,600.5 1275.6,601.1 1295.4,611.5 1296.8,612.6 1300.0,617.1 1300.2,618.2 1299.5,619.5 1286.4,635.3 1285.2,636.3 1283.8,636.6 1282.3,636.1 1259.7,624.2 1258.6,623.2" fill="#45443f" stroke="#0c0c0b" stroke-width="1.3" stroke-linejoin="round" />
<polygon points="1281.7,628.4 1287.3,627.7 1287.2,635.7 1282.2,636.3" fill="#56544e" />
<polygon points="1270.6,602.0 1272.1,600.8 1273.7,600.5 1275.6,601.1 1295.4,611.5 1296.8,612.6 1297.1,613.9 1296.2,615.5 1286.6,627.2 1285.1,628.4 1283.5,628.7 1281.7,628.1 1261.7,617.6 1260.4,616.4 1260.1,615.1 1261.0,613.6" fill="url(#gKey)" stroke="#121110" stroke-width="1.0" stroke-linejoin="round" />
<polygon points="1393.1,657.9 1394.7,656.5 1396.5,656.1 1398.6,656.7 1431.0,673.6 1432.6,674.9 1432.9,676.4 1432.0,678.2 1411.0,705.2 1409.4,706.6 1407.6,707.0 1405.5,706.3 1373.0,689.0 1371.4,687.7 1371.1,686.2 1372.0,684.4" fill="none" stroke="#0e0d0c" stroke-width="3.75" stroke-linejoin="round"/>
<polygon points="1393.1,657.9 1394.7,656.5 1396.5,656.1 1398.6,656.7 1431.0,673.6 1432.6,674.9 1432.9,676.4 1432.0,678.2 1411.0,705.2 1409.4,706.6 1407.6,707.0 1405.5,706.3 1373.0,689.0 1371.4,687.7 1371.1,686.2 1372.0,684.4" fill="none" stroke="#8a867c" stroke-width="0.85" stroke-linejoin="round"/>
<polygon points="1377.9,686.4 1379.6,679.0 1380.4,677.3 1389.8,665.4 1391.3,664.1 1393.1,663.7 1395.0,664.3 1416.0,675.4 1417.4,676.5 1420.7,681.3 1421.0,682.5 1420.3,683.9 1407.4,700.3 1406.2,701.4 1404.8,701.7 1403.2,701.2 1379.3,688.6 1378.1,687.6" fill="#45443f" stroke="#0c0c0b" stroke-width="1.3" stroke-linejoin="round" />
<polygon points="1402.4,693.0 1408.3,692.3 1408.3,700.7 1403.0,701.4" fill="#56544e" />
<polygon points="1389.8,665.4 1391.3,664.1 1393.1,663.7 1395.0,664.3 1416.0,675.4 1417.4,676.5 1417.7,678.0 1416.9,679.6 1407.5,691.7 1406.0,693.0 1404.3,693.4 1402.4,692.8 1381.3,681.6 1379.9,680.4 1379.6,679.0 1380.4,677.3" fill="url(#gKey)" stroke="#121110" stroke-width="1.0" stroke-linejoin="round" />
<polygon points="1438.9,681.9 1440.6,680.5 1442.4,680.1 1444.5,680.7 1477.6,698.0 1479.2,699.3 1479.6,700.8 1478.7,702.7 1457.8,730.1 1456.2,731.5 1454.4,731.9 1452.3,731.3 1419.0,713.5 1417.5,712.2 1417.1,710.7 1418.0,708.9" fill="none" stroke="#0e0d0c" stroke-width="3.83" stroke-linejoin="round"/>
<polygon points="1438.9,681.9 1440.6,680.5 1442.4,680.1 1444.5,680.7 1477.6,698.0 1479.2,699.3 1479.6,700.8 1478.7,702.7 1457.8,730.1 1456.2,731.5 1454.4,731.9 1452.3,731.3 1419.0,713.5 1417.5,712.2 1417.1,710.7 1418.0,708.9" fill="none" stroke="#8a867c" stroke-width="0.87" stroke-linejoin="round"/>
<polygon points="1423.9,710.9 1425.6,703.3 1426.4,701.6 1435.7,689.6 1437.3,688.2 1439.0,687.8 1441.0,688.4 1462.4,699.7 1463.9,700.9 1467.2,705.8 1467.5,707.0 1466.8,708.4 1454.1,725.1 1452.8,726.2 1451.4,726.6 1449.7,726.1 1425.4,713.1 1424.1,712.1" fill="#45443f" stroke="#0c0c0b" stroke-width="1.3" stroke-linejoin="round" />
<polygon points="1449.0,717.7 1455.0,717.0 1455.0,725.6 1449.6,726.3" fill="#56544e" />
<polygon points="1435.7,689.6 1437.3,688.2 1439.0,687.8 1441.0,688.4 1462.4,699.7 1463.9,700.9 1464.2,702.4 1463.4,704.1 1454.1,716.3 1452.6,717.7 1450.8,718.0 1448.9,717.4 1427.4,706.0 1425.9,704.8 1425.6,703.3 1426.4,701.6" fill="url(#gKey)" stroke="#121110" stroke-width="1.0" stroke-linejoin="round" />
<polygon points="799.7,398.8 801.0,397.8 802.5,397.6 804.1,398.1 828.7,411.4 829.9,412.3 830.0,413.4 829.2,414.6 806.0,437.4 804.7,438.3 803.2,438.6 801.6,438.0 777.0,424.5 775.8,423.6 775.7,422.5 776.5,421.3" fill="none" stroke="#0e0d0c" stroke-width="2.86" stroke-linejoin="round"/>
<polygon points="799.7,398.8 801.0,397.8 802.5,397.6 804.1,398.1 828.7,411.4 829.9,412.3 830.0,413.4 829.2,414.6 806.0,437.4 804.7,438.3 803.2,438.6 801.6,438.0 777.0,424.5 775.8,423.6 775.7,422.5 776.5,421.3" fill="none" stroke="#8a867c" stroke-width="0.65" stroke-linejoin="round"/>
<polygon points="782.1,422.3 783.9,416.6 784.6,415.5 795.4,405.0 796.7,404.1 798.1,403.9 799.5,404.4 815.5,413.0 816.6,413.9 819.5,417.5 819.6,418.3 818.9,419.3 804.7,433.3 803.6,434.0 802.5,434.2 801.2,433.8 783.1,423.9 782.3,423.2" fill="#45443f" stroke="#0c0c0b" stroke-width="1.3" stroke-linejoin="round" />
<polygon points="801.1,427.4 805.6,426.9 805.2,433.4 801.1,434.0" fill="#56544e" />
<polygon points="795.4,405.0 796.7,404.1 798.1,403.9 799.5,404.4 815.5,413.0 816.6,413.9 816.7,414.9 815.9,416.1 805.2,426.7 803.9,427.5 802.5,427.7 801.0,427.2 785.1,418.5 784.0,417.6 783.9,416.6 784.6,415.5" fill="url(#gKey)" stroke="#121110" stroke-width="1.0" stroke-linejoin="round" />
<polygon points="834.3,417.4 835.7,416.4 837.2,416.2 838.8,416.8 863.9,430.2 865.1,431.2 865.2,432.3 864.4,433.5 841.3,456.6 839.9,457.6 838.4,457.8 836.8,457.3 811.7,443.5 810.5,442.6 810.4,441.4 811.2,440.2" fill="none" stroke="#0e0d0c" stroke-width="2.91" stroke-linejoin="round"/>
<polygon points="834.3,417.4 835.7,416.4 837.2,416.2 838.8,416.8 863.9,430.2 865.1,431.2 865.2,432.3 864.4,433.5 841.3,456.6 839.9,457.6 838.4,457.8 836.8,457.3 811.7,443.5 810.5,442.6 810.4,441.4 811.2,440.2" fill="none" stroke="#8a867c" stroke-width="0.66" stroke-linejoin="round"/>
<polygon points="816.9,441.3 818.6,435.5 819.4,434.3 830.1,423.7 831.4,422.8 832.8,422.6 834.3,423.1 850.5,431.9 851.6,432.8 854.6,436.4 854.7,437.3 854.0,438.3 839.8,452.5 838.7,453.2 837.6,453.4 836.3,453.0 817.9,442.9 817.0,442.2" fill="#45443f" stroke="#0c0c0b" stroke-width="1.3" stroke-linejoin="round" />
<polygon points="836.1,446.5 840.7,446.0 840.3,452.6 836.2,453.2" fill="#56544e" />
<polygon points="830.1,423.7 831.4,422.8 832.8,422.6 834.3,423.1 850.5,431.9 851.6,432.8 851.8,433.8 851.0,435.0 840.3,445.7 839.0,446.6 837.6,446.8 836.1,446.3 819.8,437.4 818.7,436.5 818.6,435.5 819.4,434.3" fill="url(#gKey)" stroke="#121110" stroke-width="1.0" stroke-linejoin="round" />
<polygon points="869.6,436.4 871.0,435.4 872.5,435.2 874.1,435.7 899.7,449.4 900.9,450.4 901.1,451.5 900.2,452.8 877.2,476.2 875.8,477.2 874.3,477.4 872.7,476.9 847.1,462.9 845.9,461.9 845.7,460.8 846.6,459.5" fill="none" stroke="#0e0d0c" stroke-width="2.97" stroke-linejoin="round"/>
<polygon points="869.6,436.4 871.0,435.4 872.5,435.2 874.1,435.7 899.7,449.4 900.9,450.4 901.1,451.5 900.2,452.8 877.2,476.2 875.8,477.2 874.3,477.4 872.7,476.9 847.1,462.9 845.9,461.9 845.7,460.8 846.6,459.5" fill="none" stroke="#8a867c" stroke-width="0.67" stroke-linejoin="round"/>
<polygon points="852.2,460.6 854.0,454.7 854.8,453.5 865.4,442.8 866.7,441.9 868.1,441.7 869.7,442.2 886.2,451.1 887.3,452.0 890.3,455.7 890.4,456.6 889.8,457.6 875.6,472.0 874.5,472.8 873.3,472.9 872.1,472.5 853.3,462.3 852.4,461.5" fill="#45443f" stroke="#0c0c0b" stroke-width="1.3" stroke-linejoin="round" />
<polygon points="871.8,466.0 876.5,465.4 876.1,472.2 871.9,472.7" fill="#56544e" />
<polygon points="865.4,442.8 866.7,441.9 868.1,441.7 869.7,442.2 886.2,451.1 887.3,452.0 887.5,453.1 886.7,454.3 876.1,465.1 874.8,466.0 873.3,466.2 871.8,465.7 855.2,456.7 854.1,455.8 854.0,454.7 854.8,453.5" fill="url(#gKey)" stroke="#121110" stroke-width="1.0" stroke-linejoin="round" />
<polygon points="905.5,455.7 907.0,454.7 908.5,454.5 910.2,455.0 936.2,469.0 937.4,470.0 937.6,471.2 936.8,472.5 913.8,496.2 912.4,497.2 910.9,497.4 909.2,496.9 883.1,482.6 881.9,481.6 881.7,480.4 882.6,479.1" fill="none" stroke="#0e0d0c" stroke-width="3.02" stroke-linejoin="round"/>
<polygon points="905.5,455.7 907.0,454.7 908.5,454.5 910.2,455.0 936.2,469.0 937.4,470.0 937.6,471.2 936.8,472.5 913.8,496.2 912.4,497.2 910.9,497.4 909.2,496.9 883.1,482.6 881.9,481.6 881.7,480.4 882.6,479.1" fill="none" stroke="#8a867c" stroke-width="0.69" stroke-linejoin="round"/>
<polygon points="888.3,480.3 890.0,474.3 890.8,473.1 901.4,462.2 902.7,461.3 904.2,461.1 905.7,461.6 922.6,470.7 923.7,471.6 926.7,475.4 926.9,476.3 926.2,477.3 912.1,491.9 911.0,492.7 909.8,492.9 908.5,492.5 889.3,482.0 888.4,481.2" fill="#45443f" stroke="#0c0c0b" stroke-width="1.3" stroke-linejoin="round" />
<polygon points="908.2,485.8 913.0,485.2 912.6,492.1 908.3,492.6" fill="#56544e" />
<polygon points="901.4,462.2 902.7,461.3 904.2,461.1 905.7,461.6 922.6,470.7 923.7,471.6 923.9,472.7 923.1,474.0 912.5,484.9 911.2,485.8 909.7,486.1 908.2,485.5 891.3,476.3 890.2,475.4 890.0,474.3 890.8,473.1" fill="url(#gKey)" stroke="#121110" stroke-width="1.0" stroke-linejoin="round" />
<polygon points="942.2,475.4 943.6,474.4 945.2,474.1 946.9,474.7 973.4,488.9 974.6,490.0 974.8,491.1 974.0,492.5 951.1,516.5 949.7,517.6 948.1,517.8 946.4,517.3 919.8,502.7 918.6,501.7 918.4,500.5 919.3,499.1" fill="none" stroke="#0e0d0c" stroke-width="3.08" stroke-linejoin="round"/>
<polygon points="942.2,475.4 943.6,474.4 945.2,474.1 946.9,474.7 973.4,488.9 974.6,490.0 974.8,491.1 974.0,492.5 951.1,516.5 949.7,517.6 948.1,517.8 946.4,517.3 919.8,502.7 918.6,501.7 918.4,500.5 919.3,499.1" fill="none" stroke="#8a867c" stroke-width="0.70" stroke-linejoin="round"/>
<polygon points="925.0,500.4 926.7,494.3 927.5,493.0 938.1,482.0 939.4,481.1 940.9,480.8 942.5,481.4 959.7,490.6 960.8,491.6 963.8,495.4 964.0,496.4 963.3,497.4 949.3,512.2 948.1,513.0 946.9,513.2 945.6,512.8 926.1,502.1 925.1,501.3" fill="#45443f" stroke="#0c0c0b" stroke-width="1.3" stroke-linejoin="round" />
<polygon points="945.3,505.9 950.2,505.4 949.8,512.4 945.5,512.9" fill="#56544e" />
<polygon points="938.1,482.0 939.4,481.1 940.9,480.8 942.5,481.4 959.7,490.6 960.8,491.6 961.0,492.7 960.2,494.0 949.7,505.0 948.3,506.0 946.9,506.2 945.3,505.7 928.1,496.3 926.9,495.4 926.7,494.3 927.5,493.0" fill="url(#gKey)" stroke="#121110" stroke-width="1.0" stroke-linejoin="round" />
<polygon points="979.5,495.5 980.9,494.4 982.5,494.2 984.3,494.7 1011.3,509.3 1012.6,510.3 1012.8,511.5 1011.9,512.9 989.2,537.3 987.7,538.3 986.1,538.6 984.4,538.0 957.3,523.2 956.0,522.1 955.8,520.9 956.7,519.5" fill="none" stroke="#0e0d0c" stroke-width="3.14" stroke-linejoin="round"/>
<polygon points="979.5,495.5 980.9,494.4 982.5,494.2 984.3,494.7 1011.3,509.3 1012.6,510.3 1012.8,511.5 1011.9,512.9 989.2,537.3 987.7,538.3 986.1,538.6 984.4,538.0 957.3,523.2 956.0,522.1 955.8,520.9 956.7,519.5" fill="none" stroke="#8a867c" stroke-width="0.71" stroke-linejoin="round"/>
<polygon points="962.4,520.8 964.2,514.6 965.0,513.3 975.4,502.2 976.8,501.2 978.3,501.0 979.9,501.5 997.5,511.0 998.6,511.9 1001.7,515.9 1001.8,516.8 1001.2,517.9 987.2,532.9 986.0,533.7 984.8,533.9 983.4,533.5 963.6,522.6 962.6,521.8" fill="#45443f" stroke="#0c0c0b" stroke-width="1.3" stroke-linejoin="round" />
<polygon points="983.1,526.5 988.1,525.9 987.8,533.1 983.3,533.7" fill="#56544e" />
<polygon points="975.4,502.2 976.8,501.2 978.3,501.0 979.9,501.5 997.5,511.0 998.6,511.9 998.8,513.1 998.0,514.4 987.5,525.6 986.2,526.6 984.7,526.8 983.1,526.3 965.5,516.7 964.3,515.7 964.2,514.6 965.0,513.3" fill="url(#gKey)" stroke="#121110" stroke-width="1.0" stroke-linejoin="round" />
<polygon points="1017.5,516.0 1019.0,514.9 1020.6,514.6 1022.4,515.2 1050.0,530.0 1051.3,531.0 1051.5,532.3 1050.6,533.7 1027.9,558.4 1026.5,559.5 1024.9,559.8 1023.1,559.2 995.5,544.1 994.2,543.0 994.0,541.7 994.9,540.3" fill="none" stroke="#0e0d0c" stroke-width="3.20" stroke-linejoin="round"/>
<polygon points="1017.5,516.0 1019.0,514.9 1020.6,514.6 1022.4,515.2 1050.0,530.0 1051.3,531.0 1051.5,532.3 1050.6,533.7 1027.9,558.4 1026.5,559.5 1024.9,559.8 1023.1,559.2 995.5,544.1 994.2,543.0 994.0,541.7 994.9,540.3" fill="none" stroke="#8a867c" stroke-width="0.73" stroke-linejoin="round"/>
<polygon points="1000.6,541.7 1002.3,535.3 1003.1,534.0 1013.5,522.8 1014.9,521.8 1016.5,521.5 1018.1,522.1 1036.0,531.7 1037.2,532.7 1040.2,536.7 1040.4,537.7 1039.7,538.8 1025.8,554.0 1024.6,554.8 1023.4,555.0 1022.0,554.6 1001.8,543.5 1000.8,542.7" fill="#45443f" stroke="#0c0c0b" stroke-width="1.3" stroke-linejoin="round" />
<polygon points="1021.7,547.5 1026.7,546.9 1026.4,554.2 1021.9,554.8" fill="#56544e" />
<polygon points="1013.5,522.8 1014.9,521.8 1016.5,521.5 1018.1,522.1 1036.0,531.7 1037.2,532.7 1037.4,533.9 1036.6,535.2 1026.2,546.5 1024.8,547.6 1023.3,547.8 1021.6,547.3 1003.7,537.5 1002.5,536.5 1002.3,535.3 1003.1,534.0" fill="url(#gKey)" stroke="#121110" stroke-width="1.0" stroke-linejoin="round" />
<polygon points="1056.3,536.9 1057.8,535.7 1059.5,535.5 1061.3,536.0 1089.4,551.1 1090.7,552.2 1090.9,553.5 1090.1,555.0 1067.5,580.0 1066.0,581.1 1064.4,581.4 1062.6,580.8 1034.4,565.4 1033.1,564.3 1032.9,563.0 1033.7,561.5" fill="none" stroke="#0e0d0c" stroke-width="3.27" stroke-linejoin="round"/>
<polygon points="1056.3,536.9 1057.8,535.7 1059.5,535.5 1061.3,536.0 1089.4,551.1 1090.7,552.2 1090.9,553.5 1090.1,555.0 1067.5,580.0 1066.0,581.1 1064.4,581.4 1062.6,580.8 1034.4,565.4 1033.1,564.3 1032.9,563.0 1033.7,561.5" fill="none" stroke="#8a867c" stroke-width="0.74" stroke-linejoin="round"/>
<polygon points="1039.5,563.0 1041.2,556.5 1042.1,555.1 1052.4,543.8 1053.8,542.7 1055.3,542.5 1057.0,543.0 1075.2,552.8 1076.5,553.9 1079.6,558.0 1079.7,559.0 1079.1,560.1 1065.2,575.5 1064.0,576.3 1062.8,576.6 1061.4,576.1 1040.7,564.8 1039.7,564.0" fill="#45443f" stroke="#0c0c0b" stroke-width="1.3" stroke-linejoin="round" />
<polygon points="1061.0,568.9 1066.1,568.3 1065.9,575.7 1061.2,576.3" fill="#56544e" />
<polygon points="1052.4,543.8 1053.8,542.7 1055.3,542.5 1057.0,543.0 1075.2,552.8 1076.5,553.9 1076.7,555.1 1075.9,556.4 1065.5,567.9 1064.1,568.9 1062.6,569.2 1060.9,568.7 1042.7,558.7 1041.5,557.7 1041.2,556.5 1042.1,555.1" fill="url(#gKey)" stroke="#121110" stroke-width="1.0" stroke-linejoin="round" />
<polygon points="1095.9,558.2 1097.4,557.0 1099.1,556.7 1100.9,557.3 1129.6,572.7 1130.9,573.8 1131.2,575.1 1130.3,576.6 1107.8,602.0 1106.3,603.1 1104.7,603.4 1102.9,602.8 1074.1,587.1 1072.8,586.0 1072.5,584.7 1073.4,583.1" fill="none" stroke="#0e0d0c" stroke-width="3.33" stroke-linejoin="round"/>
<polygon points="1095.9,558.2 1097.4,557.0 1099.1,556.7 1100.9,557.3 1129.6,572.7 1130.9,573.8 1131.2,575.1 1130.3,576.6 1107.8,602.0 1106.3,603.1 1104.7,603.4 1102.9,602.8 1074.1,587.1 1072.8,586.0 1072.5,584.7 1073.4,583.1" fill="none" stroke="#8a867c" stroke-width="0.76" stroke-linejoin="round"/>
<polygon points="1079.2,584.7 1080.9,578.0 1081.8,576.6 1092.0,565.2 1093.4,564.1 1095.0,563.8 1096.7,564.4 1115.3,574.4 1116.6,575.4 1119.7,579.6 1119.9,580.7 1119.2,581.8 1105.4,597.4 1104.2,598.3 1102.9,598.5 1101.5,598.1 1080.4,586.6 1079.4,585.7" fill="#45443f" stroke="#0c0c0b" stroke-width="1.3" stroke-linejoin="round" />
<polygon points="1101.1,590.7 1106.3,590.1 1106.1,597.7 1101.4,598.3" fill="#56544e" />
<polygon points="1092.0,565.2 1093.4,564.1 1095.0,563.8 1096.7,564.4 1115.3,574.4 1116.6,575.4 1116.8,576.7 1116.0,578.1 1105.7,589.7 1104.3,590.8 1102.7,591.0 1101.0,590.5 1082.4,580.3 1081.2,579.3 1080.9,578.0 1081.8,576.6" fill="url(#gKey)" stroke="#121110" stroke-width="1.0" stroke-linejoin="round" />
<polygon points="1136.2,579.9 1137.8,578.7 1139.5,578.4 1141.3,579.0 1170.6,594.7 1172.0,595.8 1172.2,597.1 1171.3,598.7 1149.0,624.4 1147.5,625.6 1145.8,625.9 1143.9,625.3 1114.6,609.3 1113.2,608.1 1113.0,606.8 1113.9,605.2" fill="none" stroke="#0e0d0c" stroke-width="3.40" stroke-linejoin="round"/>
<polygon points="1136.2,579.9 1137.8,578.7 1139.5,578.4 1141.3,579.0 1170.6,594.7 1172.0,595.8 1172.2,597.1 1171.3,598.7 1149.0,624.4 1147.5,625.6 1145.8,625.9 1143.9,625.3 1114.6,609.3 1113.2,608.1 1113.0,606.8 1113.9,605.2" fill="none" stroke="#8a867c" stroke-width="0.77" stroke-linejoin="round"/>
<polygon points="1119.7,606.8 1121.4,600.0 1122.3,598.6 1132.4,587.0 1133.9,585.9 1135.5,585.6 1137.2,586.2 1156.2,596.4 1157.5,597.5 1160.6,601.7 1160.8,602.8 1160.1,604.0 1146.4,619.8 1145.2,620.7 1143.9,620.9 1142.5,620.5 1120.9,608.7 1119.9,607.8" fill="#45443f" stroke="#0c0c0b" stroke-width="1.3" stroke-linejoin="round" />
<polygon points="1142.0,613.0 1147.3,612.4 1147.1,620.0 1142.3,620.7" fill="#56544e" />
<polygon points="1132.4,587.0 1133.9,585.9 1135.5,585.6 1137.2,586.2 1156.2,596.4 1157.5,597.5 1157.7,598.7 1156.9,600.2 1146.7,611.9 1145.2,613.0 1143.7,613.3 1141.9,612.7 1122.9,602.4 1121.6,601.3 1121.4,600.0 1122.3,598.6" fill="url(#gKey)" stroke="#121110" stroke-width="1.0" stroke-linejoin="round" />
<polygon points="1177.4,602.0 1179.0,600.8 1180.7,600.5 1182.6,601.1 1212.4,617.1 1213.8,618.2 1214.1,619.6 1213.2,621.2 1191.0,647.3 1189.5,648.6 1187.8,648.9 1185.9,648.3 1155.9,631.9 1154.5,630.7 1154.3,629.3 1155.2,627.7" fill="none" stroke="#0e0d0c" stroke-width="3.47" stroke-linejoin="round"/>
<polygon points="1177.4,602.0 1179.0,600.8 1180.7,600.5 1182.6,601.1 1212.4,617.1 1213.8,618.2 1214.1,619.6 1213.2,621.2 1191.0,647.3 1189.5,648.6 1187.8,648.9 1185.9,648.3 1155.9,631.9 1154.5,630.7 1154.3,629.3 1155.2,627.7" fill="none" stroke="#8a867c" stroke-width="0.79" stroke-linejoin="round"/>
<polygon points="1161.0,629.4 1162.7,622.5 1163.6,621.0 1173.7,609.3 1175.1,608.1 1176.7,607.8 1178.5,608.4 1197.9,618.8 1199.2,619.9 1202.3,624.3 1202.5,625.4 1201.9,626.6 1188.2,642.6 1187.0,643.6 1185.7,643.8 1184.2,643.3 1162.3,631.4 1161.2,630.4" fill="#45443f" stroke="#0c0c0b" stroke-width="1.3" stroke-linejoin="round" />
<polygon points="1183.7,635.7 1189.2,635.1 1189.0,642.9 1184.1,643.5" fill="#56544e" />
<polygon points="1173.7,609.3 1175.1,608.1 1176.7,607.8 1178.5,608.4 1197.9,618.8 1199.2,619.9 1199.4,621.2 1198.6,622.7 1188.5,634.5 1187.0,635.7 1185.4,636.0 1183.7,635.4 1164.3,624.9 1163.0,623.8 1162.7,622.5 1163.6,621.0" fill="url(#gKey)" stroke="#121110" stroke-width="1.0" stroke-linejoin="round" />
<polygon points="1219.4,624.6 1221.0,623.4 1222.7,623.0 1224.6,623.6 1255.1,640.0 1256.6,641.2 1256.8,642.6 1255.9,644.2 1233.9,670.7 1232.3,672.0 1230.6,672.3 1228.7,671.7 1198.1,654.9 1196.7,653.7 1196.4,652.3 1197.3,650.7" fill="none" stroke="#0e0d0c" stroke-width="3.54" stroke-linejoin="round"/>
<polygon points="1219.4,624.6 1221.0,623.4 1222.7,623.0 1224.6,623.6 1255.1,640.0 1256.6,641.2 1256.8,642.6 1255.9,644.2 1233.9,670.7 1232.3,672.0 1230.6,672.3 1228.7,671.7 1198.1,654.9 1196.7,653.7 1196.4,652.3 1197.3,650.7" fill="none" stroke="#8a867c" stroke-width="0.80" stroke-linejoin="round"/>
<polygon points="1203.1,652.4 1204.9,645.4 1205.7,643.8 1215.7,632.0 1217.2,630.8 1218.8,630.5 1220.6,631.1 1240.4,641.7 1241.7,642.8 1244.9,647.3 1245.2,648.4 1244.5,649.7 1230.9,665.9 1229.7,666.9 1228.4,667.1 1226.9,666.7 1204.5,654.4 1203.3,653.5" fill="#45443f" stroke="#0c0c0b" stroke-width="1.3" stroke-linejoin="round" />
<polygon points="1226.3,658.9 1231.9,658.2 1231.7,666.2 1226.7,666.9" fill="#56544e" />
<polygon points="1215.7,632.0 1217.2,630.8 1218.8,630.5 1220.6,631.1 1240.4,641.7 1241.7,642.8 1242.0,644.2 1241.2,645.7 1231.2,657.7 1229.7,658.9 1228.1,659.2 1226.3,658.6 1206.5,647.8 1205.1,646.7 1204.9,645.4 1205.7,643.8" fill="url(#gKey)" stroke="#121110" stroke-width="1.0" stroke-linejoin="round" />
<polygon points="1262.3,647.7 1263.9,646.4 1265.6,646.0 1267.6,646.7 1298.7,663.3 1300.2,664.6 1300.5,666.0 1299.6,667.7 1277.6,694.5 1276.1,695.9 1274.3,696.2 1272.3,695.6 1241.1,678.5 1239.7,677.3 1239.4,675.8 1240.3,674.1" fill="none" stroke="#0e0d0c" stroke-width="3.61" stroke-linejoin="round"/>
<polygon points="1262.3,647.7 1263.9,646.4 1265.6,646.0 1267.6,646.7 1298.7,663.3 1300.2,664.6 1300.5,666.0 1299.6,667.7 1277.6,694.5 1276.1,695.9 1274.3,696.2 1272.3,695.6 1241.1,678.5 1239.7,677.3 1239.4,675.8 1240.3,674.1" fill="none" stroke="#8a867c" stroke-width="0.82" stroke-linejoin="round"/>
<polygon points="1246.2,675.9 1247.9,668.7 1248.7,667.2 1258.7,655.2 1260.2,654.0 1261.8,653.7 1263.7,654.2 1283.8,665.1 1285.2,666.2 1288.4,670.8 1288.7,671.9 1288.0,673.3 1274.5,689.7 1273.3,690.7 1271.9,691.0 1270.4,690.5 1247.5,678.0 1246.4,677.0" fill="#45443f" stroke="#0c0c0b" stroke-width="1.3" stroke-linejoin="round" />
<polygon points="1269.8,682.5 1275.5,681.9 1275.4,690.0 1270.2,690.7" fill="#56544e" />
<polygon points="1258.7,655.2 1260.2,654.0 1261.8,653.7 1263.7,654.2 1283.8,665.1 1285.2,666.2 1285.5,667.6 1284.6,669.2 1274.7,681.3 1273.2,682.5 1271.6,682.9 1269.7,682.3 1249.5,671.3 1248.2,670.1 1247.9,668.7 1248.7,667.2" fill="url(#gKey)" stroke="#121110" stroke-width="1.0" stroke-linejoin="round" />
<polygon points="1341.0,631.1 1342.6,629.7 1344.4,629.4 1346.5,630.0 1378.0,646.5 1379.5,647.7 1379.8,649.2 1378.9,650.9 1324.9,718.5 1323.3,719.9 1321.5,720.3 1319.5,719.6 1287.7,702.2 1286.2,700.9 1285.9,699.4 1286.8,697.7" fill="none" stroke="#0e0d0c" stroke-width="3.67" stroke-linejoin="round"/>
<polygon points="1341.0,631.1 1342.6,629.7 1344.4,629.4 1346.5,630.0 1378.0,646.5 1379.5,647.7 1379.8,649.2 1378.9,650.9 1324.9,718.5 1323.3,719.9 1321.5,720.3 1319.5,719.6 1287.7,702.2 1286.2,700.9 1285.9,699.4 1286.8,697.7" fill="none" stroke="#8a867c" stroke-width="0.83" stroke-linejoin="round"/>
<polygon points="1321.6,713.6 1320.4,714.6 1319.0,714.9 1317.4,714.4 1294.1,701.7 1293.0,700.7 1292.7,699.6 1294.5,692.3 1295.3,690.7 1337.7,638.5 1339.2,637.2 1340.8,636.9 1342.7,637.4 1363.1,648.2 1364.6,649.3 1367.8,654.0 1368.0,655.1 1367.3,656.5" fill="#45443f" stroke="#0c0c0b" stroke-width="1.3" stroke-linejoin="round" />
<polygon points="1316.8,706.3 1322.6,705.7 1322.5,714.0 1317.3,714.6" fill="#56544e" />
<polygon points="1337.7,638.5 1339.2,637.2 1340.8,636.9 1342.7,637.4 1363.1,648.2 1364.6,649.3 1364.8,650.7 1364.0,652.3 1321.8,705.1 1320.3,706.3 1318.6,706.7 1316.7,706.1 1296.1,694.9 1294.7,693.7 1294.5,692.3 1295.3,690.7" fill="url(#gKey)" stroke="#121110" stroke-width="1.0" stroke-linejoin="round" />
<polygon points="1381.9,713.1 1383.5,711.7 1385.4,711.3 1387.5,712.0 1420.4,729.6 1421.9,730.9 1422.3,732.5 1421.4,734.3 1399.9,762.3 1398.2,763.7 1396.4,764.1 1394.3,763.4 1361.3,745.3 1359.7,744.0 1359.4,742.4 1360.3,740.6" fill="none" stroke="#0e0d0c" stroke-width="3.82" stroke-linejoin="round"/>
<polygon points="1381.9,713.1 1383.5,711.7 1385.4,711.3 1387.5,712.0 1420.4,729.6 1421.9,730.9 1422.3,732.5 1421.4,734.3 1399.9,762.3 1398.2,763.7 1396.4,764.1 1394.3,763.4 1361.3,745.3 1359.7,744.0 1359.4,742.4 1360.3,740.6" fill="none" stroke="#8a867c" stroke-width="0.87" stroke-linejoin="round"/>
<polygon points="1366.3,742.6 1368.0,735.1 1368.8,733.4 1378.5,721.0 1380.0,719.7 1381.8,719.3 1383.7,719.9 1405.0,731.4 1406.5,732.6 1409.8,737.5 1410.1,738.7 1409.4,740.1 1396.3,757.2 1395.0,758.3 1393.6,758.6 1391.9,758.1 1367.7,744.9 1366.5,743.8" fill="#45443f" stroke="#0c0c0b" stroke-width="1.3" stroke-linejoin="round" />
<polygon points="1391.2,749.7 1397.2,749.0 1397.2,757.6 1391.8,758.3" fill="#56544e" />
<polygon points="1378.5,721.0 1380.0,719.7 1381.8,719.3 1383.7,719.9 1405.0,731.4 1406.5,732.6 1406.8,734.1 1406.0,735.8 1396.3,748.3 1394.8,749.7 1393.1,750.0 1391.2,749.4 1369.8,737.8 1368.3,736.5 1368.0,735.1 1368.8,733.4" fill="url(#gKey)" stroke="#121110" stroke-width="1.0" stroke-linejoin="round" />
<polygon points="763.7,434.0 765.1,433.0 766.6,432.8 768.2,433.4 811.0,456.9 812.1,457.9 812.3,459.0 811.5,460.3 789.2,482.3 787.9,483.3 786.4,483.5 784.8,482.9 742.0,458.9 740.8,457.9 740.7,456.8 741.5,455.5" fill="none" stroke="#0e0d0c" stroke-width="2.89" stroke-linejoin="round"/>
<polygon points="763.7,434.0 765.1,433.0 766.6,432.8 768.2,433.4 811.0,456.9 812.1,457.9 812.3,459.0 811.5,460.3 789.2,482.3 787.9,483.3 786.4,483.5 784.8,482.9 742.0,458.9 740.8,457.9 740.7,456.8 741.5,455.5" fill="none" stroke="#8a867c" stroke-width="0.66" stroke-linejoin="round"/>
<polygon points="747.2,456.6 748.9,450.8 749.7,449.7 759.3,440.4 760.6,439.5 762.0,439.3 763.5,439.8 797.6,458.7 798.6,459.6 801.6,463.2 801.7,464.0 801.0,465.0 787.9,478.0 786.8,478.8 785.7,478.9 784.4,478.5 748.2,458.2 747.3,457.5" fill="#45443f" stroke="#0c0c0b" stroke-width="1.3" stroke-linejoin="round" />
<polygon points="784.3,472.1 788.8,471.5 788.4,478.2 784.3,478.7" fill="#56544e" />
<polygon points="759.3,440.4 760.6,439.5 762.0,439.3 763.5,439.8 797.6,458.7 798.6,459.6 798.8,460.6 798.0,461.8 788.4,471.3 787.1,472.2 785.7,472.3 784.3,471.8 750.2,452.8 749.1,451.9 748.9,450.8 749.7,449.7" fill="url(#gKey)" stroke="#121110" stroke-width="1.0" stroke-linejoin="round" />
<polygon points="816.4,463.1 817.8,462.1 819.3,461.9 821.0,462.4 846.3,476.4 847.5,477.4 847.7,478.5 846.8,479.8 823.2,503.6 821.8,504.6 820.3,504.8 818.7,504.3 793.3,490.0 792.1,489.0 792.0,487.8 792.8,486.5" fill="none" stroke="#0e0d0c" stroke-width="2.96" stroke-linejoin="round"/>
<polygon points="816.4,463.1 817.8,462.1 819.3,461.9 821.0,462.4 846.3,476.4 847.5,477.4 847.7,478.5 846.8,479.8 823.2,503.6 821.8,504.6 820.3,504.8 818.7,504.3 793.3,490.0 792.1,489.0 792.0,487.8 792.8,486.5" fill="none" stroke="#8a867c" stroke-width="0.67" stroke-linejoin="round"/>
<polygon points="798.6,487.7 800.3,481.7 801.1,480.5 812.1,469.6 813.4,468.7 814.8,468.5 816.3,469.0 832.7,478.1 833.8,479.1 836.8,482.7 836.9,483.6 836.3,484.6 821.7,499.3 820.6,500.0 819.5,500.2 818.2,499.8 799.6,489.3 798.7,488.6" fill="#45443f" stroke="#0c0c0b" stroke-width="1.3" stroke-linejoin="round" />
<polygon points="818.0,493.2 822.7,492.7 822.3,499.4 818.1,500.0" fill="#56544e" />
<polygon points="812.1,469.6 813.4,468.7 814.8,468.5 816.3,469.0 832.7,478.1 833.8,479.1 834.0,480.1 833.2,481.3 822.2,492.4 820.9,493.3 819.5,493.5 818.0,493.0 801.5,483.8 800.5,482.8 800.3,481.7 801.1,480.5" fill="url(#gKey)" stroke="#121110" stroke-width="1.0" stroke-linejoin="round" />
<polygon points="852.1,482.8 853.5,481.8 855.0,481.5 856.7,482.1 882.5,496.3 883.7,497.3 883.9,498.5 883.0,499.8 859.5,524.0 858.1,525.0 856.6,525.2 854.9,524.6 829.0,510.1 827.8,509.0 827.7,507.9 828.5,506.6" fill="none" stroke="#0e0d0c" stroke-width="3.02" stroke-linejoin="round"/>
<polygon points="852.1,482.8 853.5,481.8 855.0,481.5 856.7,482.1 882.5,496.3 883.7,497.3 883.9,498.5 883.0,499.8 859.5,524.0 858.1,525.0 856.6,525.2 854.9,524.6 829.0,510.1 827.8,509.0 827.7,507.9 828.5,506.6" fill="none" stroke="#8a867c" stroke-width="0.69" stroke-linejoin="round"/>
<polygon points="834.3,507.7 836.1,501.7 836.9,500.5 847.8,489.4 849.1,488.5 850.5,488.3 852.1,488.8 868.8,498.1 870.0,499.0 873.0,502.8 873.1,503.7 872.4,504.7 857.9,519.6 856.8,520.3 855.6,520.5 854.3,520.1 835.4,509.5 834.4,508.7" fill="#45443f" stroke="#0c0c0b" stroke-width="1.3" stroke-linejoin="round" />
<polygon points="854.1,513.4 858.9,512.8 858.5,519.7 854.2,520.3" fill="#56544e" />
<polygon points="847.8,489.4 849.1,488.5 850.5,488.3 852.1,488.8 868.8,498.1 870.0,499.0 870.1,500.1 869.3,501.4 858.4,512.5 857.1,513.5 855.6,513.7 854.1,513.1 837.3,503.8 836.2,502.8 836.1,501.7 836.9,500.5" fill="url(#gKey)" stroke="#121110" stroke-width="1.0" stroke-linejoin="round" />
<polygon points="888.4,502.9 889.8,501.8 891.4,501.6 893.1,502.2 919.4,516.7 920.7,517.7 920.8,518.9 920.0,520.3 896.5,544.7 895.1,545.7 893.5,546.0 891.9,545.4 865.5,530.6 864.3,529.5 864.1,528.3 865.0,527.0" fill="none" stroke="#0e0d0c" stroke-width="3.08" stroke-linejoin="round"/>
<polygon points="888.4,502.9 889.8,501.8 891.4,501.6 893.1,502.2 919.4,516.7 920.7,517.7 920.8,518.9 920.0,520.3 896.5,544.7 895.1,545.7 893.5,546.0 891.9,545.4 865.5,530.6 864.3,529.5 864.1,528.3 865.0,527.0" fill="none" stroke="#8a867c" stroke-width="0.70" stroke-linejoin="round"/>
<polygon points="870.7,528.2 872.5,522.0 873.3,520.8 884.1,509.6 885.5,508.7 887.0,508.4 888.5,509.0 905.6,518.4 906.7,519.4 909.8,523.2 909.9,524.2 909.2,525.2 894.8,540.2 893.7,541.0 892.5,541.2 891.2,540.8 871.8,529.9 870.9,529.1" fill="#45443f" stroke="#0c0c0b" stroke-width="1.3" stroke-linejoin="round" />
<polygon points="890.9,534.0 895.7,533.4 895.4,540.4 891.0,541.0" fill="#56544e" />
<polygon points="884.1,509.6 885.5,508.7 887.0,508.4 888.5,509.0 905.6,518.4 906.7,519.4 906.9,520.5 906.1,521.8 895.3,533.1 893.9,534.0 892.5,534.3 890.9,533.7 873.8,524.2 872.7,523.2 872.5,522.0 873.3,520.8" fill="url(#gKey)" stroke="#121110" stroke-width="1.0" stroke-linejoin="round" />
<polygon points="925.4,523.3 926.9,522.3 928.5,522.0 930.2,522.6 957.1,537.4 958.3,538.4 958.5,539.7 957.6,541.1 934.3,565.9 932.8,566.9 931.2,567.2 929.5,566.6 902.6,551.4 901.4,550.4 901.2,549.1 902.1,547.8" fill="none" stroke="#0e0d0c" stroke-width="3.14" stroke-linejoin="round"/>
<polygon points="925.4,523.3 926.9,522.3 928.5,522.0 930.2,522.6 957.1,537.4 958.3,538.4 958.5,539.7 957.6,541.1 934.3,565.9 932.8,566.9 931.2,567.2 929.5,566.6 902.6,551.4 901.4,550.4 901.2,549.1 902.1,547.8" fill="none" stroke="#8a867c" stroke-width="0.71" stroke-linejoin="round"/>
<polygon points="907.9,549.0 909.6,542.8 910.4,541.5 921.2,530.2 922.6,529.2 924.1,529.0 925.7,529.5 943.1,539.1 944.3,540.1 947.3,544.0 947.5,545.0 946.8,546.1 932.4,561.3 931.3,562.2 930.0,562.3 928.7,561.9 909.0,550.8 908.0,550.0" fill="#45443f" stroke="#0c0c0b" stroke-width="1.3" stroke-linejoin="round" />
<polygon points="928.4,554.9 933.4,554.4 933.0,561.5 928.6,562.1" fill="#56544e" />
<polygon points="921.2,530.2 922.6,529.2 924.1,529.0 925.7,529.5 943.1,539.1 944.3,540.1 944.4,541.3 943.6,542.6 932.8,554.0 931.5,555.0 930.0,555.2 928.4,554.7 911.0,544.9 909.8,543.9 909.6,542.8 910.4,541.5" fill="url(#gKey)" stroke="#121110" stroke-width="1.0" stroke-linejoin="round" />
<polygon points="963.2,544.2 964.7,543.1 966.3,542.9 968.0,543.4 995.4,558.5 996.7,559.6 996.9,560.9 996.0,562.3 972.8,587.4 971.3,588.5 969.7,588.8 967.9,588.2 940.5,572.7 939.2,571.6 939.0,570.4 939.9,569.0" fill="none" stroke="#0e0d0c" stroke-width="3.20" stroke-linejoin="round"/>
<polygon points="963.2,544.2 964.7,543.1 966.3,542.9 968.0,543.4 995.4,558.5 996.7,559.6 996.9,560.9 996.0,562.3 972.8,587.4 971.3,588.5 969.7,588.8 967.9,588.2 940.5,572.7 939.2,571.6 939.0,570.4 939.9,569.0" fill="none" stroke="#8a867c" stroke-width="0.73" stroke-linejoin="round"/>
<polygon points="945.7,570.3 947.5,563.9 948.3,562.6 959.0,551.2 960.4,550.1 961.9,549.9 963.6,550.5 981.3,560.3 982.5,561.3 985.6,565.3 985.8,566.3 985.1,567.4 970.8,582.8 969.6,583.7 968.4,583.9 967.0,583.4 946.9,572.1 945.9,571.3" fill="#45443f" stroke="#0c0c0b" stroke-width="1.3" stroke-linejoin="round" />
<polygon points="966.7,576.3 971.7,575.8 971.4,583.0 966.8,583.6" fill="#56544e" />
<polygon points="959.0,551.2 960.4,550.1 961.9,549.9 963.6,550.5 981.3,560.3 982.5,561.3 982.7,562.5 981.9,563.8 971.2,575.4 969.8,576.4 968.3,576.6 966.6,576.1 948.9,566.1 947.7,565.1 947.5,563.9 948.3,562.6" fill="url(#gKey)" stroke="#121110" stroke-width="1.0" stroke-linejoin="round" />
<polygon points="1001.7,565.5 1003.2,564.4 1004.8,564.1 1006.6,564.7 1034.5,580.1 1035.8,581.2 1036.1,582.5 1035.2,583.9 1012.0,609.4 1010.5,610.5 1008.9,610.8 1007.1,610.2 979.1,594.5 977.8,593.3 977.6,592.0 978.5,590.6" fill="none" stroke="#0e0d0c" stroke-width="3.26" stroke-linejoin="round"/>
<polygon points="1001.7,565.5 1003.2,564.4 1004.8,564.1 1006.6,564.7 1034.5,580.1 1035.8,581.2 1036.1,582.5 1035.2,583.9 1012.0,609.4 1010.5,610.5 1008.9,610.8 1007.1,610.2 979.1,594.5 977.8,593.3 977.6,592.0 978.5,590.6" fill="none" stroke="#8a867c" stroke-width="0.74" stroke-linejoin="round"/>
<polygon points="984.4,592.0 986.1,585.5 986.9,584.1 997.6,572.6 999.0,571.5 1000.5,571.3 1002.2,571.8 1020.3,581.8 1021.5,582.9 1024.6,587.0 1024.8,588.0 1024.1,589.1 1009.9,604.7 1008.7,605.6 1007.4,605.8 1006.0,605.4 985.5,593.9 984.5,593.0" fill="#45443f" stroke="#0c0c0b" stroke-width="1.3" stroke-linejoin="round" />
<polygon points="1005.7,598.1 1010.8,597.6 1010.5,605.0 1005.9,605.6" fill="#56544e" />
<polygon points="997.6,572.6 999.0,571.5 1000.5,571.3 1002.2,571.8 1020.3,581.8 1021.5,582.9 1021.7,584.1 1020.9,585.5 1010.2,597.1 1008.8,598.2 1007.3,598.4 1005.7,597.9 987.5,587.7 986.3,586.7 986.1,585.5 986.9,584.1" fill="url(#gKey)" stroke="#121110" stroke-width="1.0" stroke-linejoin="round" />
<polygon points="1041.0,587.2 1042.5,586.0 1044.2,585.8 1046.0,586.4 1074.4,602.0 1075.8,603.2 1076.0,604.5 1075.1,606.0 1052.0,631.8 1050.5,633.0 1048.9,633.3 1047.1,632.7 1018.5,616.6 1017.2,615.5 1017.0,614.1 1017.9,612.6" fill="none" stroke="#0e0d0c" stroke-width="3.33" stroke-linejoin="round"/>
<polygon points="1041.0,587.2 1042.5,586.0 1044.2,585.8 1046.0,586.4 1074.4,602.0 1075.8,603.2 1076.0,604.5 1075.1,606.0 1052.0,631.8 1050.5,633.0 1048.9,633.3 1047.1,632.7 1018.5,616.6 1017.2,615.5 1017.0,614.1 1017.9,612.6" fill="none" stroke="#8a867c" stroke-width="0.76" stroke-linejoin="round"/>
<polygon points="1023.7,614.1 1025.5,607.5 1026.3,606.1 1036.9,594.4 1038.3,593.3 1039.9,593.0 1041.6,593.6 1060.1,603.8 1061.3,604.9 1064.4,609.1 1064.6,610.1 1063.9,611.3 1049.8,627.1 1048.6,628.0 1047.3,628.2 1045.9,627.8 1024.9,616.0 1023.9,615.1" fill="#45443f" stroke="#0c0c0b" stroke-width="1.3" stroke-linejoin="round" />
<polygon points="1045.5,620.4 1050.7,619.8 1050.4,627.4 1045.7,628.0" fill="#56544e" />
<polygon points="1036.9,594.4 1038.3,593.3 1039.9,593.0 1041.6,593.6 1060.1,603.8 1061.3,604.9 1061.5,606.1 1060.7,607.5 1050.1,619.4 1048.7,620.4 1047.1,620.7 1045.4,620.1 1027.0,609.8 1025.7,608.7 1025.5,607.5 1026.3,606.1" fill="url(#gKey)" stroke="#121110" stroke-width="1.0" stroke-linejoin="round" />
<polygon points="1081.0,609.3 1082.6,608.1 1084.3,607.9 1086.1,608.5 1115.2,624.5 1116.5,625.6 1116.8,627.0 1115.9,628.5 1092.9,654.7 1091.4,655.9 1089.7,656.2 1087.9,655.6 1058.7,639.2 1057.4,638.0 1057.1,636.7 1058.0,635.1" fill="none" stroke="#0e0d0c" stroke-width="3.39" stroke-linejoin="round"/>
<polygon points="1081.0,609.3 1082.6,608.1 1084.3,607.9 1086.1,608.5 1115.2,624.5 1116.5,625.6 1116.8,627.0 1115.9,628.5 1092.9,654.7 1091.4,655.9 1089.7,656.2 1087.9,655.6 1058.7,639.2 1057.4,638.0 1057.1,636.7 1058.0,635.1" fill="none" stroke="#8a867c" stroke-width="0.77" stroke-linejoin="round"/>
<polygon points="1063.9,636.7 1065.7,629.9 1066.5,628.5 1077.0,616.6 1078.5,615.5 1080.1,615.3 1081.8,615.8 1100.6,626.3 1101.9,627.3 1105.1,631.6 1105.3,632.7 1104.6,633.9 1090.5,649.9 1089.3,650.9 1088.0,651.1 1086.5,650.6 1065.2,638.6 1064.1,637.7" fill="#45443f" stroke="#0c0c0b" stroke-width="1.3" stroke-linejoin="round" />
<polygon points="1086.1,643.1 1091.4,642.5 1091.2,650.2 1086.4,650.8" fill="#56544e" />
<polygon points="1077.0,616.6 1078.5,615.5 1080.1,615.3 1081.8,615.8 1100.6,626.3 1101.9,627.3 1102.1,628.6 1101.3,630.1 1090.8,642.0 1089.3,643.1 1087.8,643.4 1086.0,642.8 1067.2,632.3 1065.9,631.2 1065.7,629.9 1066.5,628.5" fill="url(#gKey)" stroke="#121110" stroke-width="1.0" stroke-linejoin="round" />
<polygon points="1121.9,631.9 1123.4,630.7 1125.2,630.4 1127.0,631.0 1156.7,647.3 1158.1,648.5 1158.3,649.9 1157.4,651.5 1134.6,678.1 1133.1,679.3 1131.4,679.6 1129.5,679.0 1099.7,662.3 1098.4,661.1 1098.1,659.7 1099.0,658.1" fill="none" stroke="#0e0d0c" stroke-width="3.46" stroke-linejoin="round"/>
<polygon points="1121.9,631.9 1123.4,630.7 1125.2,630.4 1127.0,631.0 1156.7,647.3 1158.1,648.5 1158.3,649.9 1157.4,651.5 1134.6,678.1 1133.1,679.3 1131.4,679.6 1129.5,679.0 1099.7,662.3 1098.4,661.1 1098.1,659.7 1099.0,658.1" fill="none" stroke="#8a867c" stroke-width="0.79" stroke-linejoin="round"/>
<polygon points="1104.9,659.7 1106.7,652.8 1107.5,651.3 1118.0,639.4 1119.4,638.2 1121.0,637.9 1122.8,638.5 1142.0,649.1 1143.3,650.3 1146.5,654.6 1146.7,655.7 1146.0,656.9 1132.0,673.2 1130.8,674.2 1129.5,674.4 1128.0,673.9 1106.2,661.7 1105.1,660.8" fill="#45443f" stroke="#0c0c0b" stroke-width="1.3" stroke-linejoin="round" />
<polygon points="1127.5,666.3 1133.0,665.6 1132.7,673.5 1127.8,674.2" fill="#56544e" />
<polygon points="1118.0,639.4 1119.4,638.2 1121.0,637.9 1122.8,638.5 1142.0,649.1 1143.3,650.3 1143.5,651.6 1142.7,653.1 1132.3,665.2 1130.8,666.3 1129.2,666.6 1127.5,666.0 1108.2,655.2 1106.9,654.1 1106.7,652.8 1107.5,651.3" fill="url(#gKey)" stroke="#121110" stroke-width="1.0" stroke-linejoin="round" />
<polygon points="1163.6,655.0 1165.2,653.7 1166.9,653.4 1168.8,654.0 1199.1,670.7 1200.5,671.9 1200.8,673.3 1199.9,675.0 1177.2,701.9 1175.6,703.2 1173.9,703.5 1172.0,702.9 1141.6,685.8 1140.2,684.6 1139.9,683.2 1140.8,681.5" fill="none" stroke="#0e0d0c" stroke-width="3.54" stroke-linejoin="round"/>
<polygon points="1163.6,655.0 1165.2,653.7 1166.9,653.4 1168.8,654.0 1199.1,670.7 1200.5,671.9 1200.8,673.3 1199.9,675.0 1177.2,701.9 1175.6,703.2 1173.9,703.5 1172.0,702.9 1141.6,685.8 1140.2,684.6 1139.9,683.2 1140.8,681.5" fill="none" stroke="#8a867c" stroke-width="0.80" stroke-linejoin="round"/>
<polygon points="1146.8,683.2 1148.5,676.2 1149.4,674.6 1159.7,662.5 1161.2,661.4 1162.8,661.1 1164.6,661.6 1184.3,672.5 1185.6,673.6 1188.8,678.1 1189.0,679.2 1188.3,680.5 1174.4,697.0 1173.2,698.0 1171.8,698.2 1170.3,697.7 1148.1,685.3 1147.0,684.3" fill="#45443f" stroke="#0c0c0b" stroke-width="1.3" stroke-linejoin="round" />
<polygon points="1169.8,689.9 1175.4,689.3 1175.2,697.3 1170.2,698.0" fill="#56544e" />
<polygon points="1159.7,662.5 1161.2,661.4 1162.8,661.1 1164.6,661.6 1184.3,672.5 1185.6,673.6 1185.8,675.0 1185.0,676.5 1174.7,688.8 1173.2,690.0 1171.6,690.2 1169.8,689.6 1150.1,678.6 1148.8,677.5 1148.5,676.2 1149.4,674.6" fill="url(#gKey)" stroke="#121110" stroke-width="1.0" stroke-linejoin="round" />
<polygon points="1206.2,678.5 1207.8,677.2 1209.5,676.9 1211.5,677.5 1242.4,694.5 1243.8,695.8 1244.1,697.2 1243.2,698.9 1220.6,726.3 1219.1,727.6 1217.3,727.9 1215.4,727.3 1184.3,709.8 1182.9,708.6 1182.6,707.1 1183.5,705.4" fill="none" stroke="#0e0d0c" stroke-width="3.61" stroke-linejoin="round"/>
<polygon points="1206.2,678.5 1207.8,677.2 1209.5,676.9 1211.5,677.5 1242.4,694.5 1243.8,695.8 1244.1,697.2 1243.2,698.9 1220.6,726.3 1219.1,727.6 1217.3,727.9 1215.4,727.3 1184.3,709.8 1182.9,708.6 1182.6,707.1 1183.5,705.4" fill="none" stroke="#8a867c" stroke-width="0.82" stroke-linejoin="round"/>
<polygon points="1189.5,707.2 1191.3,700.0 1192.1,698.4 1202.4,686.2 1203.9,685.0 1205.5,684.7 1207.4,685.3 1227.4,696.4 1228.7,697.5 1232.0,702.1 1232.2,703.2 1231.5,704.5 1217.7,721.3 1216.5,722.3 1215.1,722.5 1213.6,722.0 1190.8,709.3 1189.7,708.3" fill="#45443f" stroke="#0c0c0b" stroke-width="1.3" stroke-linejoin="round" />
<polygon points="1213.0,714.1 1218.7,713.4 1218.5,721.6 1213.4,722.3" fill="#56544e" />
<polygon points="1202.4,686.2 1203.9,685.0 1205.5,684.7 1207.4,685.3 1227.4,696.4 1228.7,697.5 1229.0,698.9 1228.2,700.5 1217.9,712.9 1216.4,714.1 1214.8,714.4 1212.9,713.8 1192.9,702.6 1191.5,701.4 1191.3,700.0 1192.1,698.4" fill="url(#gKey)" stroke="#121110" stroke-width="1.0" stroke-linejoin="round" />
<polygon points="1249.1,702.8 1250.8,701.5 1252.6,701.1 1254.6,701.8 1308.4,731.5 1309.9,732.7 1310.2,734.2 1309.3,736.0 1287.9,762.8 1286.3,764.2 1284.5,764.6 1282.5,763.9 1228.5,733.5 1227.0,732.3 1226.7,730.7 1227.6,729.0" fill="none" stroke="#0e0d0c" stroke-width="3.70" stroke-linejoin="round"/>
<polygon points="1249.1,702.8 1250.8,701.5 1252.6,701.1 1254.6,701.8 1308.4,731.5 1309.9,732.7 1310.2,734.2 1309.3,736.0 1287.9,762.8 1286.3,764.2 1284.5,764.6 1282.5,763.9 1228.5,733.5 1227.0,732.3 1226.7,730.7 1227.6,729.0" fill="none" stroke="#8a867c" stroke-width="0.84" stroke-linejoin="round"/>
<polygon points="1233.6,730.8 1235.3,723.5 1236.2,721.9 1245.4,710.6 1246.9,709.4 1248.6,709.0 1250.5,709.7 1293.2,733.3 1294.6,734.5 1297.9,739.2 1298.1,740.3 1297.4,741.7 1284.6,757.7 1283.4,758.7 1282.0,759.0 1280.4,758.5 1234.9,733.0 1233.8,732.0" fill="#45443f" stroke="#0c0c0b" stroke-width="1.3" stroke-linejoin="round" />
<polygon points="1279.8,750.3 1285.6,749.7 1285.5,758.1 1280.3,758.8" fill="#56544e" />
<polygon points="1245.4,710.6 1246.9,709.4 1248.6,709.0 1250.5,709.7 1293.2,733.3 1294.6,734.5 1294.9,735.9 1294.0,737.6 1284.8,749.1 1283.3,750.3 1281.6,750.7 1279.8,750.0 1237.0,726.1 1235.6,724.9 1235.3,723.5 1236.2,721.9" fill="url(#gKey)" stroke="#121110" stroke-width="1.0" stroke-linejoin="round" />
<polygon points="1324.9,744.1 1326.5,742.7 1328.4,742.4 1330.4,743.0 1363.1,761.0 1364.7,762.3 1365.0,763.9 1364.1,765.7 1341.9,794.2 1340.3,795.6 1338.4,796.0 1336.4,795.3 1303.6,776.9 1302.0,775.5 1301.7,774.0 1302.6,772.1" fill="none" stroke="#0e0d0c" stroke-width="3.82" stroke-linejoin="round"/>
<polygon points="1324.9,744.1 1326.5,742.7 1328.4,742.4 1330.4,743.0 1363.1,761.0 1364.7,762.3 1365.0,763.9 1364.1,765.7 1341.9,794.2 1340.3,795.6 1338.4,796.0 1336.4,795.3 1303.6,776.9 1302.0,775.5 1301.7,774.0 1302.6,772.1" fill="none" stroke="#8a867c" stroke-width="0.87" stroke-linejoin="round"/>
<polygon points="1308.7,774.1 1310.4,766.5 1311.3,764.8 1321.3,752.2 1322.8,750.9 1324.6,750.5 1326.5,751.1 1347.7,762.9 1349.1,764.1 1352.5,768.9 1352.7,770.2 1352.0,771.6 1338.5,789.0 1337.2,790.1 1335.8,790.4 1334.2,789.8 1310.1,776.4 1308.9,775.3" fill="#45443f" stroke="#0c0c0b" stroke-width="1.3" stroke-linejoin="round" />
<polygon points="1333.4,781.4 1339.4,780.7 1339.4,789.4 1334.0,790.1" fill="#56544e" />
<polygon points="1321.3,752.2 1322.8,750.9 1324.6,750.5 1326.5,751.1 1347.7,762.9 1349.1,764.1 1349.4,765.6 1348.6,767.3 1338.6,780.1 1337.1,781.4 1335.3,781.8 1333.4,781.1 1312.2,769.2 1310.7,768.0 1310.4,766.5 1311.3,764.8" fill="url(#gKey)" stroke="#121110" stroke-width="1.0" stroke-linejoin="round" />
<polygon points="1371.1,769.7 1372.7,768.2 1374.6,767.8 1376.7,768.5 1410.1,786.9 1411.7,788.3 1412.0,789.9 1411.1,791.8 1389.1,820.7 1387.5,822.1 1385.6,822.5 1383.5,821.8 1350.0,803.0 1348.4,801.6 1348.1,800.0 1349.0,798.1" fill="none" stroke="#0e0d0c" stroke-width="3.90" stroke-linejoin="round"/>
<polygon points="1371.1,769.7 1372.7,768.2 1374.6,767.8 1376.7,768.5 1410.1,786.9 1411.7,788.3 1412.0,789.9 1411.1,791.8 1389.1,820.7 1387.5,822.1 1385.6,822.5 1383.5,821.8 1350.0,803.0 1348.4,801.6 1348.1,800.0 1349.0,798.1" fill="none" stroke="#8a867c" stroke-width="0.89" stroke-linejoin="round"/>
<polygon points="1355.0,800.1 1356.8,792.4 1357.7,790.7 1367.6,777.9 1369.1,776.5 1370.9,776.1 1372.8,776.8 1394.5,788.8 1396.0,790.0 1399.4,795.0 1399.6,796.2 1398.9,797.7 1385.5,815.3 1384.2,816.5 1382.7,816.8 1381.1,816.2 1356.5,802.5 1355.3,801.4" fill="#45443f" stroke="#0c0c0b" stroke-width="1.3" stroke-linejoin="round" />
<polygon points="1380.3,807.7 1386.5,806.9 1386.4,815.8 1380.9,816.5" fill="#56544e" />
<polygon points="1367.6,777.9 1369.1,776.5 1370.9,776.1 1372.8,776.8 1394.5,788.8 1396.0,790.0 1396.3,791.5 1395.4,793.3 1385.5,806.3 1384.0,807.6 1382.3,808.0 1380.3,807.3 1358.6,795.2 1357.1,793.9 1356.8,792.4 1357.7,790.7" fill="url(#gKey)" stroke="#121110" stroke-width="1.0" stroke-linejoin="round" />
<polygon points="781.2,499.3 782.6,498.3 784.1,498.1 785.8,498.7 811.1,513.0 812.3,514.1 812.5,515.2 811.6,516.5 787.5,540.9 786.1,541.9 784.6,542.1 782.9,541.5 757.5,526.8 756.3,525.8 756.2,524.6 757.0,523.3" fill="none" stroke="#0e0d0c" stroke-width="2.98" stroke-linejoin="round"/>
<polygon points="781.2,499.3 782.6,498.3 784.1,498.1 785.8,498.7 811.1,513.0 812.3,514.1 812.5,515.2 811.6,516.5 787.5,540.9 786.1,541.9 784.6,542.1 782.9,541.5 757.5,526.8 756.3,525.8 756.2,524.6 757.0,523.3" fill="none" stroke="#8a867c" stroke-width="0.68" stroke-linejoin="round"/>
<polygon points="762.9,524.4 764.7,518.5 765.5,517.3 776.7,506.0 778.0,505.1 779.4,504.9 781.0,505.5 797.4,514.8 798.5,515.8 801.5,519.5 801.7,520.4 801.0,521.4 786.1,536.4 785.0,537.2 783.8,537.3 782.5,536.9 763.9,526.2 763.0,525.4" fill="#45443f" stroke="#0c0c0b" stroke-width="1.3" stroke-linejoin="round" />
<polygon points="782.4,530.3 787.1,529.7 786.6,536.6 782.4,537.1" fill="#56544e" />
<polygon points="776.7,506.0 778.0,505.1 779.4,504.9 781.0,505.5 797.4,514.8 798.5,515.8 798.7,516.9 797.9,518.1 786.6,529.4 785.3,530.3 783.9,530.5 782.4,530.0 765.9,520.5 764.8,519.6 764.7,518.5 765.5,517.3" fill="url(#gKey)" stroke="#121110" stroke-width="1.0" stroke-linejoin="round" />
<polygon points="816.7,519.5 818.2,518.5 819.7,518.2 821.4,518.8 847.2,533.5 848.4,534.5 848.6,535.7 847.7,537.0 823.7,561.7 822.2,562.7 820.7,562.9 819.0,562.4 793.1,547.4 791.9,546.3 791.8,545.1 792.6,543.8" fill="none" stroke="#0e0d0c" stroke-width="3.04" stroke-linejoin="round"/>
<polygon points="816.7,519.5 818.2,518.5 819.7,518.2 821.4,518.8 847.2,533.5 848.4,534.5 848.6,535.7 847.7,537.0 823.7,561.7 822.2,562.7 820.7,562.9 819.0,562.4 793.1,547.4 791.9,546.3 791.8,545.1 792.6,543.8" fill="none" stroke="#8a867c" stroke-width="0.69" stroke-linejoin="round"/>
<polygon points="798.5,545.0 800.3,538.9 801.1,537.7 812.3,526.3 813.6,525.4 815.1,525.2 816.6,525.7 833.4,535.2 834.5,536.2 837.5,540.0 837.7,540.9 837.0,542.0 822.1,557.2 821.0,558.0 819.8,558.1 818.5,557.7 799.5,546.7 798.6,545.9" fill="#45443f" stroke="#0c0c0b" stroke-width="1.3" stroke-linejoin="round" />
<polygon points="818.3,550.9 823.1,550.4 822.7,557.3 818.4,557.9" fill="#56544e" />
<polygon points="812.3,526.3 813.6,525.4 815.1,525.2 816.6,525.7 833.4,535.2 834.5,536.2 834.7,537.3 833.8,538.6 822.7,550.0 821.3,551.0 819.9,551.2 818.3,550.6 801.5,541.0 800.4,540.0 800.3,538.9 801.1,537.7" fill="url(#gKey)" stroke="#121110" stroke-width="1.0" stroke-linejoin="round" />
<polygon points="851.8,542.8 853.4,541.7 855.0,541.4 856.8,542.1 1119.8,691.0 1121.1,692.2 1121.3,693.5 1120.5,695.0 1099.5,719.4 1098.0,720.6 1096.4,720.9 1094.6,720.2 831.4,568.3 830.1,567.1 829.9,565.8 830.8,564.4" fill="none" stroke="#0e0d0c" stroke-width="3.29" stroke-linejoin="round"/>
<polygon points="851.8,542.8 853.4,541.7 855.0,541.4 856.8,542.1 1119.8,691.0 1121.1,692.2 1121.3,693.5 1120.5,695.0 1099.5,719.4 1098.0,720.6 1096.4,720.9 1094.6,720.2 831.4,568.3 830.1,567.1 829.9,565.8 830.8,564.4" fill="none" stroke="#8a867c" stroke-width="0.75" stroke-linejoin="round"/>
<polygon points="1093.3,714.8 837.6,567.8 836.6,566.9 836.5,565.9 838.2,559.3 839.1,558.0 847.2,549.6 848.7,548.6 850.3,548.4 851.9,548.9 1105.1,693.0 1106.3,694.1 1109.5,698.2 1109.7,699.2 1109.0,700.4 1097.1,714.2 1096.0,715.1 1094.7,715.3" fill="#45443f" stroke="#0c0c0b" stroke-width="1.3" stroke-linejoin="round" />
<polygon points="1092.9,707.4 1098.1,706.8 1097.8,714.5 1093.2,715.1" fill="#56544e" />
<polygon points="847.2,549.6 848.7,548.6 850.3,548.4 851.9,548.9 1105.1,693.0 1106.3,694.1 1106.5,695.4 1105.7,696.8 1097.5,706.4 1096.1,707.4 1094.6,707.7 1092.9,707.1 839.6,561.6 838.4,560.6 838.2,559.3 839.1,558.0" fill="url(#gKey)" stroke="#121110" stroke-width="1.0" stroke-linejoin="round" />
<polygon points="1129.2,696.9 1130.8,695.6 1132.6,695.3 1134.5,695.9 1164.8,713.1 1166.3,714.4 1166.5,715.8 1165.6,717.5 1142.3,745.1 1140.8,746.4 1139.0,746.7 1137.1,746.1 1106.6,728.5 1105.2,727.2 1105.0,725.7 1105.9,724.1" fill="none" stroke="#0e0d0c" stroke-width="3.57" stroke-linejoin="round"/>
<polygon points="1129.2,696.9 1130.8,695.6 1132.6,695.3 1134.5,695.9 1164.8,713.1 1166.3,714.4 1166.5,715.8 1165.6,717.5 1142.3,745.1 1140.8,746.4 1139.0,746.7 1137.1,746.1 1106.6,728.5 1105.2,727.2 1105.0,725.7 1105.9,724.1" fill="none" stroke="#8a867c" stroke-width="0.81" stroke-linejoin="round"/>
<polygon points="1111.9,725.8 1113.7,718.7 1114.6,717.1 1125.2,704.7 1126.7,703.5 1128.3,703.2 1130.1,703.8 1149.8,715.0 1151.1,716.1 1154.4,720.6 1154.6,721.8 1153.9,723.1 1139.6,740.0 1138.4,741.0 1137.0,741.2 1135.5,740.7 1113.2,727.9 1112.1,726.9" fill="#45443f" stroke="#0c0c0b" stroke-width="1.3" stroke-linejoin="round" />
<polygon points="1135.0,732.8 1140.6,732.2 1140.4,740.3 1135.3,741.0" fill="#56544e" />
<polygon points="1125.2,704.7 1126.7,703.5 1128.3,703.2 1130.1,703.8 1149.8,715.0 1151.1,716.1 1151.4,717.5 1150.5,719.1 1139.9,731.7 1138.4,732.9 1136.8,733.1 1135.0,732.5 1115.3,721.2 1113.9,720.0 1113.7,718.7 1114.6,717.1" fill="url(#gKey)" stroke="#121110" stroke-width="1.0" stroke-linejoin="round" />
<polygon points="1312.6,802.9 1314.2,801.4 1316.1,801.0 1318.2,801.7 1351.4,820.5 1352.9,821.9 1353.3,823.5 1352.3,825.4 1329.7,854.9 1328.0,856.3 1326.1,856.7 1324.1,856.0 1290.7,836.7 1289.2,835.3 1288.9,833.7 1289.8,831.8" fill="none" stroke="#0e0d0c" stroke-width="3.90" stroke-linejoin="round"/>
<polygon points="1312.6,802.9 1314.2,801.4 1316.1,801.0 1318.2,801.7 1351.4,820.5 1352.9,821.9 1353.3,823.5 1352.3,825.4 1329.7,854.9 1328.0,856.3 1326.1,856.7 1324.1,856.0 1290.7,836.7 1289.2,835.3 1288.9,833.7 1289.8,831.8" fill="none" stroke="#8a867c" stroke-width="0.89" stroke-linejoin="round"/>
<polygon points="1295.9,833.8 1297.7,826.1 1298.6,824.3 1308.9,811.2 1310.4,809.9 1312.2,809.5 1314.1,810.2 1335.6,822.4 1337.1,823.7 1340.5,828.6 1340.8,829.9 1340.1,831.4 1326.2,849.4 1324.9,850.5 1323.4,850.8 1321.8,850.2 1297.4,836.2 1296.2,835.1" fill="#45443f" stroke="#0c0c0b" stroke-width="1.3" stroke-linejoin="round" />
<polygon points="1321.1,841.7 1327.2,841.0 1327.1,849.8 1321.6,850.5" fill="#56544e" />
<polygon points="1308.9,811.2 1310.4,809.9 1312.2,809.5 1314.1,810.2 1335.6,822.4 1337.1,823.7 1337.4,825.2 1336.6,827.0 1326.3,840.3 1324.8,841.6 1323.0,842.0 1321.1,841.3 1299.5,828.9 1298.0,827.6 1297.7,826.1 1298.6,824.3" fill="url(#gKey)" stroke="#121110" stroke-width="1.0" stroke-linejoin="round" />
<ellipse cx="1358.8" cy="424.5" rx="4.35" ry="3.00" transform="rotate(12 1358.8 424.5)" fill="#5a5750" stroke="#1c1b19" stroke-width="0.9"/>
<ellipse cx="1358.2" cy="423.8" rx="3.29" ry="1.93" transform="rotate(12 1358.8 424.5)" fill="#46443f"/>
<ellipse cx="1350.0" cy="432.6" rx="4.36" ry="3.01" transform="rotate(12 1350.0 432.6)" fill="#5a5750" stroke="#1c1b19" stroke-width="0.9"/>
<ellipse cx="1349.4" cy="431.9" rx="3.30" ry="1.94" transform="rotate(12 1350.0 432.6)" fill="#46443f"/>
<ellipse cx="1341.1" cy="440.7" rx="4.38" ry="3.02" transform="rotate(12 1341.1 440.7)" fill="#5a5750" stroke="#1c1b19" stroke-width="0.9"/>
<ellipse cx="1340.5" cy="440.0" rx="3.31" ry="1.95" transform="rotate(12 1341.1 440.7)" fill="#46443f"/>
<ellipse cx="1332.1" cy="448.9" rx="4.39" ry="3.03" transform="rotate(12 1332.1 448.9)" fill="#5a5750" stroke="#1c1b19" stroke-width="0.9"/>
<ellipse cx="1331.5" cy="448.2" rx="3.32" ry="1.95" transform="rotate(12 1332.1 448.9)" fill="#46443f"/>
<ellipse cx="1323.1" cy="457.2" rx="4.41" ry="3.04" transform="rotate(12 1323.1 457.2)" fill="#5a5750" stroke="#1c1b19" stroke-width="0.9"/>
<ellipse cx="1322.5" cy="456.5" rx="3.33" ry="1.96" transform="rotate(12 1323.1 457.2)" fill="#46443f"/>
<ellipse cx="1314.0" cy="465.5" rx="4.42" ry="3.05" transform="rotate(12 1314.0 465.5)" fill="#5a5750" stroke="#1c1b19" stroke-width="0.9"/>
<ellipse cx="1313.4" cy="464.8" rx="3.34" ry="1.97" transform="rotate(12 1314.0 465.5)" fill="#46443f"/>
<ellipse cx="1372.8" cy="431.1" rx="4.38" ry="3.02" transform="rotate(12 1372.8 431.1)" fill="#5a5750" stroke="#1c1b19" stroke-width="0.9"/>
<ellipse cx="1372.2" cy="430.4" rx="3.31" ry="1.95" transform="rotate(12 1372.8 431.1)" fill="#46443f"/>
<ellipse cx="1364.0" cy="439.2" rx="4.39" ry="3.03" transform="rotate(12 1364.0 439.2)" fill="#5a5750" stroke="#1c1b19" stroke-width="0.9"/>
<ellipse cx="1363.4" cy="438.5" rx="3.32" ry="1.95" transform="rotate(12 1364.0 439.2)" fill="#46443f"/>
<ellipse cx="1355.1" cy="447.4" rx="4.41" ry="3.04" transform="rotate(12 1355.1 447.4)" fill="#5a5750" stroke="#1c1b19" stroke-width="0.9"/>
<ellipse cx="1354.6" cy="446.7" rx="3.33" ry="1.96" transform="rotate(12 1355.1 447.4)" fill="#46443f"/>
<ellipse cx="1346.2" cy="455.7" rx="4.42" ry="3.05" transform="rotate(12 1346.2 455.7)" fill="#5a5750" stroke="#1c1b19" stroke-width="0.9"/>
<ellipse cx="1345.6" cy="455.0" rx="3.34" ry="1.97" transform="rotate(12 1346.2 455.7)" fill="#46443f"/>
<ellipse cx="1337.2" cy="464.0" rx="4.44" ry="3.06" transform="rotate(12 1337.2 464.0)" fill="#5a5750" stroke="#1c1b19" stroke-width="0.9"/>
<ellipse cx="1336.6" cy="463.3" rx="3.35" ry="1.97" transform="rotate(12 1337.2 464.0)" fill="#46443f"/>
<ellipse cx="1328.2" cy="472.4" rx="4.45" ry="3.07" transform="rotate(12 1328.2 472.4)" fill="#5a5750" stroke="#1c1b19" stroke-width="0.9"/>
<ellipse cx="1327.6" cy="471.7" rx="3.36" ry="1.98" transform="rotate(12 1328.2 472.4)" fill="#46443f"/>
<ellipse cx="1386.9" cy="437.8" rx="4.41" ry="3.04" transform="rotate(12 1386.9 437.8)" fill="#5a5750" stroke="#1c1b19" stroke-width="0.9"/>
<ellipse cx="1386.3" cy="437.1" rx="3.33" ry="1.96" transform="rotate(12 1386.9 437.8)" fill="#46443f"/>
<ellipse cx="1378.1" cy="445.9" rx="4.42" ry="3.05" transform="rotate(12 1378.1 445.9)" fill="#5a5750" stroke="#1c1b19" stroke-width="0.9"/>
<ellipse cx="1377.5" cy="445.2" rx="3.34" ry="1.97" transform="rotate(12 1378.1 445.9)" fill="#46443f"/>
<ellipse cx="1369.3" cy="454.2" rx="4.44" ry="3.06" transform="rotate(12 1369.3 454.2)" fill="#5a5750" stroke="#1c1b19" stroke-width="0.9"/>
<ellipse cx="1368.7" cy="453.5" rx="3.35" ry="1.97" transform="rotate(12 1369.3 454.2)" fill="#46443f"/>
<ellipse cx="1360.4" cy="462.5" rx="4.45" ry="3.07" transform="rotate(12 1360.4 462.5)" fill="#5a5750" stroke="#1c1b19" stroke-width="0.9"/>
<ellipse cx="1359.8" cy="461.8" rx="3.36" ry="1.98" transform="rotate(12 1360.4 462.5)" fill="#46443f"/>
<ellipse cx="1351.5" cy="470.9" rx="4.47" ry="3.08" transform="rotate(12 1351.5 470.9)" fill="#5a5750" stroke="#1c1b19" stroke-width="0.9"/>
<ellipse cx="1350.9" cy="470.2" rx="3.38" ry="1.99" transform="rotate(12 1351.5 470.9)" fill="#46443f"/>
<ellipse cx="1342.4" cy="479.3" rx="4.48" ry="3.09" transform="rotate(12 1342.4 479.3)" fill="#5a5750" stroke="#1c1b19" stroke-width="0.9"/>
<ellipse cx="1341.8" cy="478.6" rx="3.39" ry="1.99" transform="rotate(12 1342.4 479.3)" fill="#46443f"/>
<ellipse cx="1401.1" cy="444.5" rx="4.44" ry="3.06" transform="rotate(12 1401.1 444.5)" fill="#5a5750" stroke="#1c1b19" stroke-width="0.9"/>
<ellipse cx="1400.5" cy="443.8" rx="3.35" ry="1.97" transform="rotate(12 1401.1 444.5)" fill="#46443f"/>
<ellipse cx="1392.4" cy="452.7" rx="4.45" ry="3.07" transform="rotate(12 1392.4 452.7)" fill="#5a5750" stroke="#1c1b19" stroke-width="0.9"/>
<ellipse cx="1391.8" cy="452.0" rx="3.36" ry="1.98" transform="rotate(12 1392.4 452.7)" fill="#46443f"/>
<ellipse cx="1383.6" cy="461.0" rx="4.47" ry="3.08" transform="rotate(12 1383.6 461.0)" fill="#5a5750" stroke="#1c1b19" stroke-width="0.9"/>
<ellipse cx="1383.0" cy="460.3" rx="3.38" ry="1.99" transform="rotate(12 1383.6 461.0)" fill="#46443f"/>
<ellipse cx="1374.7" cy="469.4" rx="4.48" ry="3.09" transform="rotate(12 1374.7 469.4)" fill="#5a5750" stroke="#1c1b19" stroke-width="0.9"/>
<ellipse cx="1374.1" cy="468.7" rx="3.39" ry="1.99" transform="rotate(12 1374.7 469.4)" fill="#46443f"/>
<ellipse cx="1365.8" cy="477.8" rx="4.50" ry="3.10" transform="rotate(12 1365.8 477.8)" fill="#5a5750" stroke="#1c1b19" stroke-width="0.9"/>
<ellipse cx="1365.2" cy="477.1" rx="3.40" ry="2.00" transform="rotate(12 1365.8 477.8)" fill="#46443f"/>
<ellipse cx="1356.8" cy="486.3" rx="4.51" ry="3.11" transform="rotate(12 1356.8 486.3)" fill="#5a5750" stroke="#1c1b19" stroke-width="0.9"/>
<ellipse cx="1356.2" cy="485.6" rx="3.41" ry="2.01" transform="rotate(12 1356.8 486.3)" fill="#46443f"/>
<ellipse cx="1415.4" cy="451.2" rx="4.47" ry="3.08" transform="rotate(12 1415.4 451.2)" fill="#5a5750" stroke="#1c1b19" stroke-width="0.9"/>
<ellipse cx="1414.8" cy="450.5" rx="3.38" ry="1.99" transform="rotate(12 1415.4 451.2)" fill="#46443f"/>
<ellipse cx="1406.7" cy="459.5" rx="4.48" ry="3.09" transform="rotate(12 1406.7 459.5)" fill="#5a5750" stroke="#1c1b19" stroke-width="0.9"/>
<ellipse cx="1406.1" cy="458.8" rx="3.39" ry="1.99" transform="rotate(12 1406.7 459.5)" fill="#46443f"/>
<ellipse cx="1397.9" cy="467.8" rx="4.50" ry="3.10" transform="rotate(12 1397.9 467.8)" fill="#5a5750" stroke="#1c1b19" stroke-width="0.9"/>
<ellipse cx="1397.3" cy="467.1" rx="3.40" ry="2.00" transform="rotate(12 1397.9 467.8)" fill="#46443f"/>
<ellipse cx="1389.1" cy="476.3" rx="4.51" ry="3.11" transform="rotate(12 1389.1 476.3)" fill="#5a5750" stroke="#1c1b19" stroke-width="0.9"/>
<ellipse cx="1388.5" cy="475.6" rx="3.41" ry="2.01" transform="rotate(12 1389.1 476.3)" fill="#46443f"/>
<ellipse cx="1380.2" cy="484.8" rx="4.53" ry="3.12" transform="rotate(12 1380.2 484.8)" fill="#5a5750" stroke="#1c1b19" stroke-width="0.9"/>
<ellipse cx="1379.6" cy="484.1" rx="3.42" ry="2.01" transform="rotate(12 1380.2 484.8)" fill="#46443f"/>
<ellipse cx="1371.2" cy="493.4" rx="4.54" ry="3.13" transform="rotate(12 1371.2 493.4)" fill="#5a5750" stroke="#1c1b19" stroke-width="0.9"/>
<ellipse cx="1370.6" cy="492.6" rx="3.43" ry="2.02" transform="rotate(12 1371.2 493.4)" fill="#46443f"/>
<ellipse cx="1429.7" cy="458.0" rx="4.50" ry="3.10" transform="rotate(12 1429.7 458.0)" fill="#5a5750" stroke="#1c1b19" stroke-width="0.9"/>
<ellipse cx="1429.1" cy="457.3" rx="3.40" ry="2.00" transform="rotate(12 1429.7 458.0)" fill="#46443f"/>
<ellipse cx="1421.1" cy="466.3" rx="4.51" ry="3.11" transform="rotate(12 1421.1 466.3)" fill="#5a5750" stroke="#1c1b19" stroke-width="0.9"/>
<ellipse cx="1420.5" cy="465.6" rx="3.41" ry="2.01" transform="rotate(12 1421.1 466.3)" fill="#46443f"/>
<ellipse cx="1412.4" cy="474.8" rx="4.53" ry="3.12" transform="rotate(12 1412.4 474.8)" fill="#5a5750" stroke="#1c1b19" stroke-width="0.9"/>
<ellipse cx="1411.8" cy="474.0" rx="3.42" ry="2.01" transform="rotate(12 1412.4 474.8)" fill="#46443f"/>
<ellipse cx="1403.6" cy="483.2" rx="4.54" ry="3.13" transform="rotate(12 1403.6 483.2)" fill="#5a5750" stroke="#1c1b19" stroke-width="0.9"/>
<ellipse cx="1403.0" cy="482.5" rx="3.43" ry="2.02" transform="rotate(12 1403.6 483.2)" fill="#46443f"/>
<ellipse cx="1394.7" cy="491.8" rx="4.56" ry="3.14" transform="rotate(12 1394.7 491.8)" fill="#5a5750" stroke="#1c1b19" stroke-width="0.9"/>
<ellipse cx="1394.1" cy="491.1" rx="3.45" ry="2.03" transform="rotate(12 1394.7 491.8)" fill="#46443f"/>
<ellipse cx="1385.8" cy="500.4" rx="4.58" ry="3.15" transform="rotate(12 1385.8 500.4)" fill="#5a5750" stroke="#1c1b19" stroke-width="0.9"/>
<ellipse cx="1385.2" cy="499.7" rx="3.46" ry="2.03" transform="rotate(12 1385.8 500.4)" fill="#46443f"/>
<ellipse cx="1444.2" cy="464.8" rx="4.53" ry="3.12" transform="rotate(12 1444.2 464.8)" fill="#5a5750" stroke="#1c1b19" stroke-width="0.9"/>
<ellipse cx="1443.6" cy="464.1" rx="3.42" ry="2.01" transform="rotate(12 1444.2 464.8)" fill="#46443f"/>
<ellipse cx="1435.6" cy="473.2" rx="4.54" ry="3.13" transform="rotate(12 1435.6 473.2)" fill="#5a5750" stroke="#1c1b19" stroke-width="0.9"/>
<ellipse cx="1435.0" cy="472.5" rx="3.43" ry="2.02" transform="rotate(12 1435.6 473.2)" fill="#46443f"/>
<ellipse cx="1426.9" cy="481.7" rx="4.56" ry="3.14" transform="rotate(12 1426.9 481.7)" fill="#5a5750" stroke="#1c1b19" stroke-width="0.9"/>
<ellipse cx="1426.3" cy="481.0" rx="3.45" ry="2.03" transform="rotate(12 1426.9 481.7)" fill="#46443f"/>
<ellipse cx="1418.2" cy="490.3" rx="4.58" ry="3.15" transform="rotate(12 1418.2 490.3)" fill="#5a5750" stroke="#1c1b19" stroke-width="0.9"/>
<ellipse cx="1417.6" cy="489.5" rx="3.46" ry="2.03" transform="rotate(12 1418.2 490.3)" fill="#46443f"/>
<ellipse cx="1409.4" cy="498.9" rx="4.59" ry="3.16" transform="rotate(12 1409.4 498.9)" fill="#5a5750" stroke="#1c1b19" stroke-width="0.9"/>
<ellipse cx="1408.7" cy="498.2" rx="3.47" ry="2.04" transform="rotate(12 1409.4 498.9)" fill="#46443f"/>
<ellipse cx="1400.4" cy="507.6" rx="4.61" ry="3.17" transform="rotate(12 1400.4 507.6)" fill="#5a5750" stroke="#1c1b19" stroke-width="0.9"/>
<ellipse cx="1399.8" cy="506.9" rx="3.48" ry="2.05" transform="rotate(12 1400.4 507.6)" fill="#46443f"/>
<ellipse cx="1458.8" cy="471.7" rx="4.56" ry="3.14" transform="rotate(12 1458.8 471.7)" fill="#5a5750" stroke="#1c1b19" stroke-width="0.9"/>
<ellipse cx="1458.2" cy="471.0" rx="3.44" ry="2.03" transform="rotate(12 1458.8 471.7)" fill="#46443f"/>
<ellipse cx="1450.2" cy="480.2" rx="4.57" ry="3.15" transform="rotate(12 1450.2 480.2)" fill="#5a5750" stroke="#1c1b19" stroke-width="0.9"/>
<ellipse cx="1449.6" cy="479.5" rx="3.46" ry="2.03" transform="rotate(12 1450.2 480.2)" fill="#46443f"/>
<ellipse cx="1441.6" cy="488.7" rx="4.59" ry="3.16" transform="rotate(12 1441.6 488.7)" fill="#5a5750" stroke="#1c1b19" stroke-width="0.9"/>
<ellipse cx="1441.0" cy="488.0" rx="3.47" ry="2.04" transform="rotate(12 1441.6 488.7)" fill="#46443f"/>
<ellipse cx="1432.9" cy="497.3" rx="4.61" ry="3.17" transform="rotate(12 1432.9 497.3)" fill="#5a5750" stroke="#1c1b19" stroke-width="0.9"/>
<ellipse cx="1432.3" cy="496.6" rx="3.48" ry="2.05" transform="rotate(12 1432.9 497.3)" fill="#46443f"/>
<ellipse cx="1424.1" cy="506.0" rx="4.62" ry="3.18" transform="rotate(12 1424.1 506.0)" fill="#5a5750" stroke="#1c1b19" stroke-width="0.9"/>
<ellipse cx="1423.5" cy="505.3" rx="3.49" ry="2.05" transform="rotate(12 1424.1 506.0)" fill="#46443f"/>
<ellipse cx="1415.2" cy="514.8" rx="4.64" ry="3.20" transform="rotate(12 1415.2 514.8)" fill="#5a5750" stroke="#1c1b19" stroke-width="0.9"/>
<ellipse cx="1414.6" cy="514.0" rx="3.51" ry="2.06" transform="rotate(12 1415.2 514.8)" fill="#46443f"/>
<ellipse cx="1473.5" cy="478.6" rx="4.59" ry="3.16" transform="rotate(12 1473.5 478.6)" fill="#5a5750" stroke="#1c1b19" stroke-width="0.9"/>
<ellipse cx="1472.9" cy="477.9" rx="3.47" ry="2.04" transform="rotate(12 1473.5 478.6)" fill="#46443f"/>
<ellipse cx="1465.0" cy="487.2" rx="4.61" ry="3.17" transform="rotate(12 1465.0 487.2)" fill="#5a5750" stroke="#1c1b19" stroke-width="0.9"/>
<ellipse cx="1464.4" cy="486.4" rx="3.48" ry="2.05" transform="rotate(12 1465.0 487.2)" fill="#46443f"/>
<ellipse cx="1456.4" cy="495.8" rx="4.62" ry="3.18" transform="rotate(12 1456.4 495.8)" fill="#5a5750" stroke="#1c1b19" stroke-width="0.9"/>
<ellipse cx="1455.7" cy="495.0" rx="3.49" ry="2.05" transform="rotate(12 1456.4 495.8)" fill="#46443f"/>
<ellipse cx="1447.7" cy="504.4" rx="4.64" ry="3.20" transform="rotate(12 1447.7 504.4)" fill="#5a5750" stroke="#1c1b19" stroke-width="0.9"/>
<ellipse cx="1447.0" cy="503.7" rx="3.50" ry="2.06" transform="rotate(12 1447.7 504.4)" fill="#46443f"/>
<ellipse cx="1438.9" cy="513.2" rx="4.66" ry="3.21" transform="rotate(12 1438.9 513.2)" fill="#5a5750" stroke="#1c1b19" stroke-width="0.9"/>
<ellipse cx="1438.3" cy="512.4" rx="3.52" ry="2.07" transform="rotate(12 1438.9 513.2)" fill="#46443f"/>
<ellipse cx="1430.1" cy="522.0" rx="4.67" ry="3.22" transform="rotate(12 1430.1 522.0)" fill="#5a5750" stroke="#1c1b19" stroke-width="0.9"/>
<ellipse cx="1429.4" cy="521.3" rx="3.53" ry="2.08" transform="rotate(12 1430.1 522.0)" fill="#46443f"/>
<ellipse cx="1488.3" cy="485.6" rx="4.62" ry="3.18" transform="rotate(12 1488.3 485.6)" fill="#5a5750" stroke="#1c1b19" stroke-width="0.9"/>
<ellipse cx="1487.7" cy="484.9" rx="3.49" ry="2.05" transform="rotate(12 1488.3 485.6)" fill="#46443f"/>
<ellipse cx="1479.8" cy="494.2" rx="4.64" ry="3.20" transform="rotate(12 1479.8 494.2)" fill="#5a5750" stroke="#1c1b19" stroke-width="0.9"/>
<ellipse cx="1479.2" cy="493.5" rx="3.50" ry="2.06" transform="rotate(12 1479.8 494.2)" fill="#46443f"/>
<ellipse cx="1471.2" cy="502.9" rx="4.65" ry="3.21" transform="rotate(12 1471.2 502.9)" fill="#5a5750" stroke="#1c1b19" stroke-width="0.9"/>
<ellipse cx="1470.6" cy="502.1" rx="3.52" ry="2.07" transform="rotate(12 1471.2 502.9)" fill="#46443f"/>
<ellipse cx="1462.6" cy="511.6" rx="4.67" ry="3.22" transform="rotate(12 1462.6 511.6)" fill="#5a5750" stroke="#1c1b19" stroke-width="0.9"/>
<ellipse cx="1461.9" cy="510.9" rx="3.53" ry="2.08" transform="rotate(12 1462.6 511.6)" fill="#46443f"/>
<ellipse cx="1453.8" cy="520.4" rx="4.69" ry="3.23" transform="rotate(12 1453.8 520.4)" fill="#5a5750" stroke="#1c1b19" stroke-width="0.9"/>
<ellipse cx="1453.2" cy="519.7" rx="3.54" ry="2.08" transform="rotate(12 1453.8 520.4)" fill="#46443f"/>
<ellipse cx="1445.0" cy="529.3" rx="4.70" ry="3.24" transform="rotate(12 1445.0 529.3)" fill="#5a5750" stroke="#1c1b19" stroke-width="0.9"/>
<ellipse cx="1444.4" cy="528.5" rx="3.55" ry="2.09" transform="rotate(12 1445.0 529.3)" fill="#46443f"/>
<ellipse cx="1503.2" cy="492.6" rx="4.65" ry="3.21" transform="rotate(12 1503.2 492.6)" fill="#5a5750" stroke="#1c1b19" stroke-width="0.9"/>
<ellipse cx="1502.6" cy="491.9" rx="3.52" ry="2.07" transform="rotate(12 1503.2 492.6)" fill="#46443f"/>
<ellipse cx="1494.7" cy="501.3" rx="4.67" ry="3.22" transform="rotate(12 1494.7 501.3)" fill="#5a5750" stroke="#1c1b19" stroke-width="0.9"/>
<ellipse cx="1494.1" cy="500.6" rx="3.53" ry="2.08" transform="rotate(12 1494.7 501.3)" fill="#46443f"/>
<ellipse cx="1486.2" cy="510.0" rx="4.69" ry="3.23" transform="rotate(12 1486.2 510.0)" fill="#5a5750" stroke="#1c1b19" stroke-width="0.9"/>
<ellipse cx="1485.5" cy="509.3" rx="3.54" ry="2.08" transform="rotate(12 1486.2 510.0)" fill="#46443f"/>
<ellipse cx="1477.5" cy="518.8" rx="4.70" ry="3.24" transform="rotate(12 1477.5 518.8)" fill="#5a5750" stroke="#1c1b19" stroke-width="0.9"/>
<ellipse cx="1476.9" cy="518.1" rx="3.55" ry="2.09" transform="rotate(12 1477.5 518.8)" fill="#46443f"/>
<ellipse cx="1468.9" cy="527.7" rx="4.72" ry="3.25" transform="rotate(12 1468.9 527.7)" fill="#5a5750" stroke="#1c1b19" stroke-width="0.9"/>
<ellipse cx="1468.2" cy="526.9" rx="3.57" ry="2.10" transform="rotate(12 1468.9 527.7)" fill="#46443f"/>
<ellipse cx="1460.1" cy="536.6" rx="4.74" ry="3.26" transform="rotate(12 1460.1 536.6)" fill="#5a5750" stroke="#1c1b19" stroke-width="0.9"/>
<ellipse cx="1459.5" cy="535.9" rx="3.58" ry="2.11" transform="rotate(12 1460.1 536.6)" fill="#46443f"/>
<ellipse cx="1518.2" cy="499.7" rx="4.69" ry="3.23" transform="rotate(12 1518.2 499.7)" fill="#5a5750" stroke="#1c1b19" stroke-width="0.9"/>
<ellipse cx="1517.5" cy="499.0" rx="3.54" ry="2.08" transform="rotate(12 1518.2 499.7)" fill="#46443f"/>
<ellipse cx="1509.7" cy="508.4" rx="4.70" ry="3.24" transform="rotate(12 1509.7 508.4)" fill="#5a5750" stroke="#1c1b19" stroke-width="0.9"/>
<ellipse cx="1509.1" cy="507.7" rx="3.55" ry="2.09" transform="rotate(12 1509.7 508.4)" fill="#46443f"/>
<ellipse cx="1501.2" cy="517.2" rx="4.72" ry="3.25" transform="rotate(12 1501.2 517.2)" fill="#5a5750" stroke="#1c1b19" stroke-width="0.9"/>
<ellipse cx="1500.6" cy="516.5" rx="3.57" ry="2.10" transform="rotate(12 1501.2 517.2)" fill="#46443f"/>
<ellipse cx="1492.6" cy="526.0" rx="4.74" ry="3.26" transform="rotate(12 1492.6 526.0)" fill="#5a5750" stroke="#1c1b19" stroke-width="0.9"/>
<ellipse cx="1492.0" cy="525.3" rx="3.58" ry="2.11" transform="rotate(12 1492.6 526.0)" fill="#46443f"/>
<ellipse cx="1484.0" cy="535.0" rx="4.75" ry="3.27" transform="rotate(12 1484.0 535.0)" fill="#5a5750" stroke="#1c1b19" stroke-width="0.9"/>
<ellipse cx="1483.4" cy="534.2" rx="3.59" ry="2.11" transform="rotate(12 1484.0 535.0)" fill="#46443f"/>
<ellipse cx="1475.3" cy="544.0" rx="4.77" ry="3.29" transform="rotate(12 1475.3 544.0)" fill="#5a5750" stroke="#1c1b19" stroke-width="0.9"/>
<ellipse cx="1474.6" cy="543.2" rx="3.61" ry="2.12" transform="rotate(12 1475.3 544.0)" fill="#46443f"/>
<ellipse cx="1533.3" cy="506.8" rx="4.72" ry="3.25" transform="rotate(12 1533.3 506.8)" fill="#5a5750" stroke="#1c1b19" stroke-width="0.9"/>
<ellipse cx="1532.6" cy="506.1" rx="3.56" ry="2.10" transform="rotate(12 1533.3 506.8)" fill="#46443f"/>
<ellipse cx="1524.9" cy="515.6" rx="4.74" ry="3.26" transform="rotate(12 1524.9 515.6)" fill="#5a5750" stroke="#1c1b19" stroke-width="0.9"/>
<ellipse cx="1524.2" cy="514.9" rx="3.58" ry="2.10" transform="rotate(12 1524.9 515.6)" fill="#46443f"/>
<ellipse cx="1516.4" cy="524.4" rx="4.75" ry="3.27" transform="rotate(12 1516.4 524.4)" fill="#5a5750" stroke="#1c1b19" stroke-width="0.9"/>
<ellipse cx="1515.8" cy="523.7" rx="3.59" ry="2.11" transform="rotate(12 1516.4 524.4)" fill="#46443f"/>
<ellipse cx="1507.9" cy="533.4" rx="4.77" ry="3.29" transform="rotate(12 1507.9 533.4)" fill="#5a5750" stroke="#1c1b19" stroke-width="0.9"/>
<ellipse cx="1507.2" cy="532.6" rx="3.60" ry="2.12" transform="rotate(12 1507.9 533.4)" fill="#46443f"/>
<ellipse cx="1499.2" cy="542.4" rx="4.79" ry="3.30" transform="rotate(12 1499.2 542.4)" fill="#5a5750" stroke="#1c1b19" stroke-width="0.9"/>
<ellipse cx="1498.6" cy="541.6" rx="3.62" ry="2.13" transform="rotate(12 1499.2 542.4)" fill="#46443f"/>
<ellipse cx="1490.5" cy="551.4" rx="4.81" ry="3.31" transform="rotate(12 1490.5 551.4)" fill="#5a5750" stroke="#1c1b19" stroke-width="0.9"/>
<ellipse cx="1489.9" cy="550.7" rx="3.63" ry="2.14" transform="rotate(12 1490.5 551.4)" fill="#46443f"/>
<ellipse cx="1548.5" cy="514.0" rx="4.75" ry="3.27" transform="rotate(12 1548.5 514.0)" fill="#5a5750" stroke="#1c1b19" stroke-width="0.9"/>
<ellipse cx="1547.8" cy="513.3" rx="3.59" ry="2.11" transform="rotate(12 1548.5 514.0)" fill="#46443f"/>
<ellipse cx="1540.1" cy="522.8" rx="4.77" ry="3.28" transform="rotate(12 1540.1 522.8)" fill="#5a5750" stroke="#1c1b19" stroke-width="0.9"/>
<ellipse cx="1539.5" cy="522.1" rx="3.60" ry="2.12" transform="rotate(12 1540.1 522.8)" fill="#46443f"/>
<ellipse cx="1531.7" cy="531.7" rx="4.79" ry="3.30" transform="rotate(12 1531.7 531.7)" fill="#5a5750" stroke="#1c1b19" stroke-width="0.9"/>
<ellipse cx="1531.0" cy="531.0" rx="3.62" ry="2.13" transform="rotate(12 1531.7 531.7)" fill="#46443f"/>
<ellipse cx="1523.2" cy="540.7" rx="4.80" ry="3.31" transform="rotate(12 1523.2 540.7)" fill="#5a5750" stroke="#1c1b19" stroke-width="0.9"/>
<ellipse cx="1522.5" cy="540.0" rx="3.63" ry="2.13" transform="rotate(12 1523.2 540.7)" fill="#46443f"/>
<ellipse cx="1514.6" cy="549.8" rx="4.82" ry="3.32" transform="rotate(12 1514.6 549.8)" fill="#5a5750" stroke="#1c1b19" stroke-width="0.9"/>
<ellipse cx="1513.9" cy="549.0" rx="3.64" ry="2.14" transform="rotate(12 1514.6 549.8)" fill="#46443f"/>
<ellipse cx="1505.9" cy="558.9" rx="4.84" ry="3.33" transform="rotate(12 1505.9 558.9)" fill="#5a5750" stroke="#1c1b19" stroke-width="0.9"/>
<ellipse cx="1505.3" cy="558.2" rx="3.66" ry="2.15" transform="rotate(12 1505.9 558.9)" fill="#46443f"/>
<ellipse cx="1563.8" cy="521.2" rx="4.78" ry="3.30" transform="rotate(12 1563.8 521.2)" fill="#5a5750" stroke="#1c1b19" stroke-width="0.9"/>
<ellipse cx="1563.1" cy="520.5" rx="3.61" ry="2.13" transform="rotate(12 1563.8 521.2)" fill="#46443f"/>
<ellipse cx="1555.4" cy="530.1" rx="4.80" ry="3.31" transform="rotate(12 1555.4 530.1)" fill="#5a5750" stroke="#1c1b19" stroke-width="0.9"/>
<ellipse cx="1554.8" cy="529.4" rx="3.63" ry="2.13" transform="rotate(12 1555.4 530.1)" fill="#46443f"/>
<ellipse cx="1547.1" cy="539.1" rx="4.82" ry="3.32" transform="rotate(12 1547.1 539.1)" fill="#5a5750" stroke="#1c1b19" stroke-width="0.9"/>
<ellipse cx="1546.4" cy="538.3" rx="3.64" ry="2.14" transform="rotate(12 1547.1 539.1)" fill="#46443f"/>
<ellipse cx="1538.6" cy="548.1" rx="4.84" ry="3.33" transform="rotate(12 1538.6 548.1)" fill="#5a5750" stroke="#1c1b19" stroke-width="0.9"/>
<ellipse cx="1537.9" cy="547.4" rx="3.65" ry="2.15" transform="rotate(12 1538.6 548.1)" fill="#46443f"/>
<ellipse cx="1530.0" cy="557.3" rx="4.86" ry="3.34" transform="rotate(12 1530.0 557.3)" fill="#5a5750" stroke="#1c1b19" stroke-width="0.9"/>
<ellipse cx="1529.4" cy="556.5" rx="3.67" ry="2.16" transform="rotate(12 1530.0 557.3)" fill="#46443f"/>
<ellipse cx="1521.4" cy="566.5" rx="4.87" ry="3.36" transform="rotate(12 1521.4 566.5)" fill="#5a5750" stroke="#1c1b19" stroke-width="0.9"/>
<ellipse cx="1520.8" cy="565.7" rx="3.68" ry="2.17" transform="rotate(12 1521.4 566.5)" fill="#46443f"/>
<ellipse cx="1579.2" cy="528.5" rx="4.82" ry="3.32" transform="rotate(12 1579.2 528.5)" fill="#5a5750" stroke="#1c1b19" stroke-width="0.9"/>
<ellipse cx="1578.5" cy="527.8" rx="3.64" ry="2.14" transform="rotate(12 1579.2 528.5)" fill="#46443f"/>
<ellipse cx="1570.9" cy="537.5" rx="4.84" ry="3.33" transform="rotate(12 1570.9 537.5)" fill="#5a5750" stroke="#1c1b19" stroke-width="0.9"/>
<ellipse cx="1570.2" cy="536.7" rx="3.65" ry="2.15" transform="rotate(12 1570.9 537.5)" fill="#46443f"/>
<ellipse cx="1562.5" cy="546.5" rx="4.85" ry="3.34" transform="rotate(12 1562.5 546.5)" fill="#5a5750" stroke="#1c1b19" stroke-width="0.9"/>
<ellipse cx="1561.9" cy="545.7" rx="3.67" ry="2.16" transform="rotate(12 1562.5 546.5)" fill="#46443f"/>
<ellipse cx="1554.1" cy="555.6" rx="4.87" ry="3.36" transform="rotate(12 1554.1 555.6)" fill="#5a5750" stroke="#1c1b19" stroke-width="0.9"/>
<ellipse cx="1553.5" cy="554.8" rx="3.68" ry="2.17" transform="rotate(12 1554.1 555.6)" fill="#46443f"/>
<ellipse cx="1545.6" cy="564.8" rx="4.89" ry="3.37" transform="rotate(12 1545.6 564.8)" fill="#5a5750" stroke="#1c1b19" stroke-width="0.9"/>
<ellipse cx="1545.0" cy="564.0" rx="3.69" ry="2.17" transform="rotate(12 1545.6 564.8)" fill="#46443f"/>
<ellipse cx="1537.0" cy="574.1" rx="4.91" ry="3.38" transform="rotate(12 1537.0 574.1)" fill="#5a5750" stroke="#1c1b19" stroke-width="0.9"/>
<ellipse cx="1536.4" cy="573.3" rx="3.71" ry="2.18" transform="rotate(12 1537.0 574.1)" fill="#46443f"/>
<ellipse cx="1594.7" cy="535.8" rx="4.85" ry="3.34" transform="rotate(12 1594.7 535.8)" fill="#5a5750" stroke="#1c1b19" stroke-width="0.9"/>
<ellipse cx="1594.0" cy="535.1" rx="3.67" ry="2.16" transform="rotate(12 1594.7 535.8)" fill="#46443f"/>
<ellipse cx="1586.5" cy="544.8" rx="4.87" ry="3.35" transform="rotate(12 1586.5 544.8)" fill="#5a5750" stroke="#1c1b19" stroke-width="0.9"/>
<ellipse cx="1585.8" cy="544.1" rx="3.68" ry="2.16" transform="rotate(12 1586.5 544.8)" fill="#46443f"/>
<ellipse cx="1578.1" cy="553.9" rx="4.89" ry="3.37" transform="rotate(12 1578.1 553.9)" fill="#5a5750" stroke="#1c1b19" stroke-width="0.9"/>
<ellipse cx="1577.5" cy="553.2" rx="3.69" ry="2.17" transform="rotate(12 1578.1 553.9)" fill="#46443f"/>
<ellipse cx="1569.8" cy="563.1" rx="4.91" ry="3.38" transform="rotate(12 1569.8 563.1)" fill="#5a5750" stroke="#1c1b19" stroke-width="0.9"/>
<ellipse cx="1569.1" cy="562.3" rx="3.71" ry="2.18" transform="rotate(12 1569.8 563.1)" fill="#46443f"/>
<ellipse cx="1561.3" cy="572.4" rx="4.93" ry="3.39" transform="rotate(12 1561.3 572.4)" fill="#5a5750" stroke="#1c1b19" stroke-width="0.9"/>
<ellipse cx="1560.6" cy="571.6" rx="3.72" ry="2.19" transform="rotate(12 1561.3 572.4)" fill="#46443f"/>
<ellipse cx="1552.8" cy="581.7" rx="4.94" ry="3.41" transform="rotate(12 1552.8 581.7)" fill="#5a5750" stroke="#1c1b19" stroke-width="0.9"/>
<ellipse cx="1552.1" cy="580.9" rx="3.74" ry="2.20" transform="rotate(12 1552.8 581.7)" fill="#46443f"/>
<ellipse cx="1610.3" cy="543.2" rx="4.89" ry="3.37" transform="rotate(12 1610.3 543.2)" fill="#5a5750" stroke="#1c1b19" stroke-width="0.9"/>
<ellipse cx="1609.7" cy="542.4" rx="3.69" ry="2.17" transform="rotate(12 1610.3 543.2)" fill="#46443f"/>
<ellipse cx="1602.1" cy="552.3" rx="4.90" ry="3.38" transform="rotate(12 1602.1 552.3)" fill="#5a5750" stroke="#1c1b19" stroke-width="0.9"/>
<ellipse cx="1601.5" cy="551.5" rx="3.71" ry="2.18" transform="rotate(12 1602.1 552.3)" fill="#46443f"/>
<ellipse cx="1593.9" cy="561.4" rx="4.92" ry="3.39" transform="rotate(12 1593.9 561.4)" fill="#5a5750" stroke="#1c1b19" stroke-width="0.9"/>
<ellipse cx="1593.2" cy="560.7" rx="3.72" ry="2.19" transform="rotate(12 1593.9 561.4)" fill="#46443f"/>
<ellipse cx="1585.5" cy="570.7" rx="4.94" ry="3.40" transform="rotate(12 1585.5 570.7)" fill="#5a5750" stroke="#1c1b19" stroke-width="0.9"/>
<ellipse cx="1584.8" cy="569.9" rx="3.73" ry="2.20" transform="rotate(12 1585.5 570.7)" fill="#46443f"/>
<ellipse cx="1577.1" cy="580.0" rx="4.96" ry="3.42" transform="rotate(12 1577.1 580.0)" fill="#5a5750" stroke="#1c1b19" stroke-width="0.9"/>
<ellipse cx="1576.4" cy="579.2" rx="3.75" ry="2.20" transform="rotate(12 1577.1 580.0)" fill="#46443f"/>
<ellipse cx="1568.6" cy="589.4" rx="4.98" ry="3.43" transform="rotate(12 1568.6 589.4)" fill="#5a5750" stroke="#1c1b19" stroke-width="0.9"/>
<ellipse cx="1567.9" cy="588.6" rx="3.76" ry="2.21" transform="rotate(12 1568.6 589.4)" fill="#46443f"/>
<ellipse cx="1626.1" cy="550.6" rx="4.92" ry="3.39" transform="rotate(12 1626.1 550.6)" fill="#5a5750" stroke="#1c1b19" stroke-width="0.9"/>
<ellipse cx="1625.4" cy="549.9" rx="3.72" ry="2.19" transform="rotate(12 1626.1 550.6)" fill="#46443f"/>
<ellipse cx="1617.9" cy="559.8" rx="4.94" ry="3.40" transform="rotate(12 1617.9 559.8)" fill="#5a5750" stroke="#1c1b19" stroke-width="0.9"/>
<ellipse cx="1617.2" cy="559.0" rx="3.73" ry="2.19" transform="rotate(12 1617.9 559.8)" fill="#46443f"/>
<ellipse cx="1609.7" cy="569.0" rx="4.96" ry="3.42" transform="rotate(12 1609.7 569.0)" fill="#5a5750" stroke="#1c1b19" stroke-width="0.9"/>
<ellipse cx="1609.0" cy="568.2" rx="3.75" ry="2.20" transform="rotate(12 1609.7 569.0)" fill="#46443f"/>
<ellipse cx="1601.4" cy="578.3" rx="4.98" ry="3.43" transform="rotate(12 1601.4 578.3)" fill="#5a5750" stroke="#1c1b19" stroke-width="0.9"/>
<ellipse cx="1600.7" cy="577.5" rx="3.76" ry="2.21" transform="rotate(12 1601.4 578.3)" fill="#46443f"/>
<ellipse cx="1593.0" cy="587.7" rx="5.00" ry="3.44" transform="rotate(12 1593.0 587.7)" fill="#5a5750" stroke="#1c1b19" stroke-width="0.9"/>
<ellipse cx="1592.3" cy="586.9" rx="3.77" ry="2.22" transform="rotate(12 1593.0 587.7)" fill="#46443f"/>
<ellipse cx="1584.5" cy="597.2" rx="5.02" ry="3.46" transform="rotate(12 1584.5 597.2)" fill="#5a5750" stroke="#1c1b19" stroke-width="0.9"/>
<ellipse cx="1583.9" cy="596.4" rx="3.79" ry="2.23" transform="rotate(12 1584.5 597.2)" fill="#46443f"/>
<ellipse cx="1641.9" cy="558.1" rx="4.95" ry="3.41" transform="rotate(12 1641.9 558.1)" fill="#5a5750" stroke="#1c1b19" stroke-width="0.9"/>
<ellipse cx="1641.2" cy="557.3" rx="3.74" ry="2.20" transform="rotate(12 1641.9 558.1)" fill="#46443f"/>
<ellipse cx="1633.8" cy="567.3" rx="4.97" ry="3.43" transform="rotate(12 1633.8 567.3)" fill="#5a5750" stroke="#1c1b19" stroke-width="0.9"/>
<ellipse cx="1633.1" cy="566.5" rx="3.76" ry="2.21" transform="rotate(12 1633.8 567.3)" fill="#46443f"/>
<ellipse cx="1625.6" cy="576.6" rx="4.99" ry="3.44" transform="rotate(12 1625.6 576.6)" fill="#5a5750" stroke="#1c1b19" stroke-width="0.9"/>
<ellipse cx="1624.9" cy="575.8" rx="3.77" ry="2.22" transform="rotate(12 1625.6 576.6)" fill="#46443f"/>
<ellipse cx="1617.3" cy="586.0" rx="5.01" ry="3.45" transform="rotate(12 1617.3 586.0)" fill="#5a5750" stroke="#1c1b19" stroke-width="0.9"/>
<ellipse cx="1616.7" cy="585.2" rx="3.79" ry="2.23" transform="rotate(12 1617.3 586.0)" fill="#46443f"/>
<ellipse cx="1609.0" cy="595.4" rx="5.03" ry="3.47" transform="rotate(12 1609.0 595.4)" fill="#5a5750" stroke="#1c1b19" stroke-width="0.9"/>
<ellipse cx="1608.3" cy="594.7" rx="3.80" ry="2.24" transform="rotate(12 1609.0 595.4)" fill="#46443f"/>
<ellipse cx="1600.6" cy="605.0" rx="5.05" ry="3.48" transform="rotate(12 1600.6 605.0)" fill="#5a5750" stroke="#1c1b19" stroke-width="0.9"/>
<ellipse cx="1599.9" cy="604.2" rx="3.82" ry="2.25" transform="rotate(12 1600.6 605.0)" fill="#46443f"/>
<polygon points="1517.5,575.0 1535.0,583.5 1532.0,587.5 1514.5,579.0" fill="#6b675f" stroke="#111" stroke-width="0.8" stroke-linejoin="round" />
<polygon points="1826.0,232.0 1862.0,255.0 1893.0,226.0 1880.0,218.0" fill="#000" opacity="0.10" filter="url(#blur3)"/>
<polygon points="1821.3,190.6 1853.9,170.3 1891.4,188.2 1860.7,214.7" fill="#ececed" stroke="#c2c2c5" stroke-width="0.6" stroke-linejoin="round" fill-opacity="0.72"/>
<polygon points="1821.3,190.6 1860.7,214.7 1860.0,249.8 1824.3,227.0" fill="#e2e2e4" stroke="#c2c2c5" stroke-width="0.6" stroke-linejoin="round" fill-opacity="0.72"/>
<polygon points="1860.7,214.7 1891.4,188.2 1889.0,221.4 1860.0,249.8" fill="#d6d6d9" stroke="#c2c2c5" stroke-width="0.6" stroke-linejoin="round" fill-opacity="0.72"/>
<line x1="1860.7" y1="214.7" x2="1860.0" y2="249.8" stroke="#8a8a90" stroke-width="0.8" stroke-dasharray="3 2"/>
<line x1="1824.3" y1="227.0" x2="1819.4" y2="185.7" stroke="#6a6af2" stroke-width="1.4" />
<line x1="1824.3" y1="227.0" x2="1866.2" y2="254.7" stroke="#ee8080" stroke-width="1.5" />
<text x="1812" y="183" font-size="11" fill="#6a6af8" font-family="Liberation Sans, Noto Sans CJK JP, sans-serif">Z</text>
<text x="1868" y="264" font-size="11" fill="#f47a7a" font-family="Liberation Sans, Noto Sans CJK JP, sans-serif">X</text>
<g transform="matrix(37.500 17.900 -32.600 20.300 1853.9 170.3)"><text x="0.5" y="0.70" font-size="0.52" text-anchor="middle" fill="#6c7078" fill-opacity="0.7" font-family="Liberation Sans, Noto Sans CJK JP, sans-serif">上</text></g>
<g transform="matrix(39.400 24.100 3.000 36.400 1821.3 190.6)"><text x="0.5" y="0.70" font-size="0.52" text-anchor="middle" fill="#6c7078" fill-opacity="0.7" font-family="Liberation Sans, Noto Sans CJK JP, sans-serif">前</text></g>
<g transform="matrix(30.700 -26.500 -0.700 35.100 1860.7 214.7)"><text x="0.5" y="0.70" font-size="0.52" text-anchor="middle" fill="#6c7078" fill-opacity="0.7" font-family="Liberation Sans, Noto Sans CJK JP, sans-serif">右</text></g>
</g></svg>
</div>
<div style="position:absolute;left:0px;top:0px;width:1928px;height:8px;background:#000"></div>
<div style="position:absolute;left:0px;top:8px;width:1920px;height:23px;background:#fff"></div>
<svg style="position:absolute;left:4px;top:12px" width="15" height="16" viewBox="0 0 15 16" ><rect x="0" y="0" width="15" height="16" rx="2" fill="#fbe3cc"/><path d="M4 3H12L11 5.6H7V7.6H10.5L9.6 10H7V13.5H4Z" fill="#f0801f"/><path d="M4 13.5L7 11V13.5Z" fill="#a8480b"/></svg>
<svg style="position:absolute;left:1790px;top:10px" width="120" height="18" viewBox="0 0 120 18" ><path d="M7 8.5H20" stroke="#000" stroke-width="1.2"/><rect x="54.5" y="5.5" width="9" height="9" fill="#fff" stroke="#000" stroke-width="1.1" rx="1"/><path d="M57 5.5V3.5H66.5V12H64" fill="none" stroke="#000" stroke-width="1.1"/><path d="M99 3L111 15M111 3L99 15" stroke="#000" stroke-width="1.2"/></svg>
<div style="position:absolute;left:0px;top:31px;width:1920px;height:32px;background:#cccccc"></div>
<svg style="position:absolute;left:9px;top:40px" width="14" height="14" viewBox="0 0 14 14" ><rect x="0" y="0" width="4" height="4" rx="0.6" fill="#666"/><rect x="5" y="0" width="4" height="4" rx="0.6" fill="#666"/><rect x="10" y="0" width="4" height="4" rx="0.6" fill="#666"/><rect x="0" y="5" width="4" height="4" rx="0.6" fill="#666"/><rect x="5" y="5" width="4" height="4" rx="0.6" fill="#666"/><rect x="10" y="5" width="4" height="4" rx="0.6" fill="#666"/><rect x="0" y="10" width="4" height="4" rx="0.6" fill="#666"/><rect x="5" y="10" width="4" height="4" rx="0.6" fill="#666"/><rect x="10" y="10" width="4" height="4" rx="0.6" fill="#666"/></svg>
<svg style="position:absolute;left:42px;top:39px" width="13" height="16" viewBox="0 0 13 16" ><path d="M0.5 0.5H8.5L12.5 4.5V15.5H0.5Z" fill="#666"/><path d="M8.5 0.5V4.5H12.5Z" fill="#ccc"/><path d="M9.3 1.6V3.8H11.5Z" fill="#666"/></svg>
<svg style="position:absolute;left:61px;top:44px" width="7" height="5" viewBox="0 0 7 5" ><polygon points="0,0 7,0 3.5,5" fill="#666"/></svg>
<svg style="position:absolute;left:87px;top:40px" width="14" height="14" viewBox="0 0 14 14" ><path d="M1 0.5H12.5Q13.5 0.5 13.5 1.5V13.5H2.5L0.5 11.5V1Q0.5 0.5 1 0.5Z" fill="#8e8e8e"/><rect x="3.3" y="0.5" width="7.5" height="4.6" fill="#ccc"/><rect x="4" y="8.3" width="6" height="5.2" fill="#ccc"/><rect x="5" y="9.8" width="2" height="3.7" fill="#8e8e8e"/></svg>
<svg style="position:absolute;left:119px;top:40px" width="15" height="14" viewBox="0 0 15 14" ><path d="M6 1L1.5 5.5L6 10M1.8 5.5H8.5Q13 5.5 13 11.5" fill="none" stroke="#666" stroke-width="2" stroke-linejoin="round" stroke-linecap="round"/></svg>
<svg style="position:absolute;left:140px;top:44px" width="7" height="5" viewBox="0 0 7 5" ><polygon points="0,0 7,0 3.5,5" fill="#666"/></svg>
<svg style="position:absolute;left:159px;top:40px" width="15" height="14" viewBox="0 0 15 14" ><path d="M9 1L13.5 5.5L9 10M13.2 5.5H6.5Q2 5.5 2 11.5" fill="none" stroke="#9a9a9a" stroke-width="2" stroke-linejoin="round" stroke-linecap="round"/></svg>
<svg style="position:absolute;left:179px;top:44px" width="7" height="5" viewBox="0 0 7 5" ><polygon points="0,0 7,0 3.5,5" fill="#a5a5a5"/></svg>
<div style="position:absolute;left:193px;top:35px;width:734px;height:28px;background:#f2f2f2;border-radius:6px 6px 0 0"></div>
<svg style="position:absolute;left:512px;top:42px" width="16" height="15" viewBox="0 0 16 15" ><path d="M0.5 3L7 0.5L15.5 2V11L8.5 14.5L0.5 11.5Z" fill="#777"/><path d="M0.5 3L8.5 5.2L15.5 2M8.5 5.2V14.5" fill="none" stroke="#aaa" stroke-width="0.8"/><path d="M8.5 5.2L15.5 2V11L8.5 14.5Z" fill="#555"/></svg>
<svg style="position:absolute;left:910px;top:44px" width="10" height="10" viewBox="0 0 10 10" ><path d="M1 1L9 9M9 1L1 9" stroke="#666" stroke-width="1.2"/></svg>
<div style="position:absolute;left:931px;top:35px;width:733px;height:28px;background:#bcbcbc;border-radius:5px 5px 0 0"></div>
<svg style="position:absolute;left:1257px;top:42px" width="12" height="14" viewBox="0 0 12 14" ><path d="M3 6V3.8Q3 1 6 1Q9 1 9 3.8V6" fill="none" stroke="#7a7a7a" stroke-width="1.5"/><rect x="1" y="6" width="10" height="7.5" rx="1" fill="#7a7a7a"/><path d="M2.5 8.3H9.5M2.5 10.3H9.5M2.5 12.1H9.5" stroke="#bcbcbc" stroke-width="0.7"/></svg>
<svg style="position:absolute;left:1647px;top:44px" width="10" height="10" viewBox="0 0 10 10" ><path d="M1 1L9 9M9 1L1 9" stroke="#777" stroke-width="1.1"/></svg>
<div style="position:absolute;left:1668px;top:35px;width:27px;height:28px;background:#bfbfbf;border-radius:3px 3px 0 0"></div>
<svg style="position:absolute;left:1675px;top:42px" width="13" height="13" viewBox="0 0 13 13" ><path d="M6.5 0.5V12.5M0.5 6.5H12.5" stroke="#666" stroke-width="2.2"/></svg>
<svg style="position:absolute;left:1707px;top:39px" width="17" height="17" viewBox="0 0 17 17" ><path d="M1 1H9L12.5 4.5V8L7 15.5H1Z" fill="#666"/><path d="M8 16L9 12.5L14.5 6L16.5 8L11 14.5Z" fill="#666" stroke="#ccc" stroke-width="0.7"/></svg>
<svg style="position:absolute;left:1780px;top:39px" width="16" height="16" viewBox="0 0 16 16" ><circle cx="8" cy="8" r="7.5" fill="#666"/><circle cx="8" cy="8" r="6.2" fill="none" stroke="#ccc" stroke-width="0.8"/><path d="M8 4V8.5H11.5" fill="none" stroke="#ddd" stroke-width="1.3"/></svg>
<svg style="position:absolute;left:1813px;top:38px" width="18" height="18" viewBox="0 0 18 18" ><path d="M8 2.5Q4.5 3.5 4.5 8V11L2 14H14L11.5 11V8Q11.5 3.5 8 2.5Z" fill="#666"/><path d="M6.3 15H9.7L8 16.6Z" fill="#666"/><circle cx="12.3" cy="4.6" r="2.9" fill="#139be0"/></svg>
<svg style="position:absolute;left:1846px;top:39px" width="17" height="17" viewBox="0 0 17 17" ><circle cx="8.5" cy="8.5" r="8" fill="#666"/><path d="M5.8 6.6Q5.9 4 8.5 4Q11.2 4 11.2 6.3Q11.2 7.7 9.6 8.6Q8.6 9.2 8.6 10.6" fill="none" stroke="#e8e8e8" stroke-width="1.8"/><rect x="7.6" y="11.8" width="2" height="2" fill="#e8e8e8"/></svg>
<svg style="position:absolute;left:1883px;top:35px" width="25" height="25" viewBox="0 0 25 25" ><defs><linearGradient id="av" x1="0" y1="0" x2="0" y2="1"><stop offset="0" stop-color="#b9c6d8"/><stop offset="1" stop-color="#7f8fa8"/></linearGradient><clipPath id="avc"><circle cx="12.5" cy="12.5" r="12"/></clipPath></defs><circle cx="12.5" cy="12.5" r="12" fill="url(#av)"/><g clip-path="url(#avc)"><ellipse cx="12.5" cy="9.5" rx="5.3" ry="6.5" fill="#566275"/><path d="M3 25Q3 17 10 16.5H15Q22 17 22 25Z" fill="#566275"/></g></svg>
<div style="position:absolute;left:0px;top:63px;width:1920px;height:82px;background:#f2f2f2"></div>
<div style="position:absolute;left:0px;top:144px;width:1920px;height:2px;background:linear-gradient(#e2e2e2,#d0d0d0)"></div>
<div style="position:absolute;left:12px;top:74px;width:109px;height:60px;border:1px solid #dadada;border-radius:5px;box-sizing:border-box;background:#f4f4f4"></div>
<svg style="position:absolute;left:85px;top:101px" width="6.5" height="4.5" viewBox="0 0 6.5 4.5" ><polygon points="0,0 6.5,0 3.25,4.5" fill="#222"/></svg>
<div style="position:absolute;left:138.5px;top:84.5px;width:56px;height:3px;background:#0696d7"></div>
<svg style="position:absolute;left:245.0px;top:133px" width="5.5" height="4" viewBox="0 0 5.5 4" ><polygon points="0,0 5.5,0 2.75,4" fill="#333"/></svg>
<svg style="position:absolute;left:492.5px;top:133px" width="5.5" height="4" viewBox="0 0 5.5 4" ><polygon points="0,0 5.5,0 2.75,4" fill="#333"/></svg>
<svg style="position:absolute;left:685.5px;top:133px" width="5.5" height="4" viewBox="0 0 5.5 4" ><polygon points="0,0 5.5,0 2.75,4" fill="#333"/></svg>
<svg style="position:absolute;left:756.0px;top:133px" width="5.5" height="4" viewBox="0 0 5.5 4" ><polygon points="0,0 5.5,0 2.75,4" fill="#333"/></svg>
<svg style="position:absolute;left:815.0px;top:133px" width="5.5" height="4" viewBox="0 0 5.5 4" ><polygon points="0,0 5.5,0 2.75,4" fill="#333"/></svg>
<svg style="position:absolute;left:874.0px;top:133px" width="5.5" height="4" viewBox="0 0 5.5 4" ><polygon points="0,0 5.5,0 2.75,4" fill="#333"/></svg>
<svg style="position:absolute;left:933.0px;top:133px" width="5.5" height="4" viewBox="0 0 5.5 4" ><polygon points="0,0 5.5,0 2.75,4" fill="#333"/></svg>
<div style="position:absolute;left:350.5px;top:91px;width:1.5px;height:50px;background:#d4d4d4"></div>
<div style="position:absolute;left:619.5px;top:91px;width:1.5px;height:50px;background:#d4d4d4"></div>
<div style="position:absolute;left:716.0px;top:91px;width:1.5px;height:50px;background:#d4d4d4"></div>
<div style="position:absolute;left:775.5px;top:91px;width:1.5px;height:50px;background:#d4d4d4"></div>
<div style="position:absolute;left:834.5px;top:91px;width:1.5px;height:50px;background:#d4d4d4"></div>
<div style="position:absolute;left:893.5px;top:91px;width:1.5px;height:50px;background:#d4d4d4"></div>
<svg style="position:absolute;left:137px;top:90px" width="33" height="32" viewBox="0 0 33 32" ><rect x="2" y="2" width="27" height="27" fill="none" stroke="#555" stroke-width="1"/><g fill="#555"><rect x="0.5" y="0.5" width="3" height="3"/><rect x="27.5" y="0.5" width="3" height="3"/><rect x="0.5" y="27.5" width="3" height="3"/></g><path d="M9 9H22M9 9V22M9 22Q21 20 22 9" fill="none" stroke="#555" stroke-width="1"/><g fill="#555"><rect x="7.5" y="7.5" width="3" height="3"/><rect x="20.5" y="7.5" width="3" height="3"/><rect x="7.5" y="20.5" width="3" height="3"/></g><rect x="17" y="16" width="16" height="16" fill="#f2f2f2"/><path d="M24.5 18.5V32M18 25.2H31.5" stroke="#1fa345" stroke-width="4"/></svg>
<svg style="position:absolute;left:180px;top:90px" width="32" height="33" viewBox="0 0 32 33" ><path d="M1 28V32H20L25 27V23Z" fill="#bcbcbc"/><path d="M1 7L7 1H25V23L20 28H1Z" fill="#6aaee3"/><path d="M20 7L25 1V23L20 28Z" fill="#4690cd"/><path d="M1 7L7 1H25L20 7Z" fill="#8cc8f5"/><path d="M29.5 4V26" stroke="#111" stroke-width="1.1"/><path d="M27.3 6.5L29.5 1.5L31.7 6.5Z" fill="#111"/></svg>
<svg style="position:absolute;left:222px;top:90px" width="35" height="31" viewBox="0 0 35 31" ><path d="M2 12Q16 2 32 13V22Q16 12 8 28L2 22Z" fill="#6aaee3"/><path d="M2 12Q16 2 32 13L26 17Q15 10 8 18Z" fill="#8cc8f5"/><path d="M2 12L8 18V28L2 22Z" fill="#4690cd"/><path d="M26 17L32 13V22L26 26Z" fill="#fff" stroke="#555" stroke-width="1"/><path d="M3 6Q17 -3 29 6.5" fill="none" stroke="#222" stroke-width="1"/><path d="M1 8L4 3.5L6.5 8Z" fill="#222"/></svg>
<svg style="position:absolute;left:266px;top:90px" width="33" height="33" viewBox="0 0 33 33" ><path d="M1 9L9 1H32V24L24 32H1Z" fill="#dedede" stroke="#666" stroke-width="1" stroke-linejoin="round"/><path d="M24 9L32 1V24L24 32Z" fill="#bcbcbc"/><path d="M1 9H24V32M24 9L32 1" fill="none" stroke="#666" stroke-width="1"/><circle cx="12.5" cy="20.5" r="8" fill="#f4f4f4" stroke="#666" stroke-width="1"/><path d="M7 16Q12 12 16 14Q14 20 20 22Q17 27 11 26Q6 23 7 16Z" fill="#6aaee3"/></svg>
<svg style="position:absolute;left:309px;top:92px" width="29" height="29" viewBox="0 0 29 29" ><path d="M3.5 3.5H25M3.5 3.5V25M3.5 25H25" fill="none" stroke="#555" stroke-width="1.1"/><rect x="0.6" y="0.6" width="6" height="6" fill="#fff" stroke="#555" stroke-width="1"/><rect x="21.5" y="0.5" width="6.5" height="6.5" fill="#6aaee3"/><rect x="0.5" y="21.5" width="6.5" height="6.5" fill="#6aaee3"/><rect x="21.5" y="21.5" width="6.5" height="6.5" fill="#6aaee3"/></svg>
<svg style="position:absolute;left:364px;top:90px" width="31" height="33" viewBox="0 0 31 33" ><path d="M1 8L6 1H12V32H1Z" fill="#dedede" stroke="#666" stroke-width="1"/><path d="M8 8L13 1H22V25L17 32H8Z" fill="#6aaee3"/><path d="M17 8L22 1V25L17 32Z" fill="#4690cd"/><path d="M21 16.5H28" stroke="#111" stroke-width="1.2"/><path d="M26 14L30.5 16.5L26 19Z" fill="#111"/></svg>
<svg style="position:absolute;left:406px;top:90px" width="33" height="33" viewBox="0 0 33 33" ><path d="M1 32V10Q1 1 10 1H16Q31 3 32 18V26L26 32Z" fill="#dedede" stroke="#666" stroke-width="1" stroke-linejoin="round"/><path d="M26 24L32 18V26L26 32Z" fill="#bcbcbc"/><path d="M13 6L18 1.5Q31 4 32 18L26 23Q25 10 13 6Z" fill="#6aaee3"/></svg>
<svg style="position:absolute;left:449px;top:90px" width="33" height="33" viewBox="0 0 33 33" ><path d="M1 9L9 1H32V24L24 32H1Z" fill="#dedede" stroke="#666" stroke-width="1" stroke-linejoin="round"/><path d="M24 9L32 1V24L24 32Z" fill="#bcbcbc"/><path d="M1 9H24V32M24 9L32 1" fill="none" stroke="#666" stroke-width="1"/><rect x="5" y="13" width="15" height="15" fill="#f0f0f0"/><path d="M5 13H12V21H20V28H5Z" fill="#4690cd"/><path d="M12 21H20V28H5Z" fill="#8cc8f5"/></svg>
<svg style="position:absolute;left:492px;top:90px" width="33" height="33" viewBox="0 0 33 33" ><path d="M11 5L16 1H32V18L27 22H20V28L15 32H1V15L6 11H11Z" fill="#6aaee3"/><path d="M27 5L32 1V18L27 22ZM15 16L20 11.5V28L15 32Z" fill="#4690cd"/><path d="M11 5L16 1H32L27 5ZM1 15L6 11H11V15Z" fill="#8cc8f5"/></svg>
<svg style="position:absolute;left:535px;top:90px" width="33" height="33" viewBox="0 0 33 33" ><path d="M2 19H25L30 15V27L25 31H2Z" fill="#dedede" stroke="#999" stroke-width="0.8"/><path d="M25 19L30 15V27L25 31Z" fill="#bcbcbc"/><path d="M2 5L7 1H30V12L25 16H2Z" fill="#6aaee3"/><path d="M2 5L7 1H30L25 5Z" fill="#8cc8f5"/><path d="M25 5L30 1V12L25 16Z" fill="#4690cd"/><path d="M0 18.5H25L32 12" fill="none" stroke="#2a8ee0" stroke-width="1.2"/></svg>
<svg style="position:absolute;left:578px;top:90px" width="32" height="32" viewBox="0 0 32 32" ><path d="M16 3V29M3 16H29" stroke="#333" stroke-width="2.2"/><path d="M16 0L21 7H11ZM16 32L21 25H11ZM0 16L7 11V21ZM32 16L25 11V21Z" fill="#333"/></svg>
<svg style="position:absolute;left:631px;top:90px" width="33" height="33" viewBox="0 0 33 33" ><path d="M1 19H13V31H1ZM14 19H25V31H14Z" fill="#dedede" stroke="#999" stroke-width="0.8"/><path d="M25 19L29 15V27L25 31ZM14 19L18 15H29L25 19Z" fill="#bcbcbc"/><path d="M1 8L5 4H17L13 8Z" fill="#8cc8f5"/><path d="M1 8H13V19H1Z" fill="#6aaee3"/><path d="M13 8L17 4V15L13 19Z" fill="#4690cd"/><path d="M24 0L25.8 5.2L30.5 2.5L28 7.2L33 9L28 10.8L30.5 15.5L25.8 12.8L24 18L22.2 12.8L17.5 15.5L20 10.8L15 9L20 7.2L17.5 2.5L22.2 5.2Z" fill="#f39a0c"/></svg>
<svg style="position:absolute;left:676px;top:92px" width="30" height="30" viewBox="0 0 30 30" ><path d="M1 8Q1 1 7 1H11V14L6 27H1Z" fill="#bcbcbc" stroke="#777" stroke-width="0.9"/><ellipse cx="9" cy="3" rx="3.5" ry="2" fill="#eee" stroke="#777" stroke-width="0.7"/><path d="M18 13H23V4L29 11V28L23 22H18Z" fill="#bcbcbc" stroke="#777" stroke-width="0.9"/><path d="M19.5 5V11M10 13V19" stroke="#2a8ee0" stroke-width="1.1"/></svg>
<svg style="position:absolute;left:730px;top:90px" width="34" height="33" viewBox="0 0 34 33" ><path d="M1 9L6 2H12V26L7 32H1Z" fill="#dedede" stroke="#777" stroke-width="0.9"/><path d="M7 9L12 2V26L7 32Z" fill="#bcbcbc"/><path d="M7 9L20 1V24L7 32Z" fill="#5bbf7a"/><path d="M20 12L32 3V22L20 31Z" fill="#e8996a"/></svg>
<svg style="position:absolute;left:790px;top:96px" width="33" height="22" viewBox="0 0 33 22" ><path d="M1 1V9M32 1V9M2 5H31" stroke="#333" stroke-width="1"/><path d="M1.5 5L6 3V7ZM31.5 5L27 3V7Z" fill="#333"/><rect x="1" y="13" width="31" height="8" fill="#f2a516"/><path d="M4 13V17M8 13V16M12 13V17M16 13V16M20 13V17M24 13V16M28 13V17" stroke="#a86a00" stroke-width="0.8"/></svg>
<svg style="position:absolute;left:849px;top:91px" width="32" height="30" viewBox="0 0 32 30" ><rect x="0" y="0" width="32" height="30" fill="#54a6ea"/><path d="M0 30V18L8 9L16 19L22 14L32 24V30Z" fill="#2f86cf"/><circle cx="23" cy="7" r="3.3" fill="#fdf6b8"/></svg>
<svg style="position:absolute;left:905px;top:86px" width="39" height="39" viewBox="0 0 39 39" ><rect x="0" y="0" width="39" height="39" fill="#0696d7"/><rect x="4.5" y="4.5" width="27" height="20" fill="none" stroke="#9fe36b" stroke-width="1.1" stroke-dasharray="3.5 2"/><path d="M24 17V35L28.5 30.5L31.5 37L34.5 35.5L31.5 29.5H37Z" fill="#fff"/></svg>
<div style="position:absolute;left:4px;top:149px;width:299px;height:25px;background:#f2f2f2;border:1px solid #c9c9c9;box-sizing:border-box"></div>
<svg style="position:absolute;left:9px;top:157px" width="11" height="8" viewBox="0 0 11 8" ><path d="M5 0V8L0 4ZM10.5 0V8L5.5 4Z" fill="#222"/></svg>
<svg style="position:absolute;left:283px;top:157px" width="9" height="9" viewBox="0 0 9 9" ><circle cx="4.5" cy="4.5" r="4.5" fill="#222"/><rect x="2" y="3.8" width="5" height="1.5" fill="#fff"/></svg>
<div style="position:absolute;left:299.5px;top:156px;width:1px;height:11px;background:#555"></div>
<div style="position:absolute;left:301.5px;top:157px;width:1px;height:9px;background:#999"></div>
<div style="position:absolute;left:8px;top:179px;width:6px;height:818px;background:#bdbdbd;border-radius:3px"></div>
<div style="position:absolute;left:8px;top:179px;width:6px;height:226px;background:#858585;border-radius:3px"></div>
<div style="position:absolute;left:40px;top:179.5px;width:148px;height:19.5px;background:rgba(240,240,240,0.93)"></div>
<svg style="position:absolute;left:20px;top:183px" width="13" height="13" viewBox="0 0 13 13" ><path d="M11.5 1V12H0.8Z" fill="url(#tg)" stroke="#222" stroke-width="1.2" stroke-linejoin="round"/></svg>
<svg style="position:absolute;left:43px;top:184px" width="17" height="11" viewBox="0 0 17 11" ><path d="M0.5 5.5Q8.5 -3.5 16.5 5.5Q8.5 14.5 0.5 5.5Z" fill="#8c8c8c"/><circle cx="8.5" cy="5.5" r="3.3" fill="#f1f1f1"/><circle cx="8.5" cy="5.5" r="1.9" fill="#8c8c8c"/></svg>
<div style="position:absolute;left:65px;top:181px;width:98px;height:16px;background:#969696"></div>
<svg style="position:absolute;left:67px;top:181px" width="18" height="17" viewBox="0 0 18 17" ><path d="M1 4.5L5 1H17V12.5L13 16H1Z" fill="#f4f5f7" stroke="#555" stroke-width="0.9" stroke-linejoin="round"/><path d="M1 4.5H13V16M13 4.5L17 1" fill="none" stroke="#555" stroke-width="0.9"/><path d="M13 4.5L17 1V12.5L13 16Z" fill="#c9ccd3"/></svg>
<svg style="position:absolute;left:167px;top:183px" width="13" height="13" viewBox="0 0 13 13" ><circle cx="6.5" cy="6.5" r="5.6" fill="#fff" stroke="#222" stroke-width="1.2"/><circle cx="6.5" cy="6.5" r="2.4" fill="#222"/></svg>
<div style="position:absolute;left:58px;top:203.5px;width:122px;height:19.5px;background:rgba(240,240,240,0.93)"></div>
<svg style="position:absolute;left:40px;top:206.5px" width="11" height="13" viewBox="0 0 11 13" ><path d="M1 1L9.5 6.5L1 12Z" fill="#e8e8e8" stroke="#222" stroke-width="1.3" stroke-linejoin="round"/></svg>
<svg style="position:absolute;left:60px;top:204.5px" width="18" height="17" viewBox="0 0 18 17" ><rect x="7" y="0" width="3.4" height="4" fill="#8a8a8a" transform="rotate(0 8.7 8.5)"/><rect x="7" y="0" width="3.4" height="4" fill="#8a8a8a" transform="rotate(45 8.7 8.5)"/><rect x="7" y="0" width="3.4" height="4" fill="#8a8a8a" transform="rotate(90 8.7 8.5)"/><rect x="7" y="0" width="3.4" height="4" fill="#8a8a8a" transform="rotate(135 8.7 8.5)"/><rect x="7" y="0" width="3.4" height="4" fill="#8a8a8a" transform="rotate(180 8.7 8.5)"/><rect x="7" y="0" width="3.4" height="4" fill="#8a8a8a" transform="rotate(225 8.7 8.5)"/><rect x="7" y="0" width="3.4" height="4" fill="#8a8a8a" transform="rotate(270 8.7 8.5)"/><rect x="7" y="0" width="3.4" height="4" fill="#8a8a8a" transform="rotate(315 8.7 8.5)"/><circle cx="8.7" cy="8.5" r="6" fill="#8a8a8a"/><circle cx="8.7" cy="8.5" r="2.6" fill="#f1f1f1"/></svg>
<div style="position:absolute;left:58px;top:227.5px;width:90px;height:19.5px;background:rgba(240,240,240,0.93)"></div>
<svg style="position:absolute;left:40px;top:230.5px" width="11" height="13" viewBox="0 0 11 13" ><path d="M1 1L9.5 6.5L1 12Z" fill="#e8e8e8" stroke="#222" stroke-width="1.3" stroke-linejoin="round"/></svg>
<svg style="position:absolute;left:61px;top:230px" width="17" height="14" viewBox="0 0 17 14" ><path d="M0.5 1.5h6l1.5 2h8.5v10h-16z" fill="#8a8a8a"/><path d="M0.5 3.3h7" stroke="#b9b9b9" stroke-width="0.8"/></svg>
<div style="position:absolute;left:58px;top:251.5px;width:91px;height:19.5px;background:rgba(240,240,240,0.93)"></div>
<svg style="position:absolute;left:40px;top:254.5px" width="11" height="13" viewBox="0 0 11 13" ><path d="M1 1L9.5 6.5L1 12Z" fill="#e8e8e8" stroke="#222" stroke-width="1.3" stroke-linejoin="round"/></svg>
<svg style="position:absolute;left:61px;top:255px" width="17" height="12" viewBox="0 0 17 12" ><path d="M1 6Q8.5 -2 16 6Q8.5 14 1 6Z" fill="none" stroke="#b5b5b5" stroke-width="1"/><circle cx="8.5" cy="6" r="2.6" fill="none" stroke="#b5b5b5" stroke-width="1"/><line x1="3" y1="1" x2="14" y2="11.5" stroke="#b5b5b5" stroke-width="1.1"/></svg>
<svg style="position:absolute;left:86px;top:254px" width="17" height="14" viewBox="0 0 17 14" ><path d="M0.5 1.5h6l1.5 2h8.5v10h-16z" fill="#8a8a8a"/><path d="M0.5 3.3h7" stroke="#b9b9b9" stroke-width="0.8"/></svg>
<div style="position:absolute;left:58px;top:275.5px;width:91px;height:19.5px;background:rgba(240,240,240,0.93)"></div>
<svg style="position:absolute;left:38px;top:278.5px" width="13" height="13" viewBox="0 0 13 13" ><path d="M11.5 1V12H0.8Z" fill="url(#tg)" stroke="#222" stroke-width="1.2" stroke-linejoin="round"/></svg>
<svg style="position:absolute;left:61px;top:279.5px" width="17" height="11" viewBox="0 0 17 11" ><path d="M0.5 5.5Q8.5 -3.5 16.5 5.5Q8.5 14.5 0.5 5.5Z" fill="#8c8c8c"/><circle cx="8.5" cy="5.5" r="3.3" fill="#f1f1f1"/><circle cx="8.5" cy="5.5" r="1.9" fill="#8c8c8c"/></svg>
<svg style="position:absolute;left:86px;top:278px" width="17" height="14" viewBox="0 0 17 14" ><path d="M0.5 1.5h6l1.5 2h8.5v10h-16z" fill="#8a8a8a"/><path d="M0.5 3.3h7" stroke="#b9b9b9" stroke-width="0.8"/></svg>
<div style="position:absolute;left:76px;top:299.5px;width:143px;height:19.5px;background:rgba(240,240,240,0.93)"></div>
<svg style="position:absolute;left:79px;top:303.5px" width="17" height="11" viewBox="0 0 17 11" ><path d="M0.5 5.5Q8.5 -3.5 16.5 5.5Q8.5 14.5 0.5 5.5Z" fill="#8c8c8c"/><circle cx="8.5" cy="5.5" r="3.3" fill="#f1f1f1"/><circle cx="8.5" cy="5.5" r="1.9" fill="#8c8c8c"/></svg>
<svg style="position:absolute;left:104px;top:300.5px" width="17" height="17" viewBox="0 0 17 17" ><rect x="1" y="1" width="15" height="15" rx="4.5" fill="#fbfbfc" stroke="#3a4150" stroke-width="1.1"/><path d="M4.5 8.5h8.5v7q-4.2 1.4 -8.5 0z" fill="url(#bg1)"/></svg>
<div style="position:absolute;left:76px;top:323.5px;width:143px;height:19.5px;background:rgba(240,240,240,0.93)"></div>
<svg style="position:absolute;left:79px;top:327.5px" width="17" height="11" viewBox="0 0 17 11" ><path d="M0.5 5.5Q8.5 -3.5 16.5 5.5Q8.5 14.5 0.5 5.5Z" fill="#8c8c8c"/><circle cx="8.5" cy="5.5" r="3.3" fill="#f1f1f1"/><circle cx="8.5" cy="5.5" r="1.9" fill="#8c8c8c"/></svg>
<svg style="position:absolute;left:104px;top:324.5px" width="17" height="17" viewBox="0 0 17 17" ><rect x="1" y="1" width="15" height="15" rx="4.5" fill="#fbfbfc" stroke="#3a4150" stroke-width="1.1"/><path d="M4.5 8.5h8.5v7q-4.2 1.4 -8.5 0z" fill="url(#bg1)"/></svg>
<div style="position:absolute;left:76px;top:347.5px;width:135px;height:19.5px;background:rgba(240,240,240,0.93)"></div>
<svg style="position:absolute;left:79px;top:351.5px" width="17" height="11" viewBox="0 0 17 11" ><path d="M0.5 5.5Q8.5 -3.5 16.5 5.5Q8.5 14.5 0.5 5.5Z" fill="#8c8c8c"/><circle cx="8.5" cy="5.5" r="3.3" fill="#f1f1f1"/><circle cx="8.5" cy="5.5" r="1.9" fill="#8c8c8c"/></svg>
<svg style="position:absolute;left:104px;top:348.5px" width="17" height="17" viewBox="0 0 17 17" ><rect x="1" y="1" width="15" height="15" rx="4.5" fill="#fbfbfc" stroke="#3a4150" stroke-width="1.1"/><path d="M4.5 8.5h8.5v7q-4.2 1.4 -8.5 0z" fill="url(#bg1)"/></svg>
<div style="position:absolute;left:76px;top:371.5px;width:87px;height:19.5px;background:rgba(240,240,240,0.93)"></div>
<svg style="position:absolute;left:79px;top:375.5px" width="17" height="11" viewBox="0 0 17 11" ><path d="M0.5 5.5Q8.5 -3.5 16.5 5.5Q8.5 14.5 0.5 5.5Z" fill="#8c8c8c"/><circle cx="8.5" cy="5.5" r="3.3" fill="#f1f1f1"/><circle cx="8.5" cy="5.5" r="1.9" fill="#8c8c8c"/></svg>
<svg style="position:absolute;left:104px;top:372.5px" width="17" height="17" viewBox="0 0 17 17" ><rect x="1" y="1" width="15" height="15" rx="4.5" fill="#fbfbfc" stroke="#3a4150" stroke-width="1.1"/><path d="M4.5 8.5h8.5v7q-4.2 1.4 -8.5 0z" fill="url(#bg1)"/></svg>
<div style="position:absolute;left:76px;top:395.5px;width:143px;height:19.5px;background:rgba(240,240,240,0.93)"></div>
<svg style="position:absolute;left:79px;top:399.5px" width="17" height="11" viewBox="0 0 17 11" ><path d="M0.5 5.5Q8.5 -3.5 16.5 5.5Q8.5 14.5 0.5 5.5Z" fill="#8c8c8c"/><circle cx="8.5" cy="5.5" r="3.3" fill="#f1f1f1"/><circle cx="8.5" cy="5.5" r="1.9" fill="#8c8c8c"/></svg>
<svg style="position:absolute;left:104px;top:396.5px" width="17" height="17" viewBox="0 0 17 17" ><rect x="1" y="1" width="15" height="15" rx="4.5" fill="#fbfbfc" stroke="#3a4150" stroke-width="1.1"/><path d="M4.5 8.5h8.5v7q-4.2 1.4 -8.5 0z" fill="url(#bg1)"/></svg>
<div style="position:absolute;left:76px;top:419.5px;width:119px;height:19.5px;background:rgba(240,240,240,0.93)"></div>
<svg style="position:absolute;left:79px;top:423.5px" width="17" height="11" viewBox="0 0 17 11" ><path d="M0.5 5.5Q8.5 -3.5 16.5 5.5Q8.5 14.5 0.5 5.5Z" fill="#8c8c8c"/><circle cx="8.5" cy="5.5" r="3.3" fill="#f1f1f1"/><circle cx="8.5" cy="5.5" r="1.9" fill="#8c8c8c"/></svg>
<svg style="position:absolute;left:104px;top:420.5px" width="17" height="17" viewBox="0 0 17 17" ><rect x="1" y="1" width="15" height="15" rx="4.5" fill="#fbfbfc" stroke="#3a4150" stroke-width="1.1"/><path d="M4.5 8.5h8.5v7q-4.2 1.4 -8.5 0z" fill="url(#bg1)"/></svg>
<div style="position:absolute;left:76px;top:443.5px;width:131px;height:19.5px;background:rgba(240,240,240,0.93)"></div>
<svg style="position:absolute;left:79px;top:447.5px" width="17" height="11" viewBox="0 0 17 11" ><path d="M0.5 5.5Q8.5 -3.5 16.5 5.5Q8.5 14.5 0.5 5.5Z" fill="#8c8c8c"/><circle cx="8.5" cy="5.5" r="3.3" fill="#f1f1f1"/><circle cx="8.5" cy="5.5" r="1.9" fill="#8c8c8c"/></svg>
<svg style="position:absolute;left:104px;top:444.5px" width="17" height="17" viewBox="0 0 17 17" ><rect x="1" y="1" width="15" height="15" rx="4.5" fill="#fbfbfc" stroke="#3a4150" stroke-width="1.1"/><path d="M4.5 8.5h8.5v7q-4.2 1.4 -8.5 0z" fill="url(#bg1)"/></svg>
<div style="position:absolute;left:76px;top:467.5px;width:151px;height:19.5px;background:rgba(240,240,240,0.93)"></div>
<svg style="position:absolute;left:79px;top:471.5px" width="17" height="11" viewBox="0 0 17 11" ><path d="M0.5 5.5Q8.5 -3.5 16.5 5.5Q8.5 14.5 0.5 5.5Z" fill="#8c8c8c"/><circle cx="8.5" cy="5.5" r="3.3" fill="#f1f1f1"/><circle cx="8.5" cy="5.5" r="1.9" fill="#8c8c8c"/></svg>
<svg style="position:absolute;left:104px;top:468.5px" width="17" height="17" viewBox="0 0 17 17" ><rect x="1" y="1" width="15" height="15" rx="4.5" fill="#fbfbfc" stroke="#3a4150" stroke-width="1.1"/><path d="M4.5 8.5h8.5v7q-4.2 1.4 -8.5 0z" fill="url(#bg1)"/></svg>
<div style="position:absolute;left:76px;top:491.5px;width:119px;height:19.5px;background:rgba(240,240,240,0.93)"></div>
<svg style="position:absolute;left:79px;top:495.5px" width="17" height="11" viewBox="0 0 17 11" ><path d="M0.5 5.5Q8.5 -3.5 16.5 5.5Q8.5 14.5 0.5 5.5Z" fill="#8c8c8c"/><circle cx="8.5" cy="5.5" r="3.3" fill="#f1f1f1"/><circle cx="8.5" cy="5.5" r="1.9" fill="#8c8c8c"/></svg>
<svg style="position:absolute;left:104px;top:492.5px" width="17" height="17" viewBox="0 0 17 17" ><rect x="1" y="1" width="15" height="15" rx="4.5" fill="#fbfbfc" stroke="#3a4150" stroke-width="1.1"/><path d="M4.5 8.5h8.5v7q-4.2 1.4 -8.5 0z" fill="url(#bg1)"/></svg>
<div style="position:absolute;left:76px;top:515.5px;width:119px;height:19.5px;background:rgba(240,240,240,0.93)"></div>
<svg style="position:absolute;left:79px;top:519.5px" width="17" height="11" viewBox="0 0 17 11" ><path d="M0.5 5.5Q8.5 -3.5 16.5 5.5Q8.5 14.5 0.5 5.5Z" fill="#8c8c8c"/><circle cx="8.5" cy="5.5" r="3.3" fill="#f1f1f1"/><circle cx="8.5" cy="5.5" r="1.9" fill="#8c8c8c"/></svg>
<svg style="position:absolute;left:104px;top:516.5px" width="17" height="17" viewBox="0 0 17 17" ><rect x="1" y="1" width="15" height="15" rx="4.5" fill="#fbfbfc" stroke="#3a4150" stroke-width="1.1"/><path d="M4.5 8.5h8.5v7q-4.2 1.4 -8.5 0z" fill="url(#bg1)"/></svg>
<div style="position:absolute;left:76px;top:539.5px;width:123px;height:19.5px;background:rgba(240,240,240,0.93)"></div>
<svg style="position:absolute;left:79px;top:543.5px" width="17" height="11" viewBox="0 0 17 11" ><path d="M0.5 5.5Q8.5 -3.5 16.5 5.5Q8.5 14.5 0.5 5.5Z" fill="#8c8c8c"/><circle cx="8.5" cy="5.5" r="3.3" fill="#f1f1f1"/><circle cx="8.5" cy="5.5" r="1.9" fill="#8c8c8c"/></svg>
<svg style="position:absolute;left:104px;top:540.5px" width="17" height="17" viewBox="0 0 17 17" ><rect x="1" y="1" width="15" height="15" rx="4.5" fill="#fbfbfc" stroke="#3a4150" stroke-width="1.1"/><path d="M4.5 8.5h8.5v7q-4.2 1.4 -8.5 0z" fill="url(#bg1)"/></svg>
<div style="position:absolute;left:58px;top:563.5px;width:111px;height:19.5px;background:rgba(240,240,240,0.93)"></div>
<svg style="position:absolute;left:40px;top:566.5px" width="11" height="13" viewBox="0 0 11 13" ><path d="M1 1L9.5 6.5L1 12Z" fill="#e8e8e8" stroke="#222" stroke-width="1.3" stroke-linejoin="round"/></svg>
<svg style="position:absolute;left:61px;top:567.5px" width="17" height="11" viewBox="0 0 17 11" ><path d="M0.5 5.5Q8.5 -3.5 16.5 5.5Q8.5 14.5 0.5 5.5Z" fill="#8c8c8c"/><circle cx="8.5" cy="5.5" r="3.3" fill="#f1f1f1"/><circle cx="8.5" cy="5.5" r="1.9" fill="#8c8c8c"/></svg>
<svg style="position:absolute;left:86px;top:566px" width="17" height="14" viewBox="0 0 17 14" ><path d="M0.5 1.5h6l1.5 2h8.5v10h-16z" fill="#8a8a8a"/><path d="M0.5 3.3h7" stroke="#b9b9b9" stroke-width="0.8"/></svg>
<div style="position:absolute;left:58px;top:587.5px;width:139px;height:19.5px;background:rgba(240,240,240,0.93)"></div>
<svg style="position:absolute;left:40px;top:590.5px" width="11" height="13" viewBox="0 0 11 13" ><path d="M1 1L9.5 6.5L1 12Z" fill="#e8e8e8" stroke="#222" stroke-width="1.3" stroke-linejoin="round"/></svg>
<svg style="position:absolute;left:61px;top:591.5px" width="17" height="11" viewBox="0 0 17 11" ><path d="M0.5 5.5Q8.5 -3.5 16.5 5.5Q8.5 14.5 0.5 5.5Z" fill="#8c8c8c"/><circle cx="8.5" cy="5.5" r="3.3" fill="#f1f1f1"/><circle cx="8.5" cy="5.5" r="1.9" fill="#8c8c8c"/></svg>
<svg style="position:absolute;left:86px;top:590px" width="17" height="14" viewBox="0 0 17 14" ><path d="M0.5 1.5h6l1.5 2h8.5v10h-16z" fill="#8a8a8a"/><path d="M0.5 3.3h7" stroke="#b9b9b9" stroke-width="0.8"/></svg>
<div style="position:absolute;left:58px;top:611.5px;width:106px;height:19.5px;background:rgba(240,240,240,0.93)"></div>
<svg style="position:absolute;left:61px;top:612px" width="17" height="18" viewBox="0 0 17.5 18" ><path d="M0.5 15.5L0.5 17.5H10.5L13 15.5V13Z" fill="#bdbdbd"/><path d="M0.5 4L3.5 1H13V13L10.5 15.5H0.5Z" fill="#6aaee3"/><path d="M10.5 4L13 1V13L10.5 15.5Z" fill="#4690cd"/><path d="M0.5 4L3.5 1H13L10.5 4Z" fill="#7fbdec"/><path d="M15.5 2V14" stroke="#111" stroke-width="1"/><path d="M13.8 4L15.5 1L17.2 4Z" fill="#111"/></svg>
<div style="position:absolute;left:58px;top:635.5px;width:106px;height:19.5px;background:rgba(240,240,240,0.93)"></div>
<svg style="position:absolute;left:61px;top:636px" width="17" height="18" viewBox="0 0 17.5 18" ><path d="M0.5 15.5L0.5 17.5H10.5L13 15.5V13Z" fill="#bdbdbd"/><path d="M0.5 4L3.5 1H13V13L10.5 15.5H0.5Z" fill="#6aaee3"/><path d="M10.5 4L13 1V13L10.5 15.5Z" fill="#4690cd"/><path d="M0.5 4L3.5 1H13L10.5 4Z" fill="#7fbdec"/><path d="M15.5 2V14" stroke="#111" stroke-width="1"/><path d="M13.8 4L15.5 1L17.2 4Z" fill="#111"/></svg>
<div style="position:absolute;left:58px;top:659.5px;width:106px;height:19.5px;background:rgba(240,240,240,0.93)"></div>
<svg style="position:absolute;left:61px;top:660px" width="17" height="18" viewBox="0 0 17.5 18" ><path d="M0.5 15.5L0.5 17.5H10.5L13 15.5V13Z" fill="#bdbdbd"/><path d="M0.5 4L3.5 1H13V13L10.5 15.5H0.5Z" fill="#6aaee3"/><path d="M10.5 4L13 1V13L10.5 15.5Z" fill="#4690cd"/><path d="M0.5 4L3.5 1H13L10.5 4Z" fill="#7fbdec"/><path d="M15.5 2V14" stroke="#111" stroke-width="1"/><path d="M13.8 4L15.5 1L17.2 4Z" fill="#111"/></svg>
<div style="position:absolute;left:58px;top:683.5px;width:106px;height:19.5px;background:rgba(240,240,240,0.93)"></div>
<svg style="position:absolute;left:61px;top:684px" width="17" height="18" viewBox="0 0 17.5 18" ><path d="M0.5 15.5L0.5 17.5H10.5L13 15.5V13Z" fill="#bdbdbd"/><path d="M0.5 4L3.5 1H13V13L10.5 15.5H0.5Z" fill="#6aaee3"/><path d="M10.5 4L13 1V13L10.5 15.5Z" fill="#4690cd"/><path d="M0.5 4L3.5 1H13L10.5 4Z" fill="#7fbdec"/><path d="M15.5 2V14" stroke="#111" stroke-width="1"/><path d="M13.8 4L15.5 1L17.2 4Z" fill="#111"/></svg>
<div style="position:absolute;left:58px;top:707.5px;width:90px;height:19.5px;background:rgba(240,240,240,0.93)"></div>
<svg style="position:absolute;left:61px;top:709px" width="17" height="16" viewBox="0 0 17 16" ><path d="M1 15V7Q1 2.5 6 2.5L8 2.5L12 15Z" fill="#dcdcdc" stroke="#444" stroke-width="1"/><path d="M8 2.2L12 0.8L15.5 11L11.5 13.5Z" fill="#4d97d6"/><path d="M13.5 1.5L16.3 8" stroke="#333" stroke-width="0.9"/></svg>
<div style="position:absolute;left:58px;top:731.5px;width:90px;height:19.5px;background:rgba(240,240,240,0.93)"></div>
<svg style="position:absolute;left:61px;top:733px" width="17" height="16" viewBox="0 0 17 16" ><path d="M1 15V7Q1 2.5 6 2.5L8 2.5L12 15Z" fill="#dcdcdc" stroke="#444" stroke-width="1"/><path d="M8 2.2L12 0.8L15.5 11L11.5 13.5Z" fill="#4d97d6"/><path d="M13.5 1.5L16.3 8" stroke="#333" stroke-width="0.9"/></svg>
<div style="position:absolute;left:58px;top:755.5px;width:106px;height:19.5px;background:rgba(240,240,240,0.93)"></div>
<svg style="position:absolute;left:61px;top:756px" width="17" height="18" viewBox="0 0 17.5 18" ><path d="M0.5 15.5L0.5 17.5H10.5L13 15.5V13Z" fill="#bdbdbd"/><path d="M0.5 4L3.5 1H13V13L10.5 15.5H0.5Z" fill="#6aaee3"/><path d="M10.5 4L13 1V13L10.5 15.5Z" fill="#4690cd"/><path d="M0.5 4L3.5 1H13L10.5 4Z" fill="#7fbdec"/><path d="M15.5 2V14" stroke="#111" stroke-width="1"/><path d="M13.8 4L15.5 1L17.2 4Z" fill="#111"/></svg>
<div style="position:absolute;left:58px;top:779.5px;width:106px;height:19.5px;background:rgba(240,240,240,0.93)"></div>
<svg style="position:absolute;left:61px;top:780px" width="17" height="18" viewBox="0 0 17.5 18" ><path d="M0.5 15.5L0.5 17.5H10.5L13 15.5V13Z" fill="#bdbdbd"/><path d="M0.5 4L3.5 1H13V13L10.5 15.5H0.5Z" fill="#6aaee3"/><path d="M10.5 4L13 1V13L10.5 15.5Z" fill="#4690cd"/><path d="M0.5 4L3.5 1H13L10.5 4Z" fill="#7fbdec"/><path d="M15.5 2V14" stroke="#111" stroke-width="1"/><path d="M13.8 4L15.5 1L17.2 4Z" fill="#111"/></svg>
<div style="position:absolute;left:58px;top:803.5px;width:102px;height:19.5px;background:rgba(240,240,240,0.93)"></div>
<svg style="position:absolute;left:61px;top:805px" width="17" height="16" viewBox="0 0 17 16" ><path d="M1 15.5V6Q1 1.5 6.5 1.5H9Q15.5 3 16 9.5V12.5L13 15.5Z" fill="#dedede" stroke="#444" stroke-width="1" stroke-linejoin="round"/><path d="M8 2.2L11 0.8Q16 3 16.3 9L13.6 11Q13 5 8 2.2Z" fill="#4d9ee0"/></svg>
<div style="position:absolute;left:58px;top:827.5px;width:102px;height:19.5px;background:rgba(240,240,240,0.93)"></div>
<svg style="position:absolute;left:61px;top:829px" width="17" height="16" viewBox="0 0 17 16" ><path d="M1 15.5V6Q1 1.5 6.5 1.5H9Q15.5 3 16 9.5V12.5L13 15.5Z" fill="#dedede" stroke="#444" stroke-width="1" stroke-linejoin="round"/><path d="M8 2.2L11 0.8Q16 3 16.3 9L13.6 11Q13 5 8 2.2Z" fill="#4d9ee0"/></svg>
<div style="position:absolute;left:58px;top:851.5px;width:90px;height:19.5px;background:rgba(240,240,240,0.93)"></div>
<svg style="position:absolute;left:61px;top:853px" width="17" height="16" viewBox="0 0 17 16" ><path d="M1 15V7Q1 2.5 6 2.5L8 2.5L12 15Z" fill="#dcdcdc" stroke="#444" stroke-width="1"/><path d="M8 2.2L12 0.8L15.5 11L11.5 13.5Z" fill="#4d97d6"/><path d="M13.5 1.5L16.3 8" stroke="#333" stroke-width="0.9"/></svg>
<div style="position:absolute;left:58px;top:875.5px;width:106px;height:19.5px;background:rgba(240,240,240,0.93)"></div>
<svg style="position:absolute;left:61px;top:876px" width="17" height="18" viewBox="0 0 17.5 18" ><path d="M0.5 15.5L0.5 17.5H10.5L13 15.5V13Z" fill="#bdbdbd"/><path d="M0.5 4L3.5 1H13V13L10.5 15.5H0.5Z" fill="#6aaee3"/><path d="M10.5 4L13 1V13L10.5 15.5Z" fill="#4690cd"/><path d="M0.5 4L3.5 1H13L10.5 4Z" fill="#7fbdec"/><path d="M15.5 2V14" stroke="#111" stroke-width="1"/><path d="M13.8 4L15.5 1L17.2 4Z" fill="#111"/></svg>
<div style="position:absolute;left:58px;top:899.5px;width:106px;height:19.5px;background:rgba(240,240,240,0.93)"></div>
<svg style="position:absolute;left:61px;top:900px" width="17" height="18" viewBox="0 0 17.5 18" ><path d="M0.5 15.5L0.5 17.5H10.5L13 15.5V13Z" fill="#bdbdbd"/><path d="M0.5 4L3.5 1H13V13L10.5 15.5H0.5Z" fill="#6aaee3"/><path d="M10.5 4L13 1V13L10.5 15.5Z" fill="#4690cd"/><path d="M0.5 4L3.5 1H13L10.5 4Z" fill="#7fbdec"/><path d="M15.5 2V14" stroke="#111" stroke-width="1"/><path d="M13.8 4L15.5 1L17.2 4Z" fill="#111"/></svg>
<div style="position:absolute;left:58px;top:923.5px;width:106px;height:19.5px;background:rgba(240,240,240,0.93)"></div>
<svg style="position:absolute;left:61px;top:924px" width="17" height="18" viewBox="0 0 17.5 18" ><path d="M0.5 15.5L0.5 17.5H10.5L13 15.5V13Z" fill="#bdbdbd"/><path d="M0.5 4L3.5 1H13V13L10.5 15.5H0.5Z" fill="#6aaee3"/><path d="M10.5 4L13 1V13L10.5 15.5Z" fill="#4690cd"/><path d="M0.5 4L3.5 1H13L10.5 4Z" fill="#7fbdec"/><path d="M15.5 2V14" stroke="#111" stroke-width="1"/><path d="M13.8 4L15.5 1L17.2 4Z" fill="#111"/></svg>
<div style="position:absolute;left:58px;top:947.5px;width:106px;height:19.5px;background:rgba(240,240,240,0.93)"></div>
<svg style="position:absolute;left:61px;top:948px" width="17" height="18" viewBox="0 0 17.5 18" ><path d="M0.5 15.5L0.5 17.5H10.5L13 15.5V13Z" fill="#bdbdbd"/><path d="M0.5 4L3.5 1H13V13L10.5 15.5H0.5Z" fill="#6aaee3"/><path d="M10.5 4L13 1V13L10.5 15.5Z" fill="#4690cd"/><path d="M0.5 4L3.5 1H13L10.5 4Z" fill="#7fbdec"/><path d="M15.5 2V14" stroke="#111" stroke-width="1"/><path d="M13.8 4L15.5 1L17.2 4Z" fill="#111"/></svg>
<div style="position:absolute;left:58px;top:971.5px;width:106px;height:19.5px;background:rgba(240,240,240,0.93)"></div>
<svg style="position:absolute;left:61px;top:972px" width="17" height="18" viewBox="0 0 17.5 18" ><path d="M0.5 15.5L0.5 17.5H10.5L13 15.5V13Z" fill="#bdbdbd"/><path d="M0.5 4L3.5 1H13V13L10.5 15.5H0.5Z" fill="#6aaee3"/><path d="M10.5 4L13 1V13L10.5 15.5Z" fill="#4690cd"/><path d="M0.5 4L3.5 1H13L10.5 4Z" fill="#7fbdec"/><path d="M15.5 2V14" stroke="#111" stroke-width="1"/><path d="M13.8 4L15.5 1L17.2 4Z" fill="#111"/></svg>
<div style="position:absolute;left:4px;top:1019px;width:299px;height:25px;background:#f2f2f2;border:1px solid #c9c9c9;box-sizing:border-box"></div>
<svg style="position:absolute;left:282.5px;top:1026.5px" width="10" height="10" viewBox="0 0 10 10" ><circle cx="5" cy="5" r="5" fill="#222"/><path d="M5 2V8M2 5H8" stroke="#fff" stroke-width="1.4"/></svg>
<div style="position:absolute;left:299.5px;top:1026px;width:1px;height:11px;background:#555"></div>
<div style="position:absolute;left:301.5px;top:1027px;width:1px;height:9px;background:#999"></div>
<div style="position:absolute;left:841px;top:1019px;width:237px;height:24px;background:#f0f0f0"></div>
<svg style="position:absolute;left:844px;top:1022px" width="17" height="18" viewBox="0 0 17 18" ><path d="M8.5 1V17" stroke="#444" stroke-width="2.4"/><path d="M8.5 1V17" stroke="#eee" stroke-width="0.9"/><path d="M5.5 4L8.5 0.5L11.5 4Z" fill="#eee" stroke="#444" stroke-width="0.8"/><path d="M3 12Q-1 9 4 7.5M13 7.5Q19 9.5 13 12.3Q9 13.5 4 12.5" fill="none" stroke="#444" stroke-width="1.3"/><path d="M5.5 10L2 12.7L6 14.5Z" fill="#444"/></svg>
<svg style="position:absolute;left:866px;top:1029px" width="6" height="4" viewBox="0 0 6 4" ><polygon points="0,0 6,0 3.0,4" fill="#333"/></svg>
<svg style="position:absolute;left:877px;top:1022px" width="17" height="17" viewBox="0 0 17 17" ><rect x="1" y="6" width="15" height="10" fill="#e8e8ea" stroke="#444" stroke-width="1.1"/><path d="M3 6L6 2L9 4L12 1.5V6" fill="#ddd" stroke="#444" stroke-width="0.9"/><rect x="4" y="9.5" width="9" height="4" fill="#9aa0ae" stroke="#444" stroke-width="0.7"/></svg>
<svg style="position:absolute;left:903px;top:1022px" width="17" height="18" viewBox="0 0 17 18" ><path d="M4.5 10V4Q5.5 2.5 6.5 4V8V2.5Q7.7 1 8.8 2.5V8V3Q10 1.8 11 3V9V5Q12.2 4 13.2 5.2V12Q13 17 8.5 17Q5.5 17 3.5 13L1 9.5Q2 8 4.5 10.5Z" fill="#f4f4f6" stroke="#444" stroke-width="1"/></svg>
<svg style="position:absolute;left:929px;top:1022px" width="18" height="18" viewBox="0 0 18 18" ><circle cx="6.5" cy="8" r="5" fill="#cfe3ea" stroke="#444" stroke-width="1.2"/><path d="M10 11.5L14.5 16" stroke="#444" stroke-width="2.4"/><path d="M11.5 3.5H16.5M14 1V6M11.5 8H16.5" stroke="#444" stroke-width="0.9"/></svg>
<svg style="position:absolute;left:955px;top:1022px" width="18" height="18" viewBox="0 0 18 18" ><rect x="0.7" y="1" width="15" height="15" fill="none" stroke="#444" stroke-width="0.9" stroke-dasharray="2.2 1.5"/><circle cx="7" cy="7.5" r="5.6" fill="#d4e6ea" stroke="#444" stroke-width="1.2"/><path d="M11 11.5L15.5 16" stroke="#444" stroke-width="2.6"/></svg>
<svg style="position:absolute;left:976px;top:1029px" width="6" height="4" viewBox="0 0 6 4" ><polygon points="0,0 6,0 3.0,4" fill="#333"/></svg>
<svg style="position:absolute;left:988px;top:1022px" width="17" height="17" viewBox="0 0 17 17" ><rect x="0.8" y="0.8" width="15" height="11.5" rx="1" fill="#e6e6e8" stroke="#444" stroke-width="1.1"/><rect x="2.8" y="2.8" width="11" height="7.5" fill="#8fb0e0"/><path d="M5.5 15.5H11.5L10.5 12.5H6.5Z" fill="#ddd" stroke="#444" stroke-width="0.7"/></svg>
<svg style="position:absolute;left:1006px;top:1029px" width="6" height="4" viewBox="0 0 6 4" ><polygon points="0,0 6,0 3.0,4" fill="#333"/></svg>
<svg style="position:absolute;left:1019px;top:1022px" width="17" height="17" viewBox="0 0 17 17" ><defs><linearGradient id="gg" x1="0" y1="0" x2="0" y2="1"><stop offset="0" stop-color="#555"/><stop offset="1" stop-color="#8790a8"/></linearGradient></defs><rect x="0.5" y="0.5" width="16" height="16" fill="url(#gg)"/><path d="M4.5 1V16M1 4.5H16" stroke="#f0f0f0" stroke-width="0.7"/><path d="M8.0 1V16M1 8.0H16" stroke="#f0f0f0" stroke-width="0.7"/><path d="M11.5 1V16M1 11.5H16" stroke="#f0f0f0" stroke-width="0.7"/><path d="M15.0 1V16M1 15.0H16" stroke="#f0f0f0" stroke-width="0.7"/></svg>
<svg style="position:absolute;left:1037px;top:1029px" width="6" height="4" viewBox="0 0 6 4" ><polygon points="0,0 6,0 3.0,4" fill="#333"/></svg>
<svg style="position:absolute;left:1050px;top:1023px" width="16" height="15" viewBox="0 0 16 15" ><g fill="#8ea5d6" stroke="#2d4a8a" stroke-width="1"><rect x="0.6" y="0.6" width="6.6" height="5.8"/><rect x="8.6" y="0.6" width="6.6" height="5.8"/><rect x="0.6" y="8.2" width="6.6" height="5.8"/><rect x="8.6" y="8.2" width="6.6" height="5.8"/></g></svg>
<svg style="position:absolute;left:1068px;top:1029px" width="6" height="4" viewBox="0 0 6 4" ><polygon points="0,0 6,0 3.0,4" fill="#333"/></svg>
<span class="t" style="left:23px;top:9.5px;font-size:12px;font-weight:normal;color:#000;font-family:'Liberation Sans','Noto Sans CJK JP',sans-serif"><span style="display:inline-block;width:238.00px;transform-origin:0 50%;transform:scaleX(0.9805)">Autodesk&nbsp;Fusion&nbsp;360&nbsp;(個人用&nbsp;-&nbsp;商用利用不可)</span></span>
<span class="t" style="left:532px;top:39.5px;font-size:12px;font-weight:normal;color:#3c3c3c;font-family:'Liberation Sans','Noto Sans CJK JP',sans-serif"><span style="display:inline-block;width:62.00px;transform-origin:0 50%;transform:scaleX(1.0102)">JR-200&nbsp;v15</span></span>
<span class="t" style="left:1275px;top:39.5px;font-size:12px;font-weight:normal;color:#666;font-family:'Liberation Sans','Noto Sans CJK JP',sans-serif"><span style="display:inline-block;width:48.00px;transform-origin:0 50%;transform:scaleX(1.0738)">jr100_3*</span></span>
<span class="t" style="left:1726px;top:37px;font-size:11px;font-weight:normal;color:#333;font-family:'Liberation Sans','Noto Sans CJK JP',sans-serif"><span style="display:inline-block;width:26.00px;transform-origin:0 50%;transform:scaleX(0.9444)">10/10</span></span>
<span class="t" style="left:42px;top:93px;font-size:12px;font-weight:bold;color:#222;font-family:'Liberation Sans','IPAGothic','Noto Sans CJK JP',sans-serif"><span style="display:inline-block;width:37.00px;transform-origin:0 50%;transform:scaleX(0.7708)">デザイン</span></span>
<span class="t" style="left:150px;top:64px;font-size:11px;font-weight:bold;color:#0b8fd6;font-family:'Liberation Sans','IPAGothic','Noto Sans CJK JP',sans-serif"><span style="display:inline-block;width:32.00px;transform-origin:0 50%;transform:scaleX(0.7273)">ソリッド</span></span>
<span class="t" style="left:228px;top:64px;font-size:11px;font-weight:normal;color:#222;font-family:'Liberation Sans','IPAGothic','Noto Sans CJK JP',sans-serif"><span style="display:inline-block;width:39.00px;transform-origin:0 50%;transform:scaleX(0.7091)">サーフェス</span></span>
<span class="t" style="left:315px;top:64px;font-size:11px;font-weight:normal;color:#222;font-family:'Liberation Sans','IPAGothic','Noto Sans CJK JP',sans-serif"><span style="display:inline-block;width:29.50px;transform-origin:0 50%;transform:scaleX(0.6705)">メッシュ</span></span>
<span class="t" style="left:388.5px;top:64px;font-size:11px;font-weight:normal;color:#222;font-family:'Liberation Sans','IPAGothic','Noto Sans CJK JP',sans-serif"><span style="display:inline-block;width:30.50px;transform-origin:0 50%;transform:scaleX(0.6932)">フォーム</span></span>
<span class="t" style="left:467px;top:64px;font-size:11px;font-weight:normal;color:#222;font-family:'Liberation Sans','IPAGothic','Noto Sans CJK JP',sans-serif"><span style="display:inline-block;width:24.47px;transform-origin:0 50%;transform:scaleX(0.7415)">シート</span><span style="display:inline-block;width:3.06px;transform-origin:0 50%;transform:scaleX(1.0000)">&nbsp;</span><span style="display:inline-block;width:24.47px;transform-origin:0 50%;transform:scaleX(0.7415)">メタル</span></span>
<span class="t" style="left:565px;top:64px;font-size:11px;font-weight:normal;color:#222;font-family:'Liberation Sans','IPAGothic','Noto Sans CJK JP',sans-serif"><span style="display:inline-block;width:44.00px;transform-origin:0 50%;transform:scaleX(0.6667)">プラスチック</span></span>
<span class="t" style="left:658px;top:64px;font-size:11px;font-weight:normal;color:#222;font-family:'Liberation Sans','IPAGothic','Noto Sans CJK JP',sans-serif"><span style="display:inline-block;width:51.00px;transform-origin:0 50%;transform:scaleX(0.6623)">ユーティリティ</span></span>
<span class="t" style="left:220px;top:124.5px;font-size:11px;font-weight:normal;color:#222;font-family:'Liberation Sans','IPAGothic','Noto Sans CJK JP',sans-serif"><span style="display:inline-block;width:20.50px;transform-origin:0 50%;transform:scaleX(0.9318)">作成</span></span>
<span class="t" style="left:468px;top:124.5px;font-size:11px;font-weight:normal;color:#222;font-family:'Liberation Sans','IPAGothic','Noto Sans CJK JP',sans-serif"><span style="display:inline-block;width:20.00px;transform-origin:0 50%;transform:scaleX(0.9091)">修正</span></span>
<span class="t" style="left:643px;top:124.5px;font-size:11px;font-weight:normal;color:#222;font-family:'Liberation Sans','IPAGothic','Noto Sans CJK JP',sans-serif"><span style="display:inline-block;width:38.00px;transform-origin:0 50%;transform:scaleX(0.6909)">アセンブリ</span></span>
<span class="t" style="left:731px;top:124.5px;font-size:11px;font-weight:normal;color:#222;font-family:'Liberation Sans','IPAGothic','Noto Sans CJK JP',sans-serif"><span style="display:inline-block;width:20.50px;transform-origin:0 50%;transform:scaleX(0.9318)">構築</span></span>
<span class="t" style="left:790px;top:124.5px;font-size:11px;font-weight:normal;color:#222;font-family:'Liberation Sans','IPAGothic','Noto Sans CJK JP',sans-serif"><span style="display:inline-block;width:20.50px;transform-origin:0 50%;transform:scaleX(0.9318)">検査</span></span>
<span class="t" style="left:849px;top:124.5px;font-size:11px;font-weight:normal;color:#222;font-family:'Liberation Sans','IPAGothic','Noto Sans CJK JP',sans-serif"><span style="display:inline-block;width:20.50px;transform-origin:0 50%;transform:scaleX(0.9318)">挿入</span></span>
<span class="t" style="left:908px;top:124.5px;font-size:11px;font-weight:normal;color:#222;font-family:'Liberation Sans','IPAGothic','Noto Sans CJK JP',sans-serif"><span style="display:inline-block;width:20.50px;transform-origin:0 50%;transform:scaleX(0.9318)">選択</span></span>
<span class="t" style="left:29px;top:151.5px;font-size:11px;font-weight:normal;color:#333;font-family:'Liberation Sans','IPAGothic','Noto Sans CJK JP',sans-serif"><span style="display:inline-block;width:31.00px;transform-origin:0 50%;transform:scaleX(0.7045)">ブラウザ</span></span>
<span class="t" style="left:98px;top:179.5px;font-size:11px;font-weight:bold;color:#fff;font-family:'Liberation Sans','Noto Sans CJK JP',sans-serif"><span style="display:inline-block;width:56.00px;transform-origin:0 50%;transform:scaleX(0.9739)">JR-200&nbsp;v15</span></span>
<span class="t" style="left:91px;top:203px;font-size:11px;font-weight:normal;color:#111;font-family:'Liberation Sans','IPAGothic','Noto Sans CJK JP',sans-serif"><span style="display:inline-block;width:55.00px;transform-origin:0 50%;transform:scaleX(0.7143)">ドキュメントの</span><span style="display:inline-block;width:22.00px;transform-origin:0 50%;transform:scaleX(1.0000)">設定</span></span>
<span class="t" style="left:90px;top:227px;font-size:11px;font-weight:normal;color:#111;font-family:'Liberation Sans','IPAGothic','Noto Sans CJK JP',sans-serif"><span style="display:inline-block;width:23.00px;transform-origin:0 50%;transform:scaleX(0.6970)">ビュー</span><span style="display:inline-block;width:22.00px;transform-origin:0 50%;transform:scaleX(1.0000)">管理</span></span>
<span class="t" style="left:116px;top:251px;font-size:11px;font-weight:normal;color:#111;font-family:'Liberation Sans','IPAGothic','Noto Sans CJK JP',sans-serif"><span style="display:inline-block;width:20.00px;transform-origin:0 50%;transform:scaleX(0.9091)">原点</span></span>
<span class="t" style="left:116px;top:275px;font-size:11px;font-weight:normal;color:#111;font-family:'Liberation Sans','IPAGothic','Noto Sans CJK JP',sans-serif"><span style="display:inline-block;width:24.00px;transform-origin:0 50%;transform:scaleX(0.7273)">ボディ</span></span>
<span class="t" style="left:133.5px;top:299px;font-size:11px;font-weight:normal;color:#111;font-family:'Liberation Sans','IPAGothic','Noto Sans CJK JP',sans-serif"><span style="display:inline-block;width:74.50px;transform-origin:0 50%;transform:scaleX(0.7525)">キーボード・カバー</span></span>
<span class="t" style="left:133.5px;top:323px;font-size:11px;font-weight:normal;color:#111;font-family:'Liberation Sans','IPAGothic','Noto Sans CJK JP',sans-serif"><span style="display:inline-block;width:74.50px;transform-origin:0 50%;transform:scaleX(0.7525)">キーボード・ラベル</span></span>
<span class="t" style="left:133.5px;top:347px;font-size:11px;font-weight:normal;color:#111;font-family:'Liberation Sans','IPAGothic','Noto Sans CJK JP',sans-serif"><span style="display:inline-block;width:66.50px;transform-origin:0 50%;transform:scaleX(0.7557)">キーボード・キー</span></span>
<span class="t" style="left:133.5px;top:371px;font-size:11px;font-weight:normal;color:#111;font-family:'Liberation Sans','IPAGothic','Noto Sans CJK JP',sans-serif"><span style="display:inline-block;width:19.50px;transform-origin:0 50%;transform:scaleX(0.9109)">LED</span></span>
<span class="t" style="left:133.5px;top:395px;font-size:11px;font-weight:normal;color:#111;font-family:'Liberation Sans','IPAGothic','Noto Sans CJK JP',sans-serif"><span style="display:inline-block;width:30.57px;transform-origin:0 50%;transform:scaleX(0.6948)">ボディ・</span><span style="display:inline-block;width:22.00px;transform-origin:0 50%;transform:scaleX(1.0000)">上面</span><span style="display:inline-block;width:22.93px;transform-origin:0 50%;transform:scaleX(0.6948)">ライン</span></span>
<span class="t" style="left:133.5px;top:419px;font-size:11px;font-weight:normal;color:#111;font-family:'Liberation Sans','IPAGothic','Noto Sans CJK JP',sans-serif"><span style="display:inline-block;width:22.00px;transform-origin:0 50%;transform:scaleX(1.0000)">電源</span><span style="display:inline-block;width:29.50px;transform-origin:0 50%;transform:scaleX(0.6705)">スイッチ</span></span>
<span class="t" style="left:133.5px;top:443px;font-size:11px;font-weight:normal;color:#111;font-family:'Liberation Sans','IPAGothic','Noto Sans CJK JP',sans-serif"><span style="display:inline-block;width:22.00px;transform-origin:0 50%;transform:scaleX(1.0000)">電源</span><span style="display:inline-block;width:29.50px;transform-origin:0 50%;transform:scaleX(0.6705)">スイッチ</span><span style="display:inline-block;width:11.00px;transform-origin:0 50%;transform:scaleX(1.0000)">枠</span></span>
<span class="t" style="left:133.5px;top:467px;font-size:11px;font-weight:normal;color:#111;font-family:'Liberation Sans','IPAGothic','Noto Sans CJK JP',sans-serif"><span style="display:inline-block;width:83.50px;transform-origin:0 50%;transform:scaleX(0.6901)">ジョイスティックポート</span></span>
<span class="t" style="left:133.5px;top:491px;font-size:11px;font-weight:normal;color:#111;font-family:'Liberation Sans','IPAGothic','Noto Sans CJK JP',sans-serif"><span style="display:inline-block;width:28.50px;transform-origin:0 50%;transform:scaleX(0.6477)">ボディ・</span><span style="display:inline-block;width:22.00px;transform-origin:0 50%;transform:scaleX(1.0000)">下面</span></span>
<span class="t" style="left:133.5px;top:515px;font-size:11px;font-weight:normal;color:#111;font-family:'Liberation Sans','IPAGothic','Noto Sans CJK JP',sans-serif"><span style="display:inline-block;width:28.50px;transform-origin:0 50%;transform:scaleX(0.6477)">ボディ・</span><span style="display:inline-block;width:22.00px;transform-origin:0 50%;transform:scaleX(1.0000)">上面</span></span>
<span class="t" style="left:133.5px;top:539px;font-size:11px;font-weight:normal;color:#111;font-family:'Liberation Sans','IPAGothic','Noto Sans CJK JP',sans-serif"><span style="display:inline-block;width:22.00px;transform-origin:0 50%;transform:scaleX(1.0000)">内部</span><span style="display:inline-block;width:31.50px;transform-origin:0 50%;transform:scaleX(0.7159)">フレーム</span></span>
<span class="t" style="left:116px;top:563px;font-size:11px;font-weight:normal;color:#111;font-family:'Liberation Sans','IPAGothic','Noto Sans CJK JP',sans-serif"><span style="display:inline-block;width:40.00px;transform-origin:0 50%;transform:scaleX(0.7273)">キャンバス</span></span>
<span class="t" style="left:115px;top:587px;font-size:11px;font-weight:normal;color:#111;font-family:'Liberation Sans','IPAGothic','Noto Sans CJK JP',sans-serif"><span style="display:inline-block;width:71.00px;transform-origin:0 50%;transform:scaleX(0.7172)">コンストラクション</span></span>
<span class="t" style="left:91px;top:611px;font-size:11px;font-weight:normal;color:#111;font-family:'Liberation Sans','IPAGothic','Noto Sans CJK JP',sans-serif"><span style="display:inline-block;width:11.00px;transform-origin:0 50%;transform:scaleX(1.0000)">押</span><span style="display:inline-block;width:7.76px;transform-origin:0 50%;transform:scaleX(0.7053)">し</span><span style="display:inline-block;width:11.00px;transform-origin:0 50%;transform:scaleX(1.0000)">出</span><span style="display:inline-block;width:7.76px;transform-origin:0 50%;transform:scaleX(0.7053)">し</span><span style="display:inline-block;width:24.48px;transform-origin:0 50%;transform:scaleX(1.0000)">2889</span></span>
<span class="t" style="left:91px;top:635px;font-size:11px;font-weight:normal;color:#111;font-family:'Liberation Sans','IPAGothic','Noto Sans CJK JP',sans-serif"><span style="display:inline-block;width:11.00px;transform-origin:0 50%;transform:scaleX(1.0000)">押</span><span style="display:inline-block;width:7.76px;transform-origin:0 50%;transform:scaleX(0.7053)">し</span><span style="display:inline-block;width:11.00px;transform-origin:0 50%;transform:scaleX(1.0000)">出</span><span style="display:inline-block;width:7.76px;transform-origin:0 50%;transform:scaleX(0.7053)">し</span><span style="display:inline-block;width:24.48px;transform-origin:0 50%;transform:scaleX(1.0000)">2890</span></span>
<span class="t" style="left:91px;top:659px;font-size:11px;font-weight:normal;color:#111;font-family:'Liberation Sans','IPAGothic','Noto Sans CJK JP',sans-serif"><span style="display:inline-block;width:11.00px;transform-origin:0 50%;transform:scaleX(1.0000)">押</span><span style="display:inline-block;width:7.76px;transform-origin:0 50%;transform:scaleX(0.7053)">し</span><span style="display:inline-block;width:11.00px;transform-origin:0 50%;transform:scaleX(1.0000)">出</span><span style="display:inline-block;width:7.76px;transform-origin:0 50%;transform:scaleX(0.7053)">し</span><span style="display:inline-block;width:24.48px;transform-origin:0 50%;transform:scaleX(1.0000)">2914</span></span>
<span class="t" style="left:91px;top:683px;font-size:11px;font-weight:normal;color:#111;font-family:'Liberation Sans','IPAGothic','Noto Sans CJK JP',sans-serif"><span style="display:inline-block;width:11.00px;transform-origin:0 50%;transform:scaleX(1.0000)">押</span><span style="display:inline-block;width:7.76px;transform-origin:0 50%;transform:scaleX(0.7053)">し</span><span style="display:inline-block;width:11.00px;transform-origin:0 50%;transform:scaleX(1.0000)">出</span><span style="display:inline-block;width:7.76px;transform-origin:0 50%;transform:scaleX(0.7053)">し</span><span style="display:inline-block;width:24.48px;transform-origin:0 50%;transform:scaleX(1.0000)">2922</span></span>
<span class="t" style="left:91px;top:707px;font-size:11px;font-weight:normal;color:#111;font-family:'Liberation Sans','IPAGothic','Noto Sans CJK JP',sans-serif"><span style="display:inline-block;width:46.00px;transform-origin:0 50%;transform:scaleX(0.9896)">勾配2923</span></span>
<span class="t" style="left:91px;top:731px;font-size:11px;font-weight:normal;color:#111;font-family:'Liberation Sans','IPAGothic','Noto Sans CJK JP',sans-serif"><span style="display:inline-block;width:46.00px;transform-origin:0 50%;transform:scaleX(0.9896)">勾配2924</span></span>
<span class="t" style="left:91px;top:755px;font-size:11px;font-weight:normal;color:#111;font-family:'Liberation Sans','IPAGothic','Noto Sans CJK JP',sans-serif"><span style="display:inline-block;width:11.00px;transform-origin:0 50%;transform:scaleX(1.0000)">押</span><span style="display:inline-block;width:7.76px;transform-origin:0 50%;transform:scaleX(0.7053)">し</span><span style="display:inline-block;width:11.00px;transform-origin:0 50%;transform:scaleX(1.0000)">出</span><span style="display:inline-block;width:7.76px;transform-origin:0 50%;transform:scaleX(0.7053)">し</span><span style="display:inline-block;width:24.48px;transform-origin:0 50%;transform:scaleX(1.0000)">2925</span></span>
<span class="t" style="left:91px;top:779px;font-size:11px;font-weight:normal;color:#111;font-family:'Liberation Sans','IPAGothic','Noto Sans CJK JP',sans-serif"><span style="display:inline-block;width:11.00px;transform-origin:0 50%;transform:scaleX(1.0000)">押</span><span style="display:inline-block;width:7.76px;transform-origin:0 50%;transform:scaleX(0.7053)">し</span><span style="display:inline-block;width:11.00px;transform-origin:0 50%;transform:scaleX(1.0000)">出</span><span style="display:inline-block;width:7.76px;transform-origin:0 50%;transform:scaleX(0.7053)">し</span><span style="display:inline-block;width:24.48px;transform-origin:0 50%;transform:scaleX(1.0000)">2926</span></span>
<span class="t" style="left:91px;top:803px;font-size:11px;font-weight:normal;color:#111;font-family:'Liberation Sans','IPAGothic','Noto Sans CJK JP',sans-serif"><span style="display:inline-block;width:34.52px;transform-origin:0 50%;transform:scaleX(0.6276)">フィレット</span><span style="display:inline-block;width:24.48px;transform-origin:0 50%;transform:scaleX(1.0000)">2927</span></span>
<span class="t" style="left:91px;top:827px;font-size:11px;font-weight:normal;color:#111;font-family:'Liberation Sans','IPAGothic','Noto Sans CJK JP',sans-serif"><span style="display:inline-block;width:34.52px;transform-origin:0 50%;transform:scaleX(0.6276)">フィレット</span><span style="display:inline-block;width:24.48px;transform-origin:0 50%;transform:scaleX(1.0000)">2928</span></span>
<span class="t" style="left:91px;top:851px;font-size:11px;font-weight:normal;color:#111;font-family:'Liberation Sans','IPAGothic','Noto Sans CJK JP',sans-serif"><span style="display:inline-block;width:46.00px;transform-origin:0 50%;transform:scaleX(0.9896)">勾配2929</span></span>
<span class="t" style="left:91px;top:875px;font-size:11px;font-weight:normal;color:#111;font-family:'Liberation Sans','IPAGothic','Noto Sans CJK JP',sans-serif"><span style="display:inline-block;width:11.00px;transform-origin:0 50%;transform:scaleX(1.0000)">押</span><span style="display:inline-block;width:7.76px;transform-origin:0 50%;transform:scaleX(0.7053)">し</span><span style="display:inline-block;width:11.00px;transform-origin:0 50%;transform:scaleX(1.0000)">出</span><span style="display:inline-block;width:7.76px;transform-origin:0 50%;transform:scaleX(0.7053)">し</span><span style="display:inline-block;width:24.48px;transform-origin:0 50%;transform:scaleX(1.0000)">2932</span></span>
<span class="t" style="left:91px;top:899px;font-size:11px;font-weight:normal;color:#111;font-family:'Liberation Sans','IPAGothic','Noto Sans CJK JP',sans-serif"><span style="display:inline-block;width:11.00px;transform-origin:0 50%;transform:scaleX(1.0000)">押</span><span style="display:inline-block;width:7.76px;transform-origin:0 50%;transform:scaleX(0.7053)">し</span><span style="display:inline-block;width:11.00px;transform-origin:0 50%;transform:scaleX(1.0000)">出</span><span style="display:inline-block;width:7.76px;transform-origin:0 50%;transform:scaleX(0.7053)">し</span><span style="display:inline-block;width:24.48px;transform-origin:0 50%;transform:scaleX(1.0000)">2933</span></span>
<span class="t" style="left:91px;top:923px;font-size:11px;font-weight:normal;color:#111;font-family:'Liberation Sans','IPAGothic','Noto Sans CJK JP',sans-serif"><span style="display:inline-block;width:11.00px;transform-origin:0 50%;transform:scaleX(1.0000)">押</span><span style="display:inline-block;width:7.76px;transform-origin:0 50%;transform:scaleX(0.7053)">し</span><span style="display:inline-block;width:11.00px;transform-origin:0 50%;transform:scaleX(1.0000)">出</span><span style="display:inline-block;width:7.76px;transform-origin:0 50%;transform:scaleX(0.7053)">し</span><span style="display:inline-block;width:24.48px;transform-origin:0 50%;transform:scaleX(1.0000)">2934</span></span>
<span class="t" style="left:91px;top:947px;font-size:11px;font-weight:normal;color:#111;font-family:'Liberation Sans','IPAGothic','Noto Sans CJK JP',sans-serif"><span style="display:inline-block;width:11.00px;transform-origin:0 50%;transform:scaleX(1.0000)">押</span><span style="display:inline-block;width:7.76px;transform-origin:0 50%;transform:scaleX(0.7053)">し</span><span style="display:inline-block;width:11.00px;transform-origin:0 50%;transform:scaleX(1.0000)">出</span><span style="display:inline-block;width:7.76px;transform-origin:0 50%;transform:scaleX(0.7053)">し</span><span style="display:inline-block;width:24.48px;transform-origin:0 50%;transform:scaleX(1.0000)">2938</span></span>
<span class="t" style="left:91px;top:971px;font-size:11px;font-weight:normal;color:#111;font-family:'Liberation Sans','IPAGothic','Noto Sans CJK JP',sans-serif"><span style="display:inline-block;width:11.00px;transform-origin:0 50%;transform:scaleX(1.0000)">押</span><span style="display:inline-block;width:7.76px;transform-origin:0 50%;transform:scaleX(0.7053)">し</span><span style="display:inline-block;width:11.00px;transform-origin:0 50%;transform:scaleX(1.0000)">出</span><span style="display:inline-block;width:7.76px;transform-origin:0 50%;transform:scaleX(0.7053)">し</span><span style="display:inline-block;width:24.48px;transform-origin:0 50%;transform:scaleX(1.0000)">2943</span></span>
<span class="t" style="left:28px;top:1021px;font-size:11px;font-weight:normal;color:#333;font-family:'Liberation Sans','IPAGothic','Noto Sans CJK JP',sans-serif"><span style="display:inline-block;width:32.00px;transform-origin:0 50%;transform:scaleX(0.7273)">コメント</span></span>
<span class="t" style="left:1818px;top:1048px;font-size:12px;color:#fff;font-family:'Liberation Sans',sans-serif">11:55</span>
</body></html>
